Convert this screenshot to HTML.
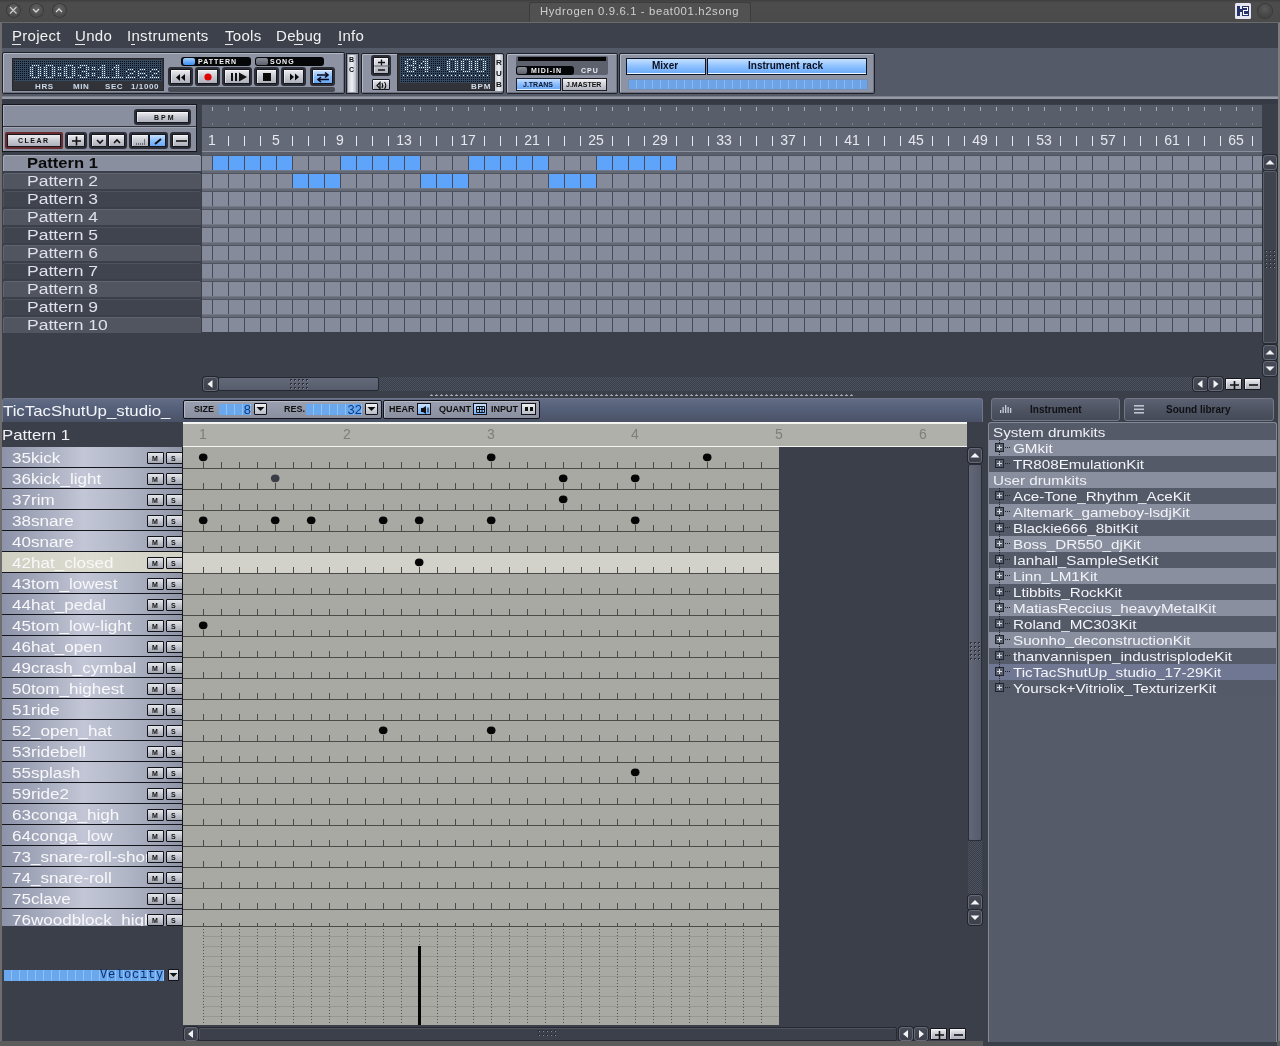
<!DOCTYPE html><html><head><meta charset="utf-8"><title>Hydrogen</title><style>
*{margin:0;padding:0;box-sizing:border-box}
html,body{width:1280px;height:1046px;overflow:hidden;background:#3b3f4a;font-family:"Liberation Sans",sans-serif}
.t{will-change:transform}
div,span{position:absolute}
.t{white-space:pre;line-height:1}
</style></head><body><div style="left:0px;top:0px;width:1280px;height:23px;background:linear-gradient(#3e3e3e,#4d4d4d 3px,#4a4a4a);"></div><div style="left:0px;top:22px;width:1280px;height:1px;background:#6b6b6b;"></div><div style="left:529px;top:2px;width:222px;height:20px;background:#515151;border:1px solid #3c3c3c;border-bottom:none;border-radius:3px 3px 0 0;"></div><div class="t" style="left:540px;top:6px;font-size:11.3px;color:#cfcfcf;letter-spacing:0.65px">Hydrogen 0.9.6.1 - beat001.h2song</div><div style="left:6.5px;top:3.5px;width:13.5px;height:13.5px;border-radius:50%;background:radial-gradient(circle at 50% 35%,#626262,#4a4a4a 75%);box-shadow:0 0 0 0.8px #353535;"></div><div style="left:29.5px;top:3.5px;width:13.5px;height:13.5px;border-radius:50%;background:radial-gradient(circle at 50% 35%,#626262,#4a4a4a 75%);box-shadow:0 0 0 0.8px #353535;"></div><div style="left:52.5px;top:3.5px;width:13.5px;height:13.5px;border-radius:50%;background:radial-gradient(circle at 50% 35%,#626262,#4a4a4a 75%);box-shadow:0 0 0 0.8px #353535;"></div><svg style="position:absolute;left:0;top:0" width="80" height="22"><path d="M10 7l6.5 6.5M16.5 7L10 13.5" stroke="#d0d0d0" stroke-width="1.1"/><path d="M33 9l3 3 3-3" stroke="#d8d8d8" stroke-width="1.3" fill="none"/><path d="M56 12l3-3 3 3" stroke="#d8d8d8" stroke-width="1.3" fill="none"/></svg><svg style="position:absolute;left:1235px;top:3px" width="16" height="16"><rect width="16" height="16" rx="1.5" fill="#e6e6f2"/><rect x="2" y="3" width="3" height="10" fill="#26326a"/><rect x="5" y="6" width="3" height="3" fill="#26326a"/><rect x="7" y="3" width="7" height="10" fill="#26326a"/><path d="M8 4h5v4h-4v3h4v1H8V7h4V5H8z" fill="#ffffff"/></svg><div style="left:1258px;top:4px;width:14px;height:14px;border-radius:50%;background:radial-gradient(circle at 50% 35%,#5a5a5a,#444 70%);box-shadow:0 0 0 1px #3a3a3a;"></div><div style="left:0px;top:23px;width:2px;height:1023px;background:#6e6e6e;"></div><div style="left:1278px;top:23px;width:2px;height:1023px;background:#7d7d7d;"></div><div style="left:2px;top:23px;width:1276px;height:25px;background:#3d414c;"></div><div class="t" style="left:12px;top:28px;font-size:15px;color:#f2f2f2;letter-spacing:0.3px">Project</div><div class="t" style="left:75px;top:28px;font-size:15px;color:#f2f2f2;letter-spacing:0.3px">Undo</div><div class="t" style="left:127px;top:28px;font-size:15px;color:#f2f2f2;letter-spacing:0.3px">Instruments</div><div class="t" style="left:225px;top:28px;font-size:15px;color:#f2f2f2;letter-spacing:0.3px">Tools</div><div class="t" style="left:276px;top:28px;font-size:15px;color:#f2f2f2;letter-spacing:0.3px">Debug</div><div class="t" style="left:338px;top:28px;font-size:15px;color:#f2f2f2;letter-spacing:0.3px">Info</div><div style="left:12px;top:44px;width:9px;height:1px;background:#e8e8e8;"></div><div style="left:75px;top:44px;width:10px;height:1px;background:#e8e8e8;"></div><div style="left:225px;top:44px;width:8px;height:1px;background:#e8e8e8;"></div><div style="left:294px;top:44px;width:9px;height:1px;background:#e8e8e8;"></div><div style="left:131px;top:44px;width:4px;height:1px;background:#e8e8e8;"></div><div style="left:338px;top:44px;width:4px;height:1px;background:#e8e8e8;"></div><div style="left:2px;top:48px;width:1276px;height:4px;background:#555a68;"></div><div style="left:2px;top:52px;width:1276px;height:45px;background:#555a68;"></div><div style="left:2px;top:52px;width:343px;height:42px;background:#8e93a3;border:1px solid #1f2128;box-shadow:inset 1px 1px 0 #b4b8c6, inset -1px -1px 0 #6d7180;border-radius:2px;"></div><div style="left:12px;top:58px;width:152px;height:33px;background:#323338;border:1px solid #26272b;"></div><svg style="position:absolute;left:14px;top:60px" width="148" height="21"><defs><pattern id="pat14" x="0" y="0" width="2" height="2" patternUnits="userSpaceOnUse"><rect width="2" height="2" fill="#354a5f"/><rect x="0" y="1" width="1" height="1" fill="#050b16"/></pattern></defs><rect width="148" height="21" fill="url(#pat14)"/><rect x="16" y="7" width="1" height="1" fill="#e6f0ff"/><rect x="16" y="9" width="1" height="1" fill="#e6f0ff"/><rect x="16" y="11" width="1" height="1" fill="#e6f0ff"/><rect x="16" y="13" width="1" height="1" fill="#e6f0ff"/><rect x="16" y="15" width="1" height="1" fill="#e6f0ff"/><rect x="18" y="5" width="1" height="1" fill="#e6f0ff"/><rect x="18" y="7" width="1" height="1" fill="#e6f0ff"/><rect x="18" y="9" width="1" height="1" fill="#e6f0ff"/><rect x="18" y="11" width="1" height="1" fill="#e6f0ff"/><rect x="18" y="13" width="1" height="1" fill="#e6f0ff"/><rect x="18" y="15" width="1" height="1" fill="#e6f0ff"/><rect x="18" y="17" width="1" height="1" fill="#e6f0ff"/><rect x="20" y="5" width="1" height="1" fill="#e6f0ff"/><rect x="20" y="17" width="1" height="1" fill="#e6f0ff"/><rect x="22" y="5" width="1" height="1" fill="#e6f0ff"/><rect x="22" y="17" width="1" height="1" fill="#e6f0ff"/><rect x="24" y="5" width="1" height="1" fill="#e6f0ff"/><rect x="24" y="7" width="1" height="1" fill="#e6f0ff"/><rect x="24" y="9" width="1" height="1" fill="#e6f0ff"/><rect x="24" y="11" width="1" height="1" fill="#e6f0ff"/><rect x="24" y="13" width="1" height="1" fill="#e6f0ff"/><rect x="24" y="15" width="1" height="1" fill="#e6f0ff"/><rect x="24" y="17" width="1" height="1" fill="#e6f0ff"/><rect x="26" y="7" width="1" height="1" fill="#e6f0ff"/><rect x="26" y="9" width="1" height="1" fill="#e6f0ff"/><rect x="26" y="11" width="1" height="1" fill="#e6f0ff"/><rect x="26" y="13" width="1" height="1" fill="#e6f0ff"/><rect x="26" y="15" width="1" height="1" fill="#e6f0ff"/><rect x="30" y="7" width="1" height="1" fill="#e6f0ff"/><rect x="30" y="9" width="1" height="1" fill="#e6f0ff"/><rect x="30" y="11" width="1" height="1" fill="#e6f0ff"/><rect x="30" y="13" width="1" height="1" fill="#e6f0ff"/><rect x="30" y="15" width="1" height="1" fill="#e6f0ff"/><rect x="32" y="5" width="1" height="1" fill="#e6f0ff"/><rect x="32" y="7" width="1" height="1" fill="#e6f0ff"/><rect x="32" y="9" width="1" height="1" fill="#e6f0ff"/><rect x="32" y="11" width="1" height="1" fill="#e6f0ff"/><rect x="32" y="13" width="1" height="1" fill="#e6f0ff"/><rect x="32" y="15" width="1" height="1" fill="#e6f0ff"/><rect x="32" y="17" width="1" height="1" fill="#e6f0ff"/><rect x="34" y="5" width="1" height="1" fill="#e6f0ff"/><rect x="34" y="17" width="1" height="1" fill="#e6f0ff"/><rect x="36" y="5" width="1" height="1" fill="#e6f0ff"/><rect x="36" y="17" width="1" height="1" fill="#e6f0ff"/><rect x="38" y="5" width="1" height="1" fill="#e6f0ff"/><rect x="38" y="7" width="1" height="1" fill="#e6f0ff"/><rect x="38" y="9" width="1" height="1" fill="#e6f0ff"/><rect x="38" y="11" width="1" height="1" fill="#e6f0ff"/><rect x="38" y="13" width="1" height="1" fill="#e6f0ff"/><rect x="38" y="15" width="1" height="1" fill="#e6f0ff"/><rect x="38" y="17" width="1" height="1" fill="#e6f0ff"/><rect x="40" y="7" width="1" height="1" fill="#e6f0ff"/><rect x="40" y="9" width="1" height="1" fill="#e6f0ff"/><rect x="40" y="11" width="1" height="1" fill="#e6f0ff"/><rect x="40" y="13" width="1" height="1" fill="#e6f0ff"/><rect x="40" y="15" width="1" height="1" fill="#e6f0ff"/><rect x="44" y="7" width="1" height="1" fill="#e6f0ff"/><rect x="44" y="9" width="1" height="1" fill="#e6f0ff"/><rect x="44" y="13" width="1" height="1" fill="#e6f0ff"/><rect x="44" y="15" width="1" height="1" fill="#e6f0ff"/><rect x="46" y="7" width="1" height="1" fill="#e6f0ff"/><rect x="46" y="9" width="1" height="1" fill="#e6f0ff"/><rect x="46" y="13" width="1" height="1" fill="#e6f0ff"/><rect x="46" y="15" width="1" height="1" fill="#e6f0ff"/><rect x="50" y="7" width="1" height="1" fill="#e6f0ff"/><rect x="50" y="9" width="1" height="1" fill="#e6f0ff"/><rect x="50" y="11" width="1" height="1" fill="#e6f0ff"/><rect x="50" y="13" width="1" height="1" fill="#e6f0ff"/><rect x="50" y="15" width="1" height="1" fill="#e6f0ff"/><rect x="52" y="5" width="1" height="1" fill="#e6f0ff"/><rect x="52" y="7" width="1" height="1" fill="#e6f0ff"/><rect x="52" y="9" width="1" height="1" fill="#e6f0ff"/><rect x="52" y="11" width="1" height="1" fill="#e6f0ff"/><rect x="52" y="13" width="1" height="1" fill="#e6f0ff"/><rect x="52" y="15" width="1" height="1" fill="#e6f0ff"/><rect x="52" y="17" width="1" height="1" fill="#e6f0ff"/><rect x="54" y="5" width="1" height="1" fill="#e6f0ff"/><rect x="54" y="17" width="1" height="1" fill="#e6f0ff"/><rect x="56" y="5" width="1" height="1" fill="#e6f0ff"/><rect x="56" y="17" width="1" height="1" fill="#e6f0ff"/><rect x="58" y="5" width="1" height="1" fill="#e6f0ff"/><rect x="58" y="7" width="1" height="1" fill="#e6f0ff"/><rect x="58" y="9" width="1" height="1" fill="#e6f0ff"/><rect x="58" y="11" width="1" height="1" fill="#e6f0ff"/><rect x="58" y="13" width="1" height="1" fill="#e6f0ff"/><rect x="58" y="15" width="1" height="1" fill="#e6f0ff"/><rect x="58" y="17" width="1" height="1" fill="#e6f0ff"/><rect x="60" y="7" width="1" height="1" fill="#e6f0ff"/><rect x="60" y="9" width="1" height="1" fill="#e6f0ff"/><rect x="60" y="11" width="1" height="1" fill="#e6f0ff"/><rect x="60" y="13" width="1" height="1" fill="#e6f0ff"/><rect x="60" y="15" width="1" height="1" fill="#e6f0ff"/><rect x="64" y="7" width="1" height="1" fill="#e6f0ff"/><rect x="64" y="15" width="1" height="1" fill="#e6f0ff"/><rect x="66" y="5" width="1" height="1" fill="#e6f0ff"/><rect x="66" y="7" width="1" height="1" fill="#e6f0ff"/><rect x="66" y="15" width="1" height="1" fill="#e6f0ff"/><rect x="66" y="17" width="1" height="1" fill="#e6f0ff"/><rect x="68" y="5" width="1" height="1" fill="#e6f0ff"/><rect x="68" y="11" width="1" height="1" fill="#e6f0ff"/><rect x="68" y="17" width="1" height="1" fill="#e6f0ff"/><rect x="70" y="5" width="1" height="1" fill="#e6f0ff"/><rect x="70" y="11" width="1" height="1" fill="#e6f0ff"/><rect x="70" y="17" width="1" height="1" fill="#e6f0ff"/><rect x="72" y="5" width="1" height="1" fill="#e6f0ff"/><rect x="72" y="7" width="1" height="1" fill="#e6f0ff"/><rect x="72" y="9" width="1" height="1" fill="#e6f0ff"/><rect x="72" y="11" width="1" height="1" fill="#e6f0ff"/><rect x="72" y="13" width="1" height="1" fill="#e6f0ff"/><rect x="72" y="15" width="1" height="1" fill="#e6f0ff"/><rect x="72" y="17" width="1" height="1" fill="#e6f0ff"/><rect x="74" y="7" width="1" height="1" fill="#e6f0ff"/><rect x="74" y="9" width="1" height="1" fill="#e6f0ff"/><rect x="74" y="13" width="1" height="1" fill="#e6f0ff"/><rect x="74" y="15" width="1" height="1" fill="#e6f0ff"/><rect x="78" y="7" width="1" height="1" fill="#e6f0ff"/><rect x="78" y="9" width="1" height="1" fill="#e6f0ff"/><rect x="78" y="13" width="1" height="1" fill="#e6f0ff"/><rect x="78" y="15" width="1" height="1" fill="#e6f0ff"/><rect x="80" y="7" width="1" height="1" fill="#e6f0ff"/><rect x="80" y="9" width="1" height="1" fill="#e6f0ff"/><rect x="80" y="13" width="1" height="1" fill="#e6f0ff"/><rect x="80" y="15" width="1" height="1" fill="#e6f0ff"/><rect x="84" y="9" width="1" height="1" fill="#e6f0ff"/><rect x="84" y="17" width="1" height="1" fill="#e6f0ff"/><rect x="86" y="7" width="1" height="1" fill="#e6f0ff"/><rect x="86" y="17" width="1" height="1" fill="#e6f0ff"/><rect x="88" y="5" width="1" height="1" fill="#e6f0ff"/><rect x="88" y="7" width="1" height="1" fill="#e6f0ff"/><rect x="88" y="9" width="1" height="1" fill="#e6f0ff"/><rect x="88" y="11" width="1" height="1" fill="#e6f0ff"/><rect x="88" y="13" width="1" height="1" fill="#e6f0ff"/><rect x="88" y="15" width="1" height="1" fill="#e6f0ff"/><rect x="88" y="17" width="1" height="1" fill="#e6f0ff"/><rect x="90" y="5" width="1" height="1" fill="#e6f0ff"/><rect x="90" y="7" width="1" height="1" fill="#e6f0ff"/><rect x="90" y="9" width="1" height="1" fill="#e6f0ff"/><rect x="90" y="11" width="1" height="1" fill="#e6f0ff"/><rect x="90" y="13" width="1" height="1" fill="#e6f0ff"/><rect x="90" y="15" width="1" height="1" fill="#e6f0ff"/><rect x="90" y="17" width="1" height="1" fill="#e6f0ff"/><rect x="92" y="17" width="1" height="1" fill="#e6f0ff"/><rect x="94" y="17" width="1" height="1" fill="#e6f0ff"/><rect x="98" y="9" width="1" height="1" fill="#e6f0ff"/><rect x="98" y="17" width="1" height="1" fill="#e6f0ff"/><rect x="100" y="7" width="1" height="1" fill="#e6f0ff"/><rect x="100" y="17" width="1" height="1" fill="#e6f0ff"/><rect x="102" y="5" width="1" height="1" fill="#e6f0ff"/><rect x="102" y="7" width="1" height="1" fill="#e6f0ff"/><rect x="102" y="9" width="1" height="1" fill="#e6f0ff"/><rect x="102" y="11" width="1" height="1" fill="#e6f0ff"/><rect x="102" y="13" width="1" height="1" fill="#e6f0ff"/><rect x="102" y="15" width="1" height="1" fill="#e6f0ff"/><rect x="102" y="17" width="1" height="1" fill="#e6f0ff"/><rect x="104" y="5" width="1" height="1" fill="#e6f0ff"/><rect x="104" y="7" width="1" height="1" fill="#e6f0ff"/><rect x="104" y="9" width="1" height="1" fill="#e6f0ff"/><rect x="104" y="11" width="1" height="1" fill="#e6f0ff"/><rect x="104" y="13" width="1" height="1" fill="#e6f0ff"/><rect x="104" y="15" width="1" height="1" fill="#e6f0ff"/><rect x="104" y="17" width="1" height="1" fill="#e6f0ff"/><rect x="106" y="17" width="1" height="1" fill="#e6f0ff"/><rect x="108" y="17" width="1" height="1" fill="#e6f0ff"/><rect x="112" y="11" width="1" height="1" fill="#e6f0ff"/><rect x="112" y="17" width="1" height="1" fill="#e6f0ff"/><rect x="114" y="9" width="1" height="1" fill="#e6f0ff"/><rect x="114" y="15" width="1" height="1" fill="#e6f0ff"/><rect x="114" y="17" width="1" height="1" fill="#e6f0ff"/><rect x="116" y="9" width="1" height="1" fill="#e6f0ff"/><rect x="116" y="13" width="1" height="1" fill="#e6f0ff"/><rect x="116" y="17" width="1" height="1" fill="#e6f0ff"/><rect x="118" y="9" width="1" height="1" fill="#e6f0ff"/><rect x="118" y="13" width="1" height="1" fill="#e6f0ff"/><rect x="118" y="17" width="1" height="1" fill="#e6f0ff"/><rect x="120" y="11" width="1" height="1" fill="#e6f0ff"/><rect x="120" y="17" width="1" height="1" fill="#e6f0ff"/><rect x="124" y="11" width="1" height="1" fill="#e6f0ff"/><rect x="124" y="13" width="1" height="1" fill="#e6f0ff"/><rect x="124" y="15" width="1" height="1" fill="#e6f0ff"/><rect x="126" y="9" width="1" height="1" fill="#e6f0ff"/><rect x="126" y="13" width="1" height="1" fill="#e6f0ff"/><rect x="126" y="17" width="1" height="1" fill="#e6f0ff"/><rect x="128" y="9" width="1" height="1" fill="#e6f0ff"/><rect x="128" y="13" width="1" height="1" fill="#e6f0ff"/><rect x="128" y="17" width="1" height="1" fill="#e6f0ff"/><rect x="130" y="9" width="1" height="1" fill="#e6f0ff"/><rect x="130" y="13" width="1" height="1" fill="#e6f0ff"/><rect x="130" y="17" width="1" height="1" fill="#e6f0ff"/><rect x="132" y="15" width="1" height="1" fill="#e6f0ff"/><rect x="136" y="11" width="1" height="1" fill="#e6f0ff"/><rect x="136" y="17" width="1" height="1" fill="#e6f0ff"/><rect x="138" y="9" width="1" height="1" fill="#e6f0ff"/><rect x="138" y="15" width="1" height="1" fill="#e6f0ff"/><rect x="138" y="17" width="1" height="1" fill="#e6f0ff"/><rect x="140" y="9" width="1" height="1" fill="#e6f0ff"/><rect x="140" y="13" width="1" height="1" fill="#e6f0ff"/><rect x="140" y="17" width="1" height="1" fill="#e6f0ff"/><rect x="142" y="9" width="1" height="1" fill="#e6f0ff"/><rect x="142" y="13" width="1" height="1" fill="#e6f0ff"/><rect x="142" y="17" width="1" height="1" fill="#e6f0ff"/><rect x="144" y="11" width="1" height="1" fill="#e6f0ff"/><rect x="144" y="17" width="1" height="1" fill="#e6f0ff"/></svg><div class="t" style="left:35px;top:83px;font-size:8px;font-weight:bold;color:#c9d8ea;letter-spacing:0.6px">HRS</div><div class="t" style="left:73px;top:83px;font-size:8px;font-weight:bold;color:#c9d8ea;letter-spacing:0.6px">MIN</div><div class="t" style="left:105px;top:83px;font-size:8px;font-weight:bold;color:#c9d8ea;letter-spacing:0.6px">SEC</div><div class="t" style="left:131px;top:83px;font-size:8px;font-weight:bold;color:#c9d8ea;letter-spacing:0.6px">1/1000</div><div style="left:181px;top:57px;width:70px;height:9px;background:#050608;border-radius:3px;"></div><div style="left:183px;top:58px;width:12px;height:7px;background:linear-gradient(#9fd0ff,#3d8ef0);border-radius:2px;"></div><div class="t" style="left:198px;top:58px;font-size:7px;font-weight:bold;color:#f4f4f4;letter-spacing:1px">PATTERN</div><div style="left:255px;top:57px;width:69px;height:9px;background:#050608;border-radius:3px;"></div><div style="left:256px;top:58px;width:12px;height:7px;background:linear-gradient(#8a8e98,#5d616b);border-radius:2px;"></div><div class="t" style="left:270px;top:58px;font-size:7px;font-weight:bold;color:#f4f4f4;letter-spacing:1px">SONG</div><div style="left:168px;top:67px;width:25px;height:19px;background:#2c2f38;border-radius:3px;"></div><div style="left:170px;top:69px;width:21px;height:15px;background:linear-gradient(#eeeef2,#c9cbd3 50%,#aeb1bc);border:1px solid #15171c;border-radius:1px;box-shadow:inset 1px 1px 0 #ffffff88;"><svg style="position:absolute;left:0;top:0" width="40" height="20"><path d="M3 7.5l4-3.5v7zM8 7.5l4-3.5v7z" transform="translate(2,0)" fill="#0a0a0a"/></svg></div><div style="left:195px;top:67px;width:25px;height:19px;background:#2c2f38;border-radius:3px;"></div><div style="left:197px;top:69px;width:21px;height:15px;background:linear-gradient(#eeeef2,#c9cbd3 50%,#aeb1bc);border:1px solid #15171c;border-radius:1px;box-shadow:inset 1px 1px 0 #ffffff88;"><svg style="position:absolute;left:0;top:0" width="40" height="20"><circle cx="10" cy="7" r="3.6" fill="#e00000"/></svg></div><div style="left:222px;top:67px;width:30px;height:19px;background:#2c2f38;border-radius:3px;"></div><div style="left:224px;top:69px;width:26px;height:15px;background:linear-gradient(#eeeef2,#c9cbd3 50%,#aeb1bc);border:1px solid #15171c;border-radius:1px;box-shadow:inset 1px 1px 0 #ffffff88;"><svg style="position:absolute;left:0;top:0" width="40" height="20"><rect x="6" y="3" width="2" height="8" fill="#111"/><rect x="10" y="3" width="2" height="8" fill="#111"/><path d="M14 2.5l8 4.5-8 4.5z" fill="#111"/></svg></div><div style="left:254px;top:67px;width:25px;height:19px;background:#2c2f38;border-radius:3px;"></div><div style="left:256px;top:69px;width:21px;height:15px;background:linear-gradient(#eeeef2,#c9cbd3 50%,#aeb1bc);border:1px solid #15171c;border-radius:1px;box-shadow:inset 1px 1px 0 #ffffff88;"><svg style="position:absolute;left:0;top:0" width="40" height="20"><rect x="6" y="3" width="8" height="8" fill="#0a0a0a"/></svg></div><div style="left:281px;top:67px;width:25px;height:19px;background:#2c2f38;border-radius:3px;"></div><div style="left:283px;top:69px;width:21px;height:15px;background:linear-gradient(#eeeef2,#c9cbd3 50%,#aeb1bc);border:1px solid #15171c;border-radius:1px;box-shadow:inset 1px 1px 0 #ffffff88;"><svg style="position:absolute;left:0;top:0" width="40" height="20"><path d="M5 3.5l4 3.5-4 3.5zM10 3.5l4 3.5-4 3.5z" transform="translate(1,0)" fill="#0a0a0a"/></svg></div><div style="left:310px;top:67px;width:25px;height:19px;background:#2c2f38;border-radius:3px;"></div><div style="left:312px;top:69px;width:21px;height:15px;background:linear-gradient(#cfe4ff,#8fc0ff 45%,#6aa8f5);border:1px solid #15171c;border-radius:1px;box-shadow:inset 1px 1px 0 #ffffff88;"><svg style="position:absolute;left:0;top:0" width="40" height="20"><path d="M4 5h11M12 2.5l3 2.5-3 2.5M16 9.5H5M8 7l-3 2.5 3 2.5" stroke="#0a0a1a" stroke-width="1.6" fill="none"/></svg></div><div style="left:168px;top:87px;width:167px;height:5px;background:#474b55;border-radius:2px;"></div><div style="left:346px;top:53px;width:13px;height:41px;background:#8e93a3;border:1px solid #1f2128;"></div><div style="left:348px;top:55px;width:8px;height:37px;background:linear-gradient(90deg,#c9ccd6,#f0f1f5 50%,#b9bcc7);"></div><div class="t" style="left:349px;top:56px;font-size:7px;font-weight:bold;color:#111">B</div><div class="t" style="left:349px;top:66px;font-size:7px;font-weight:bold;color:#111">C</div><div style="left:361px;top:53px;width:143px;height:41px;background:#8e93a3;border:1px solid #1f2128;box-shadow:inset 1px 1px 0 #b4b8c6, inset -1px -1px 0 #6d7180;border-radius:2px;"></div><div style="left:371px;top:55px;width:20px;height:21px;background:#2c2f38;border-radius:3px;"></div><div style="left:373px;top:57px;width:16px;height:17px;background:linear-gradient(#eeeef2,#c9cbd3 50%,#aeb1bc);border:1px solid #15171c;border-radius:1px;box-shadow:inset 1px 1px 0 #ffffff88;"><svg style="position:absolute;left:0;top:0" width="16" height="17"><path d="M4 4.5h7M7.5 1.5v6M4 12h7" stroke="#111" stroke-width="1.3"/><path d="M0 8h16" stroke="#5b5e68" stroke-width="1"/></svg></div><div style="left:372px;top:79px;width:18px;height:11px;background:linear-gradient(#eeeef2,#c9cbd3 50%,#aeb1bc);border:1px solid #15171c;border-radius:1px;box-shadow:inset 1px 1px 0 #ffffff88;"><svg style="position:absolute;left:0;top:0" width="18" height="11"><path d="M4 5.5l3-3v6z" fill="none" stroke="#111" stroke-width="1.2"/><path d="M9 3q1.5 2.5 0 5M11.5 2q2.5 3.5 0 7" stroke="#111" stroke-width="1.1" fill="none"/></svg></div><div style="left:397px;top:54px;width:98px;height:37px;background:#323338;border:1px solid #26272b;"></div><svg style="position:absolute;left:400px;top:56px" width="91" height="27"><defs><pattern id="pat400" x="0" y="0" width="2" height="2" patternUnits="userSpaceOnUse"><rect width="2" height="2" fill="#354a5f"/><rect x="1" y="1" width="1" height="1" fill="#050b16"/></pattern></defs><rect width="91" height="27" fill="url(#pat400)"/><rect x="3" y="19" width="1" height="1" fill="#e6f0ff"/><rect x="5" y="5" width="1" height="1" fill="#e6f0ff"/><rect x="5" y="7" width="1" height="1" fill="#e6f0ff"/><rect x="5" y="11" width="1" height="1" fill="#e6f0ff"/><rect x="5" y="13" width="1" height="1" fill="#e6f0ff"/><rect x="7" y="3" width="1" height="1" fill="#e6f0ff"/><rect x="7" y="5" width="1" height="1" fill="#e6f0ff"/><rect x="7" y="7" width="1" height="1" fill="#e6f0ff"/><rect x="7" y="9" width="1" height="1" fill="#e6f0ff"/><rect x="7" y="11" width="1" height="1" fill="#e6f0ff"/><rect x="7" y="13" width="1" height="1" fill="#e6f0ff"/><rect x="7" y="15" width="1" height="1" fill="#e6f0ff"/><rect x="7" y="19" width="1" height="1" fill="#e6f0ff"/><rect x="9" y="3" width="1" height="1" fill="#e6f0ff"/><rect x="9" y="9" width="1" height="1" fill="#e6f0ff"/><rect x="9" y="15" width="1" height="1" fill="#e6f0ff"/><rect x="11" y="3" width="1" height="1" fill="#e6f0ff"/><rect x="11" y="9" width="1" height="1" fill="#e6f0ff"/><rect x="11" y="15" width="1" height="1" fill="#e6f0ff"/><rect x="11" y="19" width="1" height="1" fill="#e6f0ff"/><rect x="13" y="3" width="1" height="1" fill="#e6f0ff"/><rect x="13" y="5" width="1" height="1" fill="#e6f0ff"/><rect x="13" y="7" width="1" height="1" fill="#e6f0ff"/><rect x="13" y="9" width="1" height="1" fill="#e6f0ff"/><rect x="13" y="11" width="1" height="1" fill="#e6f0ff"/><rect x="13" y="13" width="1" height="1" fill="#e6f0ff"/><rect x="13" y="15" width="1" height="1" fill="#e6f0ff"/><rect x="15" y="5" width="1" height="1" fill="#e6f0ff"/><rect x="15" y="7" width="1" height="1" fill="#e6f0ff"/><rect x="15" y="11" width="1" height="1" fill="#e6f0ff"/><rect x="15" y="13" width="1" height="1" fill="#e6f0ff"/><rect x="15" y="19" width="1" height="1" fill="#e6f0ff"/><rect x="19" y="9" width="1" height="1" fill="#e6f0ff"/><rect x="19" y="11" width="1" height="1" fill="#e6f0ff"/><rect x="19" y="19" width="1" height="1" fill="#e6f0ff"/><rect x="21" y="7" width="1" height="1" fill="#e6f0ff"/><rect x="21" y="11" width="1" height="1" fill="#e6f0ff"/><rect x="23" y="5" width="1" height="1" fill="#e6f0ff"/><rect x="23" y="11" width="1" height="1" fill="#e6f0ff"/><rect x="23" y="19" width="1" height="1" fill="#e6f0ff"/><rect x="25" y="3" width="1" height="1" fill="#e6f0ff"/><rect x="25" y="5" width="1" height="1" fill="#e6f0ff"/><rect x="25" y="7" width="1" height="1" fill="#e6f0ff"/><rect x="25" y="9" width="1" height="1" fill="#e6f0ff"/><rect x="25" y="11" width="1" height="1" fill="#e6f0ff"/><rect x="25" y="13" width="1" height="1" fill="#e6f0ff"/><rect x="25" y="15" width="1" height="1" fill="#e6f0ff"/><rect x="27" y="3" width="1" height="1" fill="#e6f0ff"/><rect x="27" y="5" width="1" height="1" fill="#e6f0ff"/><rect x="27" y="7" width="1" height="1" fill="#e6f0ff"/><rect x="27" y="9" width="1" height="1" fill="#e6f0ff"/><rect x="27" y="11" width="1" height="1" fill="#e6f0ff"/><rect x="27" y="13" width="1" height="1" fill="#e6f0ff"/><rect x="27" y="15" width="1" height="1" fill="#e6f0ff"/><rect x="27" y="19" width="1" height="1" fill="#e6f0ff"/><rect x="29" y="11" width="1" height="1" fill="#e6f0ff"/><rect x="31" y="19" width="1" height="1" fill="#e6f0ff"/><rect x="35" y="19" width="1" height="1" fill="#e6f0ff"/><rect x="37" y="11" width="1" height="1" fill="#e6f0ff"/><rect x="37" y="13" width="1" height="1" fill="#e6f0ff"/><rect x="39" y="11" width="1" height="1" fill="#e6f0ff"/><rect x="39" y="13" width="1" height="1" fill="#e6f0ff"/><rect x="39" y="19" width="1" height="1" fill="#e6f0ff"/><rect x="43" y="19" width="1" height="1" fill="#e6f0ff"/><rect x="47" y="5" width="1" height="1" fill="#e6f0ff"/><rect x="47" y="7" width="1" height="1" fill="#e6f0ff"/><rect x="47" y="9" width="1" height="1" fill="#e6f0ff"/><rect x="47" y="11" width="1" height="1" fill="#e6f0ff"/><rect x="47" y="13" width="1" height="1" fill="#e6f0ff"/><rect x="47" y="19" width="1" height="1" fill="#e6f0ff"/><rect x="49" y="3" width="1" height="1" fill="#e6f0ff"/><rect x="49" y="5" width="1" height="1" fill="#e6f0ff"/><rect x="49" y="7" width="1" height="1" fill="#e6f0ff"/><rect x="49" y="9" width="1" height="1" fill="#e6f0ff"/><rect x="49" y="11" width="1" height="1" fill="#e6f0ff"/><rect x="49" y="13" width="1" height="1" fill="#e6f0ff"/><rect x="49" y="15" width="1" height="1" fill="#e6f0ff"/><rect x="51" y="3" width="1" height="1" fill="#e6f0ff"/><rect x="51" y="15" width="1" height="1" fill="#e6f0ff"/><rect x="51" y="19" width="1" height="1" fill="#e6f0ff"/><rect x="53" y="3" width="1" height="1" fill="#e6f0ff"/><rect x="53" y="15" width="1" height="1" fill="#e6f0ff"/><rect x="55" y="3" width="1" height="1" fill="#e6f0ff"/><rect x="55" y="5" width="1" height="1" fill="#e6f0ff"/><rect x="55" y="7" width="1" height="1" fill="#e6f0ff"/><rect x="55" y="9" width="1" height="1" fill="#e6f0ff"/><rect x="55" y="11" width="1" height="1" fill="#e6f0ff"/><rect x="55" y="13" width="1" height="1" fill="#e6f0ff"/><rect x="55" y="15" width="1" height="1" fill="#e6f0ff"/><rect x="55" y="19" width="1" height="1" fill="#e6f0ff"/><rect x="57" y="5" width="1" height="1" fill="#e6f0ff"/><rect x="57" y="7" width="1" height="1" fill="#e6f0ff"/><rect x="57" y="9" width="1" height="1" fill="#e6f0ff"/><rect x="57" y="11" width="1" height="1" fill="#e6f0ff"/><rect x="57" y="13" width="1" height="1" fill="#e6f0ff"/><rect x="59" y="19" width="1" height="1" fill="#e6f0ff"/><rect x="61" y="5" width="1" height="1" fill="#e6f0ff"/><rect x="61" y="7" width="1" height="1" fill="#e6f0ff"/><rect x="61" y="9" width="1" height="1" fill="#e6f0ff"/><rect x="61" y="11" width="1" height="1" fill="#e6f0ff"/><rect x="61" y="13" width="1" height="1" fill="#e6f0ff"/><rect x="63" y="3" width="1" height="1" fill="#e6f0ff"/><rect x="63" y="5" width="1" height="1" fill="#e6f0ff"/><rect x="63" y="7" width="1" height="1" fill="#e6f0ff"/><rect x="63" y="9" width="1" height="1" fill="#e6f0ff"/><rect x="63" y="11" width="1" height="1" fill="#e6f0ff"/><rect x="63" y="13" width="1" height="1" fill="#e6f0ff"/><rect x="63" y="15" width="1" height="1" fill="#e6f0ff"/><rect x="63" y="19" width="1" height="1" fill="#e6f0ff"/><rect x="65" y="3" width="1" height="1" fill="#e6f0ff"/><rect x="65" y="15" width="1" height="1" fill="#e6f0ff"/><rect x="67" y="3" width="1" height="1" fill="#e6f0ff"/><rect x="67" y="15" width="1" height="1" fill="#e6f0ff"/><rect x="67" y="19" width="1" height="1" fill="#e6f0ff"/><rect x="69" y="3" width="1" height="1" fill="#e6f0ff"/><rect x="69" y="5" width="1" height="1" fill="#e6f0ff"/><rect x="69" y="7" width="1" height="1" fill="#e6f0ff"/><rect x="69" y="9" width="1" height="1" fill="#e6f0ff"/><rect x="69" y="11" width="1" height="1" fill="#e6f0ff"/><rect x="69" y="13" width="1" height="1" fill="#e6f0ff"/><rect x="69" y="15" width="1" height="1" fill="#e6f0ff"/><rect x="71" y="5" width="1" height="1" fill="#e6f0ff"/><rect x="71" y="7" width="1" height="1" fill="#e6f0ff"/><rect x="71" y="9" width="1" height="1" fill="#e6f0ff"/><rect x="71" y="11" width="1" height="1" fill="#e6f0ff"/><rect x="71" y="13" width="1" height="1" fill="#e6f0ff"/><rect x="71" y="19" width="1" height="1" fill="#e6f0ff"/><rect x="75" y="5" width="1" height="1" fill="#e6f0ff"/><rect x="75" y="7" width="1" height="1" fill="#e6f0ff"/><rect x="75" y="9" width="1" height="1" fill="#e6f0ff"/><rect x="75" y="11" width="1" height="1" fill="#e6f0ff"/><rect x="75" y="13" width="1" height="1" fill="#e6f0ff"/><rect x="75" y="19" width="1" height="1" fill="#e6f0ff"/><rect x="77" y="3" width="1" height="1" fill="#e6f0ff"/><rect x="77" y="5" width="1" height="1" fill="#e6f0ff"/><rect x="77" y="7" width="1" height="1" fill="#e6f0ff"/><rect x="77" y="9" width="1" height="1" fill="#e6f0ff"/><rect x="77" y="11" width="1" height="1" fill="#e6f0ff"/><rect x="77" y="13" width="1" height="1" fill="#e6f0ff"/><rect x="77" y="15" width="1" height="1" fill="#e6f0ff"/><rect x="79" y="3" width="1" height="1" fill="#e6f0ff"/><rect x="79" y="15" width="1" height="1" fill="#e6f0ff"/><rect x="79" y="19" width="1" height="1" fill="#e6f0ff"/><rect x="81" y="3" width="1" height="1" fill="#e6f0ff"/><rect x="81" y="15" width="1" height="1" fill="#e6f0ff"/><rect x="83" y="3" width="1" height="1" fill="#e6f0ff"/><rect x="83" y="5" width="1" height="1" fill="#e6f0ff"/><rect x="83" y="7" width="1" height="1" fill="#e6f0ff"/><rect x="83" y="9" width="1" height="1" fill="#e6f0ff"/><rect x="83" y="11" width="1" height="1" fill="#e6f0ff"/><rect x="83" y="13" width="1" height="1" fill="#e6f0ff"/><rect x="83" y="15" width="1" height="1" fill="#e6f0ff"/><rect x="83" y="19" width="1" height="1" fill="#e6f0ff"/><rect x="85" y="5" width="1" height="1" fill="#e6f0ff"/><rect x="85" y="7" width="1" height="1" fill="#e6f0ff"/><rect x="85" y="9" width="1" height="1" fill="#e6f0ff"/><rect x="85" y="11" width="1" height="1" fill="#e6f0ff"/><rect x="85" y="13" width="1" height="1" fill="#e6f0ff"/><rect x="87" y="19" width="1" height="1" fill="#e6f0ff"/></svg><div class="t" style="left:471px;top:83px;font-size:8px;font-weight:bold;color:#d2deea;letter-spacing:0.8px">BPM</div><div style="left:495px;top:55px;width:8px;height:36px;background:linear-gradient(90deg,#c9ccd6,#f0f1f5 50%,#b9bcc7);"></div><div class="t" style="left:496px;top:59px;font-size:8px;font-weight:bold;color:#111">R</div><div class="t" style="left:496px;top:70px;font-size:8px;font-weight:bold;color:#111">U</div><div class="t" style="left:496px;top:81px;font-size:8px;font-weight:bold;color:#111">B</div><div style="left:506px;top:53px;width:112px;height:41px;background:#8e93a3;border:1px solid #1f2128;box-shadow:inset 1px 1px 0 #b4b8c6, inset -1px -1px 0 #6d7180;border-radius:2px;"></div><div style="left:516px;top:56px;width:92px;height:19px;background:#5d616d;border-radius:2px;"></div><div style="left:518px;top:57px;width:88px;height:4px;background:#050505;"></div><div style="left:516px;top:66px;width:58px;height:9px;background:#050608;border-radius:3px;"></div><div style="left:517px;top:67px;width:10px;height:7px;background:linear-gradient(#8a8e98,#5d616b);border-radius:2px;"></div><div class="t" style="left:531px;top:67px;font-size:7px;font-weight:bold;color:#f4f4f4;letter-spacing:1px">MIDI-IN</div><div class="t" style="left:581px;top:67px;font-size:7px;font-weight:bold;color:#e8eaf0;letter-spacing:1px">CPU</div><div style="left:516px;top:78px;width:45px;height:13px;background:linear-gradient(#c8e0ff,#86bbff 50%,#6aa8f5);border:1px solid #1a2030;box-shadow:inset 0 -1px 0 #e0f0ff;"></div><div class="t" style="left:523px;top:81px;font-size:7px;font-weight:bold;color:#0a1530">J.TRANS</div><div style="left:562px;top:78px;width:45px;height:13px;background:linear-gradient(#f2f2f5,#cfd1d8 50%,#b3b6c0);border:1px solid #1a1c22;"></div><div class="t" style="left:566px;top:81px;font-size:7px;font-weight:bold;color:#111">J.MASTER</div><div style="left:619px;top:53px;width:256px;height:41px;background:#8e93a3;border:1px solid #1f2128;box-shadow:inset 1px 1px 0 #b4b8c6, inset -1px -1px 0 #6d7180;border-radius:2px;"></div><div style="left:626px;top:58px;width:80px;height:17px;background:linear-gradient(#c6e0ff,#8cc0ff 50%,#6aa8f5);border:1px solid #0e1525;box-shadow:inset 0 -1px 0 #eef6ff;"></div><div class="t" style="left:652px;top:61px;font-size:10px;font-weight:bold;color:#0a0f1e">Mixer</div><div style="left:707px;top:58px;width:160px;height:17px;background:linear-gradient(#c6e0ff,#8cc0ff 50%,#6aa8f5);border:1px solid #0e1525;box-shadow:inset 0 -1px 0 #eef6ff;"></div><div class="t" style="left:748px;top:61px;font-size:10px;font-weight:bold;color:#0a0f1e">Instrument rack</div><div style="left:628px;top:79px;width:240px;height:11px;background:repeating-linear-gradient(90deg,#6da4e8 0,#6da4e8 7px,#8ab8f0 7px,#8ab8f0 8px);border:1px solid #7a8fb0;"></div><div style="left:2px;top:94px;width:1276px;height:3px;background:#555a68;"></div><div style="left:2px;top:96px;width:1276px;height:1px;background:#7b7f8c;"></div><div style="left:2px;top:97px;width:1276px;height:2px;background:#9599a6;"></div><div style="left:2px;top:99px;width:1276px;height:296px;background:#3b3f4a;"></div><div style="left:2px;top:99px;width:1276px;height:5px;background:#363a44;"></div><div style="left:2px;top:104px;width:195px;height:48px;background:#8a8fa0;border:1px solid #15171c;box-shadow:inset 1px 1px 0 #a9adbb;"></div><div style="left:3px;top:126px;width:193px;height:1px;background:#30333b;"></div><div style="left:3px;top:127px;width:193px;height:1px;background:#a3a7b5;"></div><div style="left:134px;top:109px;width:57px;height:16px;background:#2c2f38;border-radius:3px;"></div><div style="left:136px;top:111px;width:53px;height:12px;background:linear-gradient(#eeeef2,#c9cbd3 50%,#aeb1bc);border:1px solid #15171c;border-radius:1px;box-shadow:inset 1px 1px 0 #ffffff88;"><div class="t" style="left:17px;top:2px;font-size:7px;font-weight:bold;color:#111;letter-spacing:2px">BPM</div></div><div style="left:5px;top:132px;width:58px;height:17px;background:#6b2a2e;border-radius:2px;"></div><div style="left:7px;top:134px;width:54px;height:13px;background:linear-gradient(#eeeef2,#c9cbd3 50%,#aeb1bc);border:1px solid #15171c;"><div class="t" style="left:10px;top:2px;font-size:7px;font-weight:bold;color:#111;letter-spacing:1.5px">CLEAR</div></div><div style="left:65px;top:132px;width:22px;height:17px;background:#2c2f38;border-radius:3px;"></div><div style="left:67px;top:134px;width:18px;height:13px;background:linear-gradient(#eeeef2,#c9cbd3 50%,#aeb1bc);border:1px solid #15171c;border-radius:1px;box-shadow:inset 1px 1px 0 #ffffff88;"><svg style="position:absolute;left:0;top:0" width="18" height="13"><path d="M4 6h9M8.5 1.5v9" stroke="#111" stroke-width="1.6"/></svg></div><div style="left:89px;top:132px;width:21px;height:17px;background:#2c2f38;border-radius:3px;"></div><div style="left:91px;top:134px;width:17px;height:13px;background:linear-gradient(#eeeef2,#c9cbd3 50%,#aeb1bc);border:1px solid #15171c;border-radius:1px;box-shadow:inset 1px 1px 0 #ffffff88;"><svg style="position:absolute;left:0;top:0" width="17" height="13"><path d="M5 5l3 3 3-3" stroke="#111" stroke-width="1.6" fill="none"/></svg></div><div style="left:106px;top:132px;width:21px;height:17px;background:#2c2f38;border-radius:3px;"></div><div style="left:108px;top:134px;width:17px;height:13px;background:linear-gradient(#eeeef2,#c9cbd3 50%,#aeb1bc);border:1px solid #15171c;border-radius:1px;box-shadow:inset 1px 1px 0 #ffffff88;"><svg style="position:absolute;left:0;top:0" width="17" height="13"><path d="M5 8l3-3 3 3" stroke="#111" stroke-width="1.6" fill="none"/></svg></div><div style="left:129px;top:132px;width:39px;height:17px;background:#2c2f38;border-radius:3px;"></div><div style="left:131px;top:134px;width:18px;height:13px;background:linear-gradient(#eeeef2,#c9cbd3 50%,#aeb1bc);border:1px solid #15171c;border-radius:1px;box-shadow:inset 1px 1px 0 #ffffff88;"><svg style="position:absolute;left:0;top:0" width="18" height="13"><path d="M4 9h7M12 9h1M12 7h1M12 5h1" stroke="#222" stroke-width="1" stroke-dasharray="1 1"/></svg></div><div style="left:149px;top:134px;width:17px;height:13px;background:linear-gradient(#c6e0ff,#8cc0ff 50%,#6aa8f5);border:1px solid #15171c;"><svg style="position:absolute;left:0;top:0" width="17" height="13"><path d="M5 9l6-5" stroke="#111" stroke-width="2"/></svg></div><div style="left:170px;top:132px;width:21px;height:17px;background:#2c2f38;border-radius:3px;"></div><div style="left:172px;top:134px;width:17px;height:13px;background:linear-gradient(#eeeef2,#c9cbd3 50%,#aeb1bc);border:1px solid #15171c;border-radius:1px;box-shadow:inset 1px 1px 0 #ffffff88;"><svg style="position:absolute;left:0;top:0" width="17" height="13"><path d="M3 6h11" stroke="#111" stroke-width="1.6"/></svg></div><div style="left:3px;top:155px;width:198px;height:16px;background:#8a8fa0;border-radius:3px 3px 0 0;box-shadow:inset 0 1px 0 #a4a9b6,inset 1px 0 0 #a4a9b6;"></div><div class="t" style="left:27px;top:156px;font-size:14px;font-weight:bold;color:#0a0a0a;transform:scaleX(1.185);transform-origin:0 0">Pattern 1</div><div style="left:3px;top:173px;width:198px;height:16px;background:#50555f;border-radius:3px 3px 0 0;box-shadow:inset 0 1px 0 #5f6470,inset 1px 0 0 #5f6470;"></div><div class="t" style="left:27px;top:174px;font-size:14px;font-weight:normal;color:#dfe2ea;transform:scaleX(1.25);transform-origin:0 0">Pattern 2</div><div style="left:3px;top:191px;width:198px;height:16px;background:#40444e;border-radius:3px 3px 0 0;box-shadow:inset 0 1px 0 #4d515c,inset 1px 0 0 #4d515c;"></div><div class="t" style="left:27px;top:192px;font-size:14px;font-weight:normal;color:#dfe2ea;transform:scaleX(1.25);transform-origin:0 0">Pattern 3</div><div style="left:3px;top:209px;width:198px;height:16px;background:#50555f;border-radius:3px 3px 0 0;box-shadow:inset 0 1px 0 #5f6470,inset 1px 0 0 #5f6470;"></div><div class="t" style="left:27px;top:210px;font-size:14px;font-weight:normal;color:#dfe2ea;transform:scaleX(1.25);transform-origin:0 0">Pattern 4</div><div style="left:3px;top:227px;width:198px;height:16px;background:#40444e;border-radius:3px 3px 0 0;box-shadow:inset 0 1px 0 #4d515c,inset 1px 0 0 #4d515c;"></div><div class="t" style="left:27px;top:228px;font-size:14px;font-weight:normal;color:#dfe2ea;transform:scaleX(1.25);transform-origin:0 0">Pattern 5</div><div style="left:3px;top:245px;width:198px;height:16px;background:#50555f;border-radius:3px 3px 0 0;box-shadow:inset 0 1px 0 #5f6470,inset 1px 0 0 #5f6470;"></div><div class="t" style="left:27px;top:246px;font-size:14px;font-weight:normal;color:#dfe2ea;transform:scaleX(1.25);transform-origin:0 0">Pattern 6</div><div style="left:3px;top:263px;width:198px;height:16px;background:#40444e;border-radius:3px 3px 0 0;box-shadow:inset 0 1px 0 #4d515c,inset 1px 0 0 #4d515c;"></div><div class="t" style="left:27px;top:264px;font-size:14px;font-weight:normal;color:#dfe2ea;transform:scaleX(1.25);transform-origin:0 0">Pattern 7</div><div style="left:3px;top:281px;width:198px;height:16px;background:#50555f;border-radius:3px 3px 0 0;box-shadow:inset 0 1px 0 #5f6470,inset 1px 0 0 #5f6470;"></div><div class="t" style="left:27px;top:282px;font-size:14px;font-weight:normal;color:#dfe2ea;transform:scaleX(1.25);transform-origin:0 0">Pattern 8</div><div style="left:3px;top:299px;width:198px;height:16px;background:#40444e;border-radius:3px 3px 0 0;box-shadow:inset 0 1px 0 #4d515c,inset 1px 0 0 #4d515c;"></div><div class="t" style="left:27px;top:300px;font-size:14px;font-weight:normal;color:#dfe2ea;transform:scaleX(1.25);transform-origin:0 0">Pattern 9</div><div style="left:3px;top:317px;width:198px;height:16px;background:#50555f;border-radius:3px 3px 0 0;box-shadow:inset 0 1px 0 #5f6470,inset 1px 0 0 #5f6470;"></div><div class="t" style="left:27px;top:318px;font-size:14px;font-weight:normal;color:#dfe2ea;transform:scaleX(1.25);transform-origin:0 0">Pattern 10</div><div style="left:201px;top:104px;width:1062px;height:48px;background:#3b3f4a;"></div><div style="left:202px;top:105px;width:1060px;height:22px;background:#595e6b;"></div><div style="left:202px;top:127px;width:1060px;height:1px;background:#2e3038;"></div><div style="left:202px;top:128px;width:1060px;height:23px;background:#656a78;"></div><div style="left:202px;top:151px;width:1060px;height:1px;background:#8c909c;"></div><div style="left:202px;top:152px;width:1060px;height:4px;background:#5a5f6c;"></div><svg style="position:absolute;left:202px;top:105px" width="1060" height="22"><rect x="10" y="2" width="1" height="4" fill="#a7abb7"/><rect x="10" y="18" width="1" height="2" fill="#7e8290"/><rect x="26" y="2" width="1" height="4" fill="#a7abb7"/><rect x="26" y="18" width="1" height="2" fill="#7e8290"/><rect x="42" y="2" width="1" height="4" fill="#a7abb7"/><rect x="42" y="18" width="1" height="2" fill="#7e8290"/><rect x="58" y="2" width="1" height="4" fill="#a7abb7"/><rect x="58" y="18" width="1" height="2" fill="#7e8290"/><rect x="74" y="2" width="1" height="4" fill="#a7abb7"/><rect x="74" y="18" width="1" height="2" fill="#7e8290"/><rect x="90" y="2" width="1" height="4" fill="#a7abb7"/><rect x="90" y="18" width="1" height="2" fill="#7e8290"/><rect x="106" y="2" width="1" height="4" fill="#a7abb7"/><rect x="106" y="18" width="1" height="2" fill="#7e8290"/><rect x="122" y="2" width="1" height="4" fill="#a7abb7"/><rect x="122" y="18" width="1" height="2" fill="#7e8290"/><rect x="138" y="2" width="1" height="4" fill="#a7abb7"/><rect x="138" y="18" width="1" height="2" fill="#7e8290"/><rect x="154" y="2" width="1" height="4" fill="#a7abb7"/><rect x="154" y="18" width="1" height="2" fill="#7e8290"/><rect x="170" y="2" width="1" height="4" fill="#a7abb7"/><rect x="170" y="18" width="1" height="2" fill="#7e8290"/><rect x="186" y="2" width="1" height="4" fill="#a7abb7"/><rect x="186" y="18" width="1" height="2" fill="#7e8290"/><rect x="202" y="2" width="1" height="4" fill="#a7abb7"/><rect x="202" y="18" width="1" height="2" fill="#7e8290"/><rect x="218" y="2" width="1" height="4" fill="#a7abb7"/><rect x="218" y="18" width="1" height="2" fill="#7e8290"/><rect x="234" y="2" width="1" height="4" fill="#a7abb7"/><rect x="234" y="18" width="1" height="2" fill="#7e8290"/><rect x="250" y="2" width="1" height="4" fill="#a7abb7"/><rect x="250" y="18" width="1" height="2" fill="#7e8290"/><rect x="266" y="2" width="1" height="4" fill="#a7abb7"/><rect x="266" y="18" width="1" height="2" fill="#7e8290"/><rect x="282" y="2" width="1" height="4" fill="#a7abb7"/><rect x="282" y="18" width="1" height="2" fill="#7e8290"/><rect x="298" y="2" width="1" height="4" fill="#a7abb7"/><rect x="298" y="18" width="1" height="2" fill="#7e8290"/><rect x="314" y="2" width="1" height="4" fill="#a7abb7"/><rect x="314" y="18" width="1" height="2" fill="#7e8290"/><rect x="330" y="2" width="1" height="4" fill="#a7abb7"/><rect x="330" y="18" width="1" height="2" fill="#7e8290"/><rect x="346" y="2" width="1" height="4" fill="#a7abb7"/><rect x="346" y="18" width="1" height="2" fill="#7e8290"/><rect x="362" y="2" width="1" height="4" fill="#a7abb7"/><rect x="362" y="18" width="1" height="2" fill="#7e8290"/><rect x="378" y="2" width="1" height="4" fill="#a7abb7"/><rect x="378" y="18" width="1" height="2" fill="#7e8290"/><rect x="394" y="2" width="1" height="4" fill="#a7abb7"/><rect x="394" y="18" width="1" height="2" fill="#7e8290"/><rect x="410" y="2" width="1" height="4" fill="#a7abb7"/><rect x="410" y="18" width="1" height="2" fill="#7e8290"/><rect x="426" y="2" width="1" height="4" fill="#a7abb7"/><rect x="426" y="18" width="1" height="2" fill="#7e8290"/><rect x="442" y="2" width="1" height="4" fill="#a7abb7"/><rect x="442" y="18" width="1" height="2" fill="#7e8290"/><rect x="458" y="2" width="1" height="4" fill="#a7abb7"/><rect x="458" y="18" width="1" height="2" fill="#7e8290"/><rect x="474" y="2" width="1" height="4" fill="#a7abb7"/><rect x="474" y="18" width="1" height="2" fill="#7e8290"/><rect x="490" y="2" width="1" height="4" fill="#a7abb7"/><rect x="490" y="18" width="1" height="2" fill="#7e8290"/><rect x="506" y="2" width="1" height="4" fill="#a7abb7"/><rect x="506" y="18" width="1" height="2" fill="#7e8290"/><rect x="522" y="2" width="1" height="4" fill="#a7abb7"/><rect x="522" y="18" width="1" height="2" fill="#7e8290"/><rect x="538" y="2" width="1" height="4" fill="#a7abb7"/><rect x="538" y="18" width="1" height="2" fill="#7e8290"/><rect x="554" y="2" width="1" height="4" fill="#a7abb7"/><rect x="554" y="18" width="1" height="2" fill="#7e8290"/><rect x="570" y="2" width="1" height="4" fill="#a7abb7"/><rect x="570" y="18" width="1" height="2" fill="#7e8290"/><rect x="586" y="2" width="1" height="4" fill="#a7abb7"/><rect x="586" y="18" width="1" height="2" fill="#7e8290"/><rect x="602" y="2" width="1" height="4" fill="#a7abb7"/><rect x="602" y="18" width="1" height="2" fill="#7e8290"/><rect x="618" y="2" width="1" height="4" fill="#a7abb7"/><rect x="618" y="18" width="1" height="2" fill="#7e8290"/><rect x="634" y="2" width="1" height="4" fill="#a7abb7"/><rect x="634" y="18" width="1" height="2" fill="#7e8290"/><rect x="650" y="2" width="1" height="4" fill="#a7abb7"/><rect x="650" y="18" width="1" height="2" fill="#7e8290"/><rect x="666" y="2" width="1" height="4" fill="#a7abb7"/><rect x="666" y="18" width="1" height="2" fill="#7e8290"/><rect x="682" y="2" width="1" height="4" fill="#a7abb7"/><rect x="682" y="18" width="1" height="2" fill="#7e8290"/><rect x="698" y="2" width="1" height="4" fill="#a7abb7"/><rect x="698" y="18" width="1" height="2" fill="#7e8290"/><rect x="714" y="2" width="1" height="4" fill="#a7abb7"/><rect x="714" y="18" width="1" height="2" fill="#7e8290"/><rect x="730" y="2" width="1" height="4" fill="#a7abb7"/><rect x="730" y="18" width="1" height="2" fill="#7e8290"/><rect x="746" y="2" width="1" height="4" fill="#a7abb7"/><rect x="746" y="18" width="1" height="2" fill="#7e8290"/><rect x="762" y="2" width="1" height="4" fill="#a7abb7"/><rect x="762" y="18" width="1" height="2" fill="#7e8290"/><rect x="778" y="2" width="1" height="4" fill="#a7abb7"/><rect x="778" y="18" width="1" height="2" fill="#7e8290"/><rect x="794" y="2" width="1" height="4" fill="#a7abb7"/><rect x="794" y="18" width="1" height="2" fill="#7e8290"/><rect x="810" y="2" width="1" height="4" fill="#a7abb7"/><rect x="810" y="18" width="1" height="2" fill="#7e8290"/><rect x="826" y="2" width="1" height="4" fill="#a7abb7"/><rect x="826" y="18" width="1" height="2" fill="#7e8290"/><rect x="842" y="2" width="1" height="4" fill="#a7abb7"/><rect x="842" y="18" width="1" height="2" fill="#7e8290"/><rect x="858" y="2" width="1" height="4" fill="#a7abb7"/><rect x="858" y="18" width="1" height="2" fill="#7e8290"/><rect x="874" y="2" width="1" height="4" fill="#a7abb7"/><rect x="874" y="18" width="1" height="2" fill="#7e8290"/><rect x="890" y="2" width="1" height="4" fill="#a7abb7"/><rect x="890" y="18" width="1" height="2" fill="#7e8290"/><rect x="906" y="2" width="1" height="4" fill="#a7abb7"/><rect x="906" y="18" width="1" height="2" fill="#7e8290"/><rect x="922" y="2" width="1" height="4" fill="#a7abb7"/><rect x="922" y="18" width="1" height="2" fill="#7e8290"/><rect x="938" y="2" width="1" height="4" fill="#a7abb7"/><rect x="938" y="18" width="1" height="2" fill="#7e8290"/><rect x="954" y="2" width="1" height="4" fill="#a7abb7"/><rect x="954" y="18" width="1" height="2" fill="#7e8290"/><rect x="970" y="2" width="1" height="4" fill="#a7abb7"/><rect x="970" y="18" width="1" height="2" fill="#7e8290"/><rect x="986" y="2" width="1" height="4" fill="#a7abb7"/><rect x="986" y="18" width="1" height="2" fill="#7e8290"/><rect x="1002" y="2" width="1" height="4" fill="#a7abb7"/><rect x="1002" y="18" width="1" height="2" fill="#7e8290"/><rect x="1018" y="2" width="1" height="4" fill="#a7abb7"/><rect x="1018" y="18" width="1" height="2" fill="#7e8290"/><rect x="1034" y="2" width="1" height="4" fill="#a7abb7"/><rect x="1034" y="18" width="1" height="2" fill="#7e8290"/><rect x="1050" y="2" width="1" height="4" fill="#a7abb7"/><rect x="1050" y="18" width="1" height="2" fill="#7e8290"/></svg><div class="t" style="left:172px;top:133px;width:80px;text-align:center;font-size:14px;color:#e6e8ee">1</div><div style="left:228px;top:136px;width:1px;height:10px;background:#e6e8ee;"></div><div style="left:244px;top:136px;width:1px;height:10px;background:#e6e8ee;"></div><div style="left:260px;top:136px;width:1px;height:10px;background:#e6e8ee;"></div><div class="t" style="left:236px;top:133px;width:80px;text-align:center;font-size:14px;color:#e6e8ee">5</div><div style="left:292px;top:136px;width:1px;height:10px;background:#e6e8ee;"></div><div style="left:308px;top:136px;width:1px;height:10px;background:#e6e8ee;"></div><div style="left:324px;top:136px;width:1px;height:10px;background:#e6e8ee;"></div><div class="t" style="left:300px;top:133px;width:80px;text-align:center;font-size:14px;color:#e6e8ee">9</div><div style="left:356px;top:136px;width:1px;height:10px;background:#e6e8ee;"></div><div style="left:372px;top:136px;width:1px;height:10px;background:#e6e8ee;"></div><div style="left:388px;top:136px;width:1px;height:10px;background:#e6e8ee;"></div><div class="t" style="left:364px;top:133px;width:80px;text-align:center;font-size:14px;color:#e6e8ee">13</div><div style="left:420px;top:136px;width:1px;height:10px;background:#e6e8ee;"></div><div style="left:436px;top:136px;width:1px;height:10px;background:#e6e8ee;"></div><div style="left:452px;top:136px;width:1px;height:10px;background:#e6e8ee;"></div><div class="t" style="left:428px;top:133px;width:80px;text-align:center;font-size:14px;color:#e6e8ee">17</div><div style="left:484px;top:136px;width:1px;height:10px;background:#e6e8ee;"></div><div style="left:500px;top:136px;width:1px;height:10px;background:#e6e8ee;"></div><div style="left:516px;top:136px;width:1px;height:10px;background:#e6e8ee;"></div><div class="t" style="left:492px;top:133px;width:80px;text-align:center;font-size:14px;color:#e6e8ee">21</div><div style="left:548px;top:136px;width:1px;height:10px;background:#e6e8ee;"></div><div style="left:564px;top:136px;width:1px;height:10px;background:#e6e8ee;"></div><div style="left:580px;top:136px;width:1px;height:10px;background:#e6e8ee;"></div><div class="t" style="left:556px;top:133px;width:80px;text-align:center;font-size:14px;color:#e6e8ee">25</div><div style="left:612px;top:136px;width:1px;height:10px;background:#e6e8ee;"></div><div style="left:628px;top:136px;width:1px;height:10px;background:#e6e8ee;"></div><div style="left:644px;top:136px;width:1px;height:10px;background:#e6e8ee;"></div><div class="t" style="left:620px;top:133px;width:80px;text-align:center;font-size:14px;color:#e6e8ee">29</div><div style="left:676px;top:136px;width:1px;height:10px;background:#e6e8ee;"></div><div style="left:692px;top:136px;width:1px;height:10px;background:#e6e8ee;"></div><div style="left:708px;top:136px;width:1px;height:10px;background:#e6e8ee;"></div><div class="t" style="left:684px;top:133px;width:80px;text-align:center;font-size:14px;color:#e6e8ee">33</div><div style="left:740px;top:136px;width:1px;height:10px;background:#e6e8ee;"></div><div style="left:756px;top:136px;width:1px;height:10px;background:#e6e8ee;"></div><div style="left:772px;top:136px;width:1px;height:10px;background:#e6e8ee;"></div><div class="t" style="left:748px;top:133px;width:80px;text-align:center;font-size:14px;color:#e6e8ee">37</div><div style="left:804px;top:136px;width:1px;height:10px;background:#e6e8ee;"></div><div style="left:820px;top:136px;width:1px;height:10px;background:#e6e8ee;"></div><div style="left:836px;top:136px;width:1px;height:10px;background:#e6e8ee;"></div><div class="t" style="left:812px;top:133px;width:80px;text-align:center;font-size:14px;color:#e6e8ee">41</div><div style="left:868px;top:136px;width:1px;height:10px;background:#e6e8ee;"></div><div style="left:884px;top:136px;width:1px;height:10px;background:#e6e8ee;"></div><div style="left:900px;top:136px;width:1px;height:10px;background:#e6e8ee;"></div><div class="t" style="left:876px;top:133px;width:80px;text-align:center;font-size:14px;color:#e6e8ee">45</div><div style="left:932px;top:136px;width:1px;height:10px;background:#e6e8ee;"></div><div style="left:948px;top:136px;width:1px;height:10px;background:#e6e8ee;"></div><div style="left:964px;top:136px;width:1px;height:10px;background:#e6e8ee;"></div><div class="t" style="left:940px;top:133px;width:80px;text-align:center;font-size:14px;color:#e6e8ee">49</div><div style="left:996px;top:136px;width:1px;height:10px;background:#e6e8ee;"></div><div style="left:1012px;top:136px;width:1px;height:10px;background:#e6e8ee;"></div><div style="left:1028px;top:136px;width:1px;height:10px;background:#e6e8ee;"></div><div class="t" style="left:1004px;top:133px;width:80px;text-align:center;font-size:14px;color:#e6e8ee">53</div><div style="left:1060px;top:136px;width:1px;height:10px;background:#e6e8ee;"></div><div style="left:1076px;top:136px;width:1px;height:10px;background:#e6e8ee;"></div><div style="left:1092px;top:136px;width:1px;height:10px;background:#e6e8ee;"></div><div class="t" style="left:1068px;top:133px;width:80px;text-align:center;font-size:14px;color:#e6e8ee">57</div><div style="left:1124px;top:136px;width:1px;height:10px;background:#e6e8ee;"></div><div style="left:1140px;top:136px;width:1px;height:10px;background:#e6e8ee;"></div><div style="left:1156px;top:136px;width:1px;height:10px;background:#e6e8ee;"></div><div class="t" style="left:1132px;top:133px;width:80px;text-align:center;font-size:14px;color:#e6e8ee">61</div><div style="left:1188px;top:136px;width:1px;height:10px;background:#e6e8ee;"></div><div style="left:1204px;top:136px;width:1px;height:10px;background:#e6e8ee;"></div><div style="left:1220px;top:136px;width:1px;height:10px;background:#e6e8ee;"></div><div class="t" style="left:1196px;top:133px;width:80px;text-align:center;font-size:14px;color:#e6e8ee">65</div><div style="left:1252px;top:136px;width:1px;height:10px;background:#e6e8ee;"></div><div style="left:202px;top:155px;width:1060px;height:1px;background:#50545f;"></div><div style="left:202px;top:156px;width:1060px;height:14px;background:#868b9b;"></div><div style="left:202px;top:170px;width:1060px;height:4px;background:#646977;box-shadow:inset 0 1px 0 #737885;"></div><div style="left:213px;top:156px;width:15px;height:14px;background:#5ea4fa;"></div><div style="left:229px;top:156px;width:15px;height:14px;background:#5ea4fa;"></div><div style="left:245px;top:156px;width:15px;height:14px;background:#5ea4fa;"></div><div style="left:261px;top:156px;width:15px;height:14px;background:#5ea4fa;"></div><div style="left:277px;top:156px;width:15px;height:14px;background:#5ea4fa;"></div><div style="left:341px;top:156px;width:15px;height:14px;background:#5ea4fa;"></div><div style="left:357px;top:156px;width:15px;height:14px;background:#5ea4fa;"></div><div style="left:373px;top:156px;width:15px;height:14px;background:#5ea4fa;"></div><div style="left:389px;top:156px;width:15px;height:14px;background:#5ea4fa;"></div><div style="left:405px;top:156px;width:15px;height:14px;background:#5ea4fa;"></div><div style="left:469px;top:156px;width:15px;height:14px;background:#5ea4fa;"></div><div style="left:485px;top:156px;width:15px;height:14px;background:#5ea4fa;"></div><div style="left:501px;top:156px;width:15px;height:14px;background:#5ea4fa;"></div><div style="left:517px;top:156px;width:15px;height:14px;background:#5ea4fa;"></div><div style="left:533px;top:156px;width:15px;height:14px;background:#5ea4fa;"></div><div style="left:597px;top:156px;width:15px;height:14px;background:#5ea4fa;"></div><div style="left:613px;top:156px;width:15px;height:14px;background:#5ea4fa;"></div><div style="left:629px;top:156px;width:15px;height:14px;background:#5ea4fa;"></div><div style="left:645px;top:156px;width:15px;height:14px;background:#5ea4fa;"></div><div style="left:661px;top:156px;width:15px;height:14px;background:#5ea4fa;"></div><div style="left:212px;top:156px;width:1px;height:14px;background:#464a57;"></div><div style="left:228px;top:156px;width:1px;height:14px;background:#464a57;"></div><div style="left:244px;top:156px;width:1px;height:14px;background:#464a57;"></div><div style="left:260px;top:156px;width:1px;height:14px;background:#464a57;"></div><div style="left:276px;top:156px;width:1px;height:14px;background:#464a57;"></div><div style="left:292px;top:156px;width:1px;height:14px;background:#464a57;"></div><div style="left:308px;top:156px;width:1px;height:14px;background:#464a57;"></div><div style="left:324px;top:156px;width:1px;height:14px;background:#464a57;"></div><div style="left:340px;top:156px;width:1px;height:14px;background:#464a57;"></div><div style="left:356px;top:156px;width:1px;height:14px;background:#464a57;"></div><div style="left:372px;top:156px;width:1px;height:14px;background:#464a57;"></div><div style="left:388px;top:156px;width:1px;height:14px;background:#464a57;"></div><div style="left:404px;top:156px;width:1px;height:14px;background:#464a57;"></div><div style="left:420px;top:156px;width:1px;height:14px;background:#464a57;"></div><div style="left:436px;top:156px;width:1px;height:14px;background:#464a57;"></div><div style="left:452px;top:156px;width:1px;height:14px;background:#464a57;"></div><div style="left:468px;top:156px;width:1px;height:14px;background:#464a57;"></div><div style="left:484px;top:156px;width:1px;height:14px;background:#464a57;"></div><div style="left:500px;top:156px;width:1px;height:14px;background:#464a57;"></div><div style="left:516px;top:156px;width:1px;height:14px;background:#464a57;"></div><div style="left:532px;top:156px;width:1px;height:14px;background:#464a57;"></div><div style="left:548px;top:156px;width:1px;height:14px;background:#464a57;"></div><div style="left:564px;top:156px;width:1px;height:14px;background:#464a57;"></div><div style="left:580px;top:156px;width:1px;height:14px;background:#464a57;"></div><div style="left:596px;top:156px;width:1px;height:14px;background:#464a57;"></div><div style="left:612px;top:156px;width:1px;height:14px;background:#464a57;"></div><div style="left:628px;top:156px;width:1px;height:14px;background:#464a57;"></div><div style="left:644px;top:156px;width:1px;height:14px;background:#464a57;"></div><div style="left:660px;top:156px;width:1px;height:14px;background:#464a57;"></div><div style="left:676px;top:156px;width:1px;height:14px;background:#464a57;"></div><div style="left:692px;top:156px;width:1px;height:14px;background:#464a57;"></div><div style="left:708px;top:156px;width:1px;height:14px;background:#464a57;"></div><div style="left:724px;top:156px;width:1px;height:14px;background:#464a57;"></div><div style="left:740px;top:156px;width:1px;height:14px;background:#464a57;"></div><div style="left:756px;top:156px;width:1px;height:14px;background:#464a57;"></div><div style="left:772px;top:156px;width:1px;height:14px;background:#464a57;"></div><div style="left:788px;top:156px;width:1px;height:14px;background:#464a57;"></div><div style="left:804px;top:156px;width:1px;height:14px;background:#464a57;"></div><div style="left:820px;top:156px;width:1px;height:14px;background:#464a57;"></div><div style="left:836px;top:156px;width:1px;height:14px;background:#464a57;"></div><div style="left:852px;top:156px;width:1px;height:14px;background:#464a57;"></div><div style="left:868px;top:156px;width:1px;height:14px;background:#464a57;"></div><div style="left:884px;top:156px;width:1px;height:14px;background:#464a57;"></div><div style="left:900px;top:156px;width:1px;height:14px;background:#464a57;"></div><div style="left:916px;top:156px;width:1px;height:14px;background:#464a57;"></div><div style="left:932px;top:156px;width:1px;height:14px;background:#464a57;"></div><div style="left:948px;top:156px;width:1px;height:14px;background:#464a57;"></div><div style="left:964px;top:156px;width:1px;height:14px;background:#464a57;"></div><div style="left:980px;top:156px;width:1px;height:14px;background:#464a57;"></div><div style="left:996px;top:156px;width:1px;height:14px;background:#464a57;"></div><div style="left:1012px;top:156px;width:1px;height:14px;background:#464a57;"></div><div style="left:1028px;top:156px;width:1px;height:14px;background:#464a57;"></div><div style="left:1044px;top:156px;width:1px;height:14px;background:#464a57;"></div><div style="left:1060px;top:156px;width:1px;height:14px;background:#464a57;"></div><div style="left:1076px;top:156px;width:1px;height:14px;background:#464a57;"></div><div style="left:1092px;top:156px;width:1px;height:14px;background:#464a57;"></div><div style="left:1108px;top:156px;width:1px;height:14px;background:#464a57;"></div><div style="left:1124px;top:156px;width:1px;height:14px;background:#464a57;"></div><div style="left:1140px;top:156px;width:1px;height:14px;background:#464a57;"></div><div style="left:1156px;top:156px;width:1px;height:14px;background:#464a57;"></div><div style="left:1172px;top:156px;width:1px;height:14px;background:#464a57;"></div><div style="left:1188px;top:156px;width:1px;height:14px;background:#464a57;"></div><div style="left:1204px;top:156px;width:1px;height:14px;background:#464a57;"></div><div style="left:1220px;top:156px;width:1px;height:14px;background:#464a57;"></div><div style="left:1236px;top:156px;width:1px;height:14px;background:#464a57;"></div><div style="left:1252px;top:156px;width:1px;height:14px;background:#464a57;"></div><div style="left:202px;top:173px;width:1060px;height:1px;background:#50545f;"></div><div style="left:202px;top:174px;width:1060px;height:14px;background:#868b9b;"></div><div style="left:202px;top:188px;width:1060px;height:4px;background:#646977;box-shadow:inset 0 1px 0 #737885;"></div><div style="left:293px;top:174px;width:15px;height:14px;background:#5ea4fa;"></div><div style="left:309px;top:174px;width:15px;height:14px;background:#5ea4fa;"></div><div style="left:325px;top:174px;width:15px;height:14px;background:#5ea4fa;"></div><div style="left:421px;top:174px;width:15px;height:14px;background:#5ea4fa;"></div><div style="left:437px;top:174px;width:15px;height:14px;background:#5ea4fa;"></div><div style="left:453px;top:174px;width:15px;height:14px;background:#5ea4fa;"></div><div style="left:549px;top:174px;width:15px;height:14px;background:#5ea4fa;"></div><div style="left:565px;top:174px;width:15px;height:14px;background:#5ea4fa;"></div><div style="left:581px;top:174px;width:15px;height:14px;background:#5ea4fa;"></div><div style="left:212px;top:174px;width:1px;height:14px;background:#464a57;"></div><div style="left:228px;top:174px;width:1px;height:14px;background:#464a57;"></div><div style="left:244px;top:174px;width:1px;height:14px;background:#464a57;"></div><div style="left:260px;top:174px;width:1px;height:14px;background:#464a57;"></div><div style="left:276px;top:174px;width:1px;height:14px;background:#464a57;"></div><div style="left:292px;top:174px;width:1px;height:14px;background:#464a57;"></div><div style="left:308px;top:174px;width:1px;height:14px;background:#464a57;"></div><div style="left:324px;top:174px;width:1px;height:14px;background:#464a57;"></div><div style="left:340px;top:174px;width:1px;height:14px;background:#464a57;"></div><div style="left:356px;top:174px;width:1px;height:14px;background:#464a57;"></div><div style="left:372px;top:174px;width:1px;height:14px;background:#464a57;"></div><div style="left:388px;top:174px;width:1px;height:14px;background:#464a57;"></div><div style="left:404px;top:174px;width:1px;height:14px;background:#464a57;"></div><div style="left:420px;top:174px;width:1px;height:14px;background:#464a57;"></div><div style="left:436px;top:174px;width:1px;height:14px;background:#464a57;"></div><div style="left:452px;top:174px;width:1px;height:14px;background:#464a57;"></div><div style="left:468px;top:174px;width:1px;height:14px;background:#464a57;"></div><div style="left:484px;top:174px;width:1px;height:14px;background:#464a57;"></div><div style="left:500px;top:174px;width:1px;height:14px;background:#464a57;"></div><div style="left:516px;top:174px;width:1px;height:14px;background:#464a57;"></div><div style="left:532px;top:174px;width:1px;height:14px;background:#464a57;"></div><div style="left:548px;top:174px;width:1px;height:14px;background:#464a57;"></div><div style="left:564px;top:174px;width:1px;height:14px;background:#464a57;"></div><div style="left:580px;top:174px;width:1px;height:14px;background:#464a57;"></div><div style="left:596px;top:174px;width:1px;height:14px;background:#464a57;"></div><div style="left:612px;top:174px;width:1px;height:14px;background:#464a57;"></div><div style="left:628px;top:174px;width:1px;height:14px;background:#464a57;"></div><div style="left:644px;top:174px;width:1px;height:14px;background:#464a57;"></div><div style="left:660px;top:174px;width:1px;height:14px;background:#464a57;"></div><div style="left:676px;top:174px;width:1px;height:14px;background:#464a57;"></div><div style="left:692px;top:174px;width:1px;height:14px;background:#464a57;"></div><div style="left:708px;top:174px;width:1px;height:14px;background:#464a57;"></div><div style="left:724px;top:174px;width:1px;height:14px;background:#464a57;"></div><div style="left:740px;top:174px;width:1px;height:14px;background:#464a57;"></div><div style="left:756px;top:174px;width:1px;height:14px;background:#464a57;"></div><div style="left:772px;top:174px;width:1px;height:14px;background:#464a57;"></div><div style="left:788px;top:174px;width:1px;height:14px;background:#464a57;"></div><div style="left:804px;top:174px;width:1px;height:14px;background:#464a57;"></div><div style="left:820px;top:174px;width:1px;height:14px;background:#464a57;"></div><div style="left:836px;top:174px;width:1px;height:14px;background:#464a57;"></div><div style="left:852px;top:174px;width:1px;height:14px;background:#464a57;"></div><div style="left:868px;top:174px;width:1px;height:14px;background:#464a57;"></div><div style="left:884px;top:174px;width:1px;height:14px;background:#464a57;"></div><div style="left:900px;top:174px;width:1px;height:14px;background:#464a57;"></div><div style="left:916px;top:174px;width:1px;height:14px;background:#464a57;"></div><div style="left:932px;top:174px;width:1px;height:14px;background:#464a57;"></div><div style="left:948px;top:174px;width:1px;height:14px;background:#464a57;"></div><div style="left:964px;top:174px;width:1px;height:14px;background:#464a57;"></div><div style="left:980px;top:174px;width:1px;height:14px;background:#464a57;"></div><div style="left:996px;top:174px;width:1px;height:14px;background:#464a57;"></div><div style="left:1012px;top:174px;width:1px;height:14px;background:#464a57;"></div><div style="left:1028px;top:174px;width:1px;height:14px;background:#464a57;"></div><div style="left:1044px;top:174px;width:1px;height:14px;background:#464a57;"></div><div style="left:1060px;top:174px;width:1px;height:14px;background:#464a57;"></div><div style="left:1076px;top:174px;width:1px;height:14px;background:#464a57;"></div><div style="left:1092px;top:174px;width:1px;height:14px;background:#464a57;"></div><div style="left:1108px;top:174px;width:1px;height:14px;background:#464a57;"></div><div style="left:1124px;top:174px;width:1px;height:14px;background:#464a57;"></div><div style="left:1140px;top:174px;width:1px;height:14px;background:#464a57;"></div><div style="left:1156px;top:174px;width:1px;height:14px;background:#464a57;"></div><div style="left:1172px;top:174px;width:1px;height:14px;background:#464a57;"></div><div style="left:1188px;top:174px;width:1px;height:14px;background:#464a57;"></div><div style="left:1204px;top:174px;width:1px;height:14px;background:#464a57;"></div><div style="left:1220px;top:174px;width:1px;height:14px;background:#464a57;"></div><div style="left:1236px;top:174px;width:1px;height:14px;background:#464a57;"></div><div style="left:1252px;top:174px;width:1px;height:14px;background:#464a57;"></div><div style="left:202px;top:191px;width:1060px;height:1px;background:#50545f;"></div><div style="left:202px;top:192px;width:1060px;height:14px;background:#868b9b;"></div><div style="left:202px;top:206px;width:1060px;height:4px;background:#646977;box-shadow:inset 0 1px 0 #737885;"></div><div style="left:212px;top:192px;width:1px;height:14px;background:#464a57;"></div><div style="left:228px;top:192px;width:1px;height:14px;background:#464a57;"></div><div style="left:244px;top:192px;width:1px;height:14px;background:#464a57;"></div><div style="left:260px;top:192px;width:1px;height:14px;background:#464a57;"></div><div style="left:276px;top:192px;width:1px;height:14px;background:#464a57;"></div><div style="left:292px;top:192px;width:1px;height:14px;background:#464a57;"></div><div style="left:308px;top:192px;width:1px;height:14px;background:#464a57;"></div><div style="left:324px;top:192px;width:1px;height:14px;background:#464a57;"></div><div style="left:340px;top:192px;width:1px;height:14px;background:#464a57;"></div><div style="left:356px;top:192px;width:1px;height:14px;background:#464a57;"></div><div style="left:372px;top:192px;width:1px;height:14px;background:#464a57;"></div><div style="left:388px;top:192px;width:1px;height:14px;background:#464a57;"></div><div style="left:404px;top:192px;width:1px;height:14px;background:#464a57;"></div><div style="left:420px;top:192px;width:1px;height:14px;background:#464a57;"></div><div style="left:436px;top:192px;width:1px;height:14px;background:#464a57;"></div><div style="left:452px;top:192px;width:1px;height:14px;background:#464a57;"></div><div style="left:468px;top:192px;width:1px;height:14px;background:#464a57;"></div><div style="left:484px;top:192px;width:1px;height:14px;background:#464a57;"></div><div style="left:500px;top:192px;width:1px;height:14px;background:#464a57;"></div><div style="left:516px;top:192px;width:1px;height:14px;background:#464a57;"></div><div style="left:532px;top:192px;width:1px;height:14px;background:#464a57;"></div><div style="left:548px;top:192px;width:1px;height:14px;background:#464a57;"></div><div style="left:564px;top:192px;width:1px;height:14px;background:#464a57;"></div><div style="left:580px;top:192px;width:1px;height:14px;background:#464a57;"></div><div style="left:596px;top:192px;width:1px;height:14px;background:#464a57;"></div><div style="left:612px;top:192px;width:1px;height:14px;background:#464a57;"></div><div style="left:628px;top:192px;width:1px;height:14px;background:#464a57;"></div><div style="left:644px;top:192px;width:1px;height:14px;background:#464a57;"></div><div style="left:660px;top:192px;width:1px;height:14px;background:#464a57;"></div><div style="left:676px;top:192px;width:1px;height:14px;background:#464a57;"></div><div style="left:692px;top:192px;width:1px;height:14px;background:#464a57;"></div><div style="left:708px;top:192px;width:1px;height:14px;background:#464a57;"></div><div style="left:724px;top:192px;width:1px;height:14px;background:#464a57;"></div><div style="left:740px;top:192px;width:1px;height:14px;background:#464a57;"></div><div style="left:756px;top:192px;width:1px;height:14px;background:#464a57;"></div><div style="left:772px;top:192px;width:1px;height:14px;background:#464a57;"></div><div style="left:788px;top:192px;width:1px;height:14px;background:#464a57;"></div><div style="left:804px;top:192px;width:1px;height:14px;background:#464a57;"></div><div style="left:820px;top:192px;width:1px;height:14px;background:#464a57;"></div><div style="left:836px;top:192px;width:1px;height:14px;background:#464a57;"></div><div style="left:852px;top:192px;width:1px;height:14px;background:#464a57;"></div><div style="left:868px;top:192px;width:1px;height:14px;background:#464a57;"></div><div style="left:884px;top:192px;width:1px;height:14px;background:#464a57;"></div><div style="left:900px;top:192px;width:1px;height:14px;background:#464a57;"></div><div style="left:916px;top:192px;width:1px;height:14px;background:#464a57;"></div><div style="left:932px;top:192px;width:1px;height:14px;background:#464a57;"></div><div style="left:948px;top:192px;width:1px;height:14px;background:#464a57;"></div><div style="left:964px;top:192px;width:1px;height:14px;background:#464a57;"></div><div style="left:980px;top:192px;width:1px;height:14px;background:#464a57;"></div><div style="left:996px;top:192px;width:1px;height:14px;background:#464a57;"></div><div style="left:1012px;top:192px;width:1px;height:14px;background:#464a57;"></div><div style="left:1028px;top:192px;width:1px;height:14px;background:#464a57;"></div><div style="left:1044px;top:192px;width:1px;height:14px;background:#464a57;"></div><div style="left:1060px;top:192px;width:1px;height:14px;background:#464a57;"></div><div style="left:1076px;top:192px;width:1px;height:14px;background:#464a57;"></div><div style="left:1092px;top:192px;width:1px;height:14px;background:#464a57;"></div><div style="left:1108px;top:192px;width:1px;height:14px;background:#464a57;"></div><div style="left:1124px;top:192px;width:1px;height:14px;background:#464a57;"></div><div style="left:1140px;top:192px;width:1px;height:14px;background:#464a57;"></div><div style="left:1156px;top:192px;width:1px;height:14px;background:#464a57;"></div><div style="left:1172px;top:192px;width:1px;height:14px;background:#464a57;"></div><div style="left:1188px;top:192px;width:1px;height:14px;background:#464a57;"></div><div style="left:1204px;top:192px;width:1px;height:14px;background:#464a57;"></div><div style="left:1220px;top:192px;width:1px;height:14px;background:#464a57;"></div><div style="left:1236px;top:192px;width:1px;height:14px;background:#464a57;"></div><div style="left:1252px;top:192px;width:1px;height:14px;background:#464a57;"></div><div style="left:202px;top:209px;width:1060px;height:1px;background:#50545f;"></div><div style="left:202px;top:210px;width:1060px;height:14px;background:#868b9b;"></div><div style="left:202px;top:224px;width:1060px;height:4px;background:#646977;box-shadow:inset 0 1px 0 #737885;"></div><div style="left:212px;top:210px;width:1px;height:14px;background:#464a57;"></div><div style="left:228px;top:210px;width:1px;height:14px;background:#464a57;"></div><div style="left:244px;top:210px;width:1px;height:14px;background:#464a57;"></div><div style="left:260px;top:210px;width:1px;height:14px;background:#464a57;"></div><div style="left:276px;top:210px;width:1px;height:14px;background:#464a57;"></div><div style="left:292px;top:210px;width:1px;height:14px;background:#464a57;"></div><div style="left:308px;top:210px;width:1px;height:14px;background:#464a57;"></div><div style="left:324px;top:210px;width:1px;height:14px;background:#464a57;"></div><div style="left:340px;top:210px;width:1px;height:14px;background:#464a57;"></div><div style="left:356px;top:210px;width:1px;height:14px;background:#464a57;"></div><div style="left:372px;top:210px;width:1px;height:14px;background:#464a57;"></div><div style="left:388px;top:210px;width:1px;height:14px;background:#464a57;"></div><div style="left:404px;top:210px;width:1px;height:14px;background:#464a57;"></div><div style="left:420px;top:210px;width:1px;height:14px;background:#464a57;"></div><div style="left:436px;top:210px;width:1px;height:14px;background:#464a57;"></div><div style="left:452px;top:210px;width:1px;height:14px;background:#464a57;"></div><div style="left:468px;top:210px;width:1px;height:14px;background:#464a57;"></div><div style="left:484px;top:210px;width:1px;height:14px;background:#464a57;"></div><div style="left:500px;top:210px;width:1px;height:14px;background:#464a57;"></div><div style="left:516px;top:210px;width:1px;height:14px;background:#464a57;"></div><div style="left:532px;top:210px;width:1px;height:14px;background:#464a57;"></div><div style="left:548px;top:210px;width:1px;height:14px;background:#464a57;"></div><div style="left:564px;top:210px;width:1px;height:14px;background:#464a57;"></div><div style="left:580px;top:210px;width:1px;height:14px;background:#464a57;"></div><div style="left:596px;top:210px;width:1px;height:14px;background:#464a57;"></div><div style="left:612px;top:210px;width:1px;height:14px;background:#464a57;"></div><div style="left:628px;top:210px;width:1px;height:14px;background:#464a57;"></div><div style="left:644px;top:210px;width:1px;height:14px;background:#464a57;"></div><div style="left:660px;top:210px;width:1px;height:14px;background:#464a57;"></div><div style="left:676px;top:210px;width:1px;height:14px;background:#464a57;"></div><div style="left:692px;top:210px;width:1px;height:14px;background:#464a57;"></div><div style="left:708px;top:210px;width:1px;height:14px;background:#464a57;"></div><div style="left:724px;top:210px;width:1px;height:14px;background:#464a57;"></div><div style="left:740px;top:210px;width:1px;height:14px;background:#464a57;"></div><div style="left:756px;top:210px;width:1px;height:14px;background:#464a57;"></div><div style="left:772px;top:210px;width:1px;height:14px;background:#464a57;"></div><div style="left:788px;top:210px;width:1px;height:14px;background:#464a57;"></div><div style="left:804px;top:210px;width:1px;height:14px;background:#464a57;"></div><div style="left:820px;top:210px;width:1px;height:14px;background:#464a57;"></div><div style="left:836px;top:210px;width:1px;height:14px;background:#464a57;"></div><div style="left:852px;top:210px;width:1px;height:14px;background:#464a57;"></div><div style="left:868px;top:210px;width:1px;height:14px;background:#464a57;"></div><div style="left:884px;top:210px;width:1px;height:14px;background:#464a57;"></div><div style="left:900px;top:210px;width:1px;height:14px;background:#464a57;"></div><div style="left:916px;top:210px;width:1px;height:14px;background:#464a57;"></div><div style="left:932px;top:210px;width:1px;height:14px;background:#464a57;"></div><div style="left:948px;top:210px;width:1px;height:14px;background:#464a57;"></div><div style="left:964px;top:210px;width:1px;height:14px;background:#464a57;"></div><div style="left:980px;top:210px;width:1px;height:14px;background:#464a57;"></div><div style="left:996px;top:210px;width:1px;height:14px;background:#464a57;"></div><div style="left:1012px;top:210px;width:1px;height:14px;background:#464a57;"></div><div style="left:1028px;top:210px;width:1px;height:14px;background:#464a57;"></div><div style="left:1044px;top:210px;width:1px;height:14px;background:#464a57;"></div><div style="left:1060px;top:210px;width:1px;height:14px;background:#464a57;"></div><div style="left:1076px;top:210px;width:1px;height:14px;background:#464a57;"></div><div style="left:1092px;top:210px;width:1px;height:14px;background:#464a57;"></div><div style="left:1108px;top:210px;width:1px;height:14px;background:#464a57;"></div><div style="left:1124px;top:210px;width:1px;height:14px;background:#464a57;"></div><div style="left:1140px;top:210px;width:1px;height:14px;background:#464a57;"></div><div style="left:1156px;top:210px;width:1px;height:14px;background:#464a57;"></div><div style="left:1172px;top:210px;width:1px;height:14px;background:#464a57;"></div><div style="left:1188px;top:210px;width:1px;height:14px;background:#464a57;"></div><div style="left:1204px;top:210px;width:1px;height:14px;background:#464a57;"></div><div style="left:1220px;top:210px;width:1px;height:14px;background:#464a57;"></div><div style="left:1236px;top:210px;width:1px;height:14px;background:#464a57;"></div><div style="left:1252px;top:210px;width:1px;height:14px;background:#464a57;"></div><div style="left:202px;top:227px;width:1060px;height:1px;background:#50545f;"></div><div style="left:202px;top:228px;width:1060px;height:14px;background:#868b9b;"></div><div style="left:202px;top:242px;width:1060px;height:4px;background:#646977;box-shadow:inset 0 1px 0 #737885;"></div><div style="left:212px;top:228px;width:1px;height:14px;background:#464a57;"></div><div style="left:228px;top:228px;width:1px;height:14px;background:#464a57;"></div><div style="left:244px;top:228px;width:1px;height:14px;background:#464a57;"></div><div style="left:260px;top:228px;width:1px;height:14px;background:#464a57;"></div><div style="left:276px;top:228px;width:1px;height:14px;background:#464a57;"></div><div style="left:292px;top:228px;width:1px;height:14px;background:#464a57;"></div><div style="left:308px;top:228px;width:1px;height:14px;background:#464a57;"></div><div style="left:324px;top:228px;width:1px;height:14px;background:#464a57;"></div><div style="left:340px;top:228px;width:1px;height:14px;background:#464a57;"></div><div style="left:356px;top:228px;width:1px;height:14px;background:#464a57;"></div><div style="left:372px;top:228px;width:1px;height:14px;background:#464a57;"></div><div style="left:388px;top:228px;width:1px;height:14px;background:#464a57;"></div><div style="left:404px;top:228px;width:1px;height:14px;background:#464a57;"></div><div style="left:420px;top:228px;width:1px;height:14px;background:#464a57;"></div><div style="left:436px;top:228px;width:1px;height:14px;background:#464a57;"></div><div style="left:452px;top:228px;width:1px;height:14px;background:#464a57;"></div><div style="left:468px;top:228px;width:1px;height:14px;background:#464a57;"></div><div style="left:484px;top:228px;width:1px;height:14px;background:#464a57;"></div><div style="left:500px;top:228px;width:1px;height:14px;background:#464a57;"></div><div style="left:516px;top:228px;width:1px;height:14px;background:#464a57;"></div><div style="left:532px;top:228px;width:1px;height:14px;background:#464a57;"></div><div style="left:548px;top:228px;width:1px;height:14px;background:#464a57;"></div><div style="left:564px;top:228px;width:1px;height:14px;background:#464a57;"></div><div style="left:580px;top:228px;width:1px;height:14px;background:#464a57;"></div><div style="left:596px;top:228px;width:1px;height:14px;background:#464a57;"></div><div style="left:612px;top:228px;width:1px;height:14px;background:#464a57;"></div><div style="left:628px;top:228px;width:1px;height:14px;background:#464a57;"></div><div style="left:644px;top:228px;width:1px;height:14px;background:#464a57;"></div><div style="left:660px;top:228px;width:1px;height:14px;background:#464a57;"></div><div style="left:676px;top:228px;width:1px;height:14px;background:#464a57;"></div><div style="left:692px;top:228px;width:1px;height:14px;background:#464a57;"></div><div style="left:708px;top:228px;width:1px;height:14px;background:#464a57;"></div><div style="left:724px;top:228px;width:1px;height:14px;background:#464a57;"></div><div style="left:740px;top:228px;width:1px;height:14px;background:#464a57;"></div><div style="left:756px;top:228px;width:1px;height:14px;background:#464a57;"></div><div style="left:772px;top:228px;width:1px;height:14px;background:#464a57;"></div><div style="left:788px;top:228px;width:1px;height:14px;background:#464a57;"></div><div style="left:804px;top:228px;width:1px;height:14px;background:#464a57;"></div><div style="left:820px;top:228px;width:1px;height:14px;background:#464a57;"></div><div style="left:836px;top:228px;width:1px;height:14px;background:#464a57;"></div><div style="left:852px;top:228px;width:1px;height:14px;background:#464a57;"></div><div style="left:868px;top:228px;width:1px;height:14px;background:#464a57;"></div><div style="left:884px;top:228px;width:1px;height:14px;background:#464a57;"></div><div style="left:900px;top:228px;width:1px;height:14px;background:#464a57;"></div><div style="left:916px;top:228px;width:1px;height:14px;background:#464a57;"></div><div style="left:932px;top:228px;width:1px;height:14px;background:#464a57;"></div><div style="left:948px;top:228px;width:1px;height:14px;background:#464a57;"></div><div style="left:964px;top:228px;width:1px;height:14px;background:#464a57;"></div><div style="left:980px;top:228px;width:1px;height:14px;background:#464a57;"></div><div style="left:996px;top:228px;width:1px;height:14px;background:#464a57;"></div><div style="left:1012px;top:228px;width:1px;height:14px;background:#464a57;"></div><div style="left:1028px;top:228px;width:1px;height:14px;background:#464a57;"></div><div style="left:1044px;top:228px;width:1px;height:14px;background:#464a57;"></div><div style="left:1060px;top:228px;width:1px;height:14px;background:#464a57;"></div><div style="left:1076px;top:228px;width:1px;height:14px;background:#464a57;"></div><div style="left:1092px;top:228px;width:1px;height:14px;background:#464a57;"></div><div style="left:1108px;top:228px;width:1px;height:14px;background:#464a57;"></div><div style="left:1124px;top:228px;width:1px;height:14px;background:#464a57;"></div><div style="left:1140px;top:228px;width:1px;height:14px;background:#464a57;"></div><div style="left:1156px;top:228px;width:1px;height:14px;background:#464a57;"></div><div style="left:1172px;top:228px;width:1px;height:14px;background:#464a57;"></div><div style="left:1188px;top:228px;width:1px;height:14px;background:#464a57;"></div><div style="left:1204px;top:228px;width:1px;height:14px;background:#464a57;"></div><div style="left:1220px;top:228px;width:1px;height:14px;background:#464a57;"></div><div style="left:1236px;top:228px;width:1px;height:14px;background:#464a57;"></div><div style="left:1252px;top:228px;width:1px;height:14px;background:#464a57;"></div><div style="left:202px;top:245px;width:1060px;height:1px;background:#50545f;"></div><div style="left:202px;top:246px;width:1060px;height:14px;background:#868b9b;"></div><div style="left:202px;top:260px;width:1060px;height:4px;background:#646977;box-shadow:inset 0 1px 0 #737885;"></div><div style="left:212px;top:246px;width:1px;height:14px;background:#464a57;"></div><div style="left:228px;top:246px;width:1px;height:14px;background:#464a57;"></div><div style="left:244px;top:246px;width:1px;height:14px;background:#464a57;"></div><div style="left:260px;top:246px;width:1px;height:14px;background:#464a57;"></div><div style="left:276px;top:246px;width:1px;height:14px;background:#464a57;"></div><div style="left:292px;top:246px;width:1px;height:14px;background:#464a57;"></div><div style="left:308px;top:246px;width:1px;height:14px;background:#464a57;"></div><div style="left:324px;top:246px;width:1px;height:14px;background:#464a57;"></div><div style="left:340px;top:246px;width:1px;height:14px;background:#464a57;"></div><div style="left:356px;top:246px;width:1px;height:14px;background:#464a57;"></div><div style="left:372px;top:246px;width:1px;height:14px;background:#464a57;"></div><div style="left:388px;top:246px;width:1px;height:14px;background:#464a57;"></div><div style="left:404px;top:246px;width:1px;height:14px;background:#464a57;"></div><div style="left:420px;top:246px;width:1px;height:14px;background:#464a57;"></div><div style="left:436px;top:246px;width:1px;height:14px;background:#464a57;"></div><div style="left:452px;top:246px;width:1px;height:14px;background:#464a57;"></div><div style="left:468px;top:246px;width:1px;height:14px;background:#464a57;"></div><div style="left:484px;top:246px;width:1px;height:14px;background:#464a57;"></div><div style="left:500px;top:246px;width:1px;height:14px;background:#464a57;"></div><div style="left:516px;top:246px;width:1px;height:14px;background:#464a57;"></div><div style="left:532px;top:246px;width:1px;height:14px;background:#464a57;"></div><div style="left:548px;top:246px;width:1px;height:14px;background:#464a57;"></div><div style="left:564px;top:246px;width:1px;height:14px;background:#464a57;"></div><div style="left:580px;top:246px;width:1px;height:14px;background:#464a57;"></div><div style="left:596px;top:246px;width:1px;height:14px;background:#464a57;"></div><div style="left:612px;top:246px;width:1px;height:14px;background:#464a57;"></div><div style="left:628px;top:246px;width:1px;height:14px;background:#464a57;"></div><div style="left:644px;top:246px;width:1px;height:14px;background:#464a57;"></div><div style="left:660px;top:246px;width:1px;height:14px;background:#464a57;"></div><div style="left:676px;top:246px;width:1px;height:14px;background:#464a57;"></div><div style="left:692px;top:246px;width:1px;height:14px;background:#464a57;"></div><div style="left:708px;top:246px;width:1px;height:14px;background:#464a57;"></div><div style="left:724px;top:246px;width:1px;height:14px;background:#464a57;"></div><div style="left:740px;top:246px;width:1px;height:14px;background:#464a57;"></div><div style="left:756px;top:246px;width:1px;height:14px;background:#464a57;"></div><div style="left:772px;top:246px;width:1px;height:14px;background:#464a57;"></div><div style="left:788px;top:246px;width:1px;height:14px;background:#464a57;"></div><div style="left:804px;top:246px;width:1px;height:14px;background:#464a57;"></div><div style="left:820px;top:246px;width:1px;height:14px;background:#464a57;"></div><div style="left:836px;top:246px;width:1px;height:14px;background:#464a57;"></div><div style="left:852px;top:246px;width:1px;height:14px;background:#464a57;"></div><div style="left:868px;top:246px;width:1px;height:14px;background:#464a57;"></div><div style="left:884px;top:246px;width:1px;height:14px;background:#464a57;"></div><div style="left:900px;top:246px;width:1px;height:14px;background:#464a57;"></div><div style="left:916px;top:246px;width:1px;height:14px;background:#464a57;"></div><div style="left:932px;top:246px;width:1px;height:14px;background:#464a57;"></div><div style="left:948px;top:246px;width:1px;height:14px;background:#464a57;"></div><div style="left:964px;top:246px;width:1px;height:14px;background:#464a57;"></div><div style="left:980px;top:246px;width:1px;height:14px;background:#464a57;"></div><div style="left:996px;top:246px;width:1px;height:14px;background:#464a57;"></div><div style="left:1012px;top:246px;width:1px;height:14px;background:#464a57;"></div><div style="left:1028px;top:246px;width:1px;height:14px;background:#464a57;"></div><div style="left:1044px;top:246px;width:1px;height:14px;background:#464a57;"></div><div style="left:1060px;top:246px;width:1px;height:14px;background:#464a57;"></div><div style="left:1076px;top:246px;width:1px;height:14px;background:#464a57;"></div><div style="left:1092px;top:246px;width:1px;height:14px;background:#464a57;"></div><div style="left:1108px;top:246px;width:1px;height:14px;background:#464a57;"></div><div style="left:1124px;top:246px;width:1px;height:14px;background:#464a57;"></div><div style="left:1140px;top:246px;width:1px;height:14px;background:#464a57;"></div><div style="left:1156px;top:246px;width:1px;height:14px;background:#464a57;"></div><div style="left:1172px;top:246px;width:1px;height:14px;background:#464a57;"></div><div style="left:1188px;top:246px;width:1px;height:14px;background:#464a57;"></div><div style="left:1204px;top:246px;width:1px;height:14px;background:#464a57;"></div><div style="left:1220px;top:246px;width:1px;height:14px;background:#464a57;"></div><div style="left:1236px;top:246px;width:1px;height:14px;background:#464a57;"></div><div style="left:1252px;top:246px;width:1px;height:14px;background:#464a57;"></div><div style="left:202px;top:263px;width:1060px;height:1px;background:#50545f;"></div><div style="left:202px;top:264px;width:1060px;height:14px;background:#868b9b;"></div><div style="left:202px;top:278px;width:1060px;height:4px;background:#646977;box-shadow:inset 0 1px 0 #737885;"></div><div style="left:212px;top:264px;width:1px;height:14px;background:#464a57;"></div><div style="left:228px;top:264px;width:1px;height:14px;background:#464a57;"></div><div style="left:244px;top:264px;width:1px;height:14px;background:#464a57;"></div><div style="left:260px;top:264px;width:1px;height:14px;background:#464a57;"></div><div style="left:276px;top:264px;width:1px;height:14px;background:#464a57;"></div><div style="left:292px;top:264px;width:1px;height:14px;background:#464a57;"></div><div style="left:308px;top:264px;width:1px;height:14px;background:#464a57;"></div><div style="left:324px;top:264px;width:1px;height:14px;background:#464a57;"></div><div style="left:340px;top:264px;width:1px;height:14px;background:#464a57;"></div><div style="left:356px;top:264px;width:1px;height:14px;background:#464a57;"></div><div style="left:372px;top:264px;width:1px;height:14px;background:#464a57;"></div><div style="left:388px;top:264px;width:1px;height:14px;background:#464a57;"></div><div style="left:404px;top:264px;width:1px;height:14px;background:#464a57;"></div><div style="left:420px;top:264px;width:1px;height:14px;background:#464a57;"></div><div style="left:436px;top:264px;width:1px;height:14px;background:#464a57;"></div><div style="left:452px;top:264px;width:1px;height:14px;background:#464a57;"></div><div style="left:468px;top:264px;width:1px;height:14px;background:#464a57;"></div><div style="left:484px;top:264px;width:1px;height:14px;background:#464a57;"></div><div style="left:500px;top:264px;width:1px;height:14px;background:#464a57;"></div><div style="left:516px;top:264px;width:1px;height:14px;background:#464a57;"></div><div style="left:532px;top:264px;width:1px;height:14px;background:#464a57;"></div><div style="left:548px;top:264px;width:1px;height:14px;background:#464a57;"></div><div style="left:564px;top:264px;width:1px;height:14px;background:#464a57;"></div><div style="left:580px;top:264px;width:1px;height:14px;background:#464a57;"></div><div style="left:596px;top:264px;width:1px;height:14px;background:#464a57;"></div><div style="left:612px;top:264px;width:1px;height:14px;background:#464a57;"></div><div style="left:628px;top:264px;width:1px;height:14px;background:#464a57;"></div><div style="left:644px;top:264px;width:1px;height:14px;background:#464a57;"></div><div style="left:660px;top:264px;width:1px;height:14px;background:#464a57;"></div><div style="left:676px;top:264px;width:1px;height:14px;background:#464a57;"></div><div style="left:692px;top:264px;width:1px;height:14px;background:#464a57;"></div><div style="left:708px;top:264px;width:1px;height:14px;background:#464a57;"></div><div style="left:724px;top:264px;width:1px;height:14px;background:#464a57;"></div><div style="left:740px;top:264px;width:1px;height:14px;background:#464a57;"></div><div style="left:756px;top:264px;width:1px;height:14px;background:#464a57;"></div><div style="left:772px;top:264px;width:1px;height:14px;background:#464a57;"></div><div style="left:788px;top:264px;width:1px;height:14px;background:#464a57;"></div><div style="left:804px;top:264px;width:1px;height:14px;background:#464a57;"></div><div style="left:820px;top:264px;width:1px;height:14px;background:#464a57;"></div><div style="left:836px;top:264px;width:1px;height:14px;background:#464a57;"></div><div style="left:852px;top:264px;width:1px;height:14px;background:#464a57;"></div><div style="left:868px;top:264px;width:1px;height:14px;background:#464a57;"></div><div style="left:884px;top:264px;width:1px;height:14px;background:#464a57;"></div><div style="left:900px;top:264px;width:1px;height:14px;background:#464a57;"></div><div style="left:916px;top:264px;width:1px;height:14px;background:#464a57;"></div><div style="left:932px;top:264px;width:1px;height:14px;background:#464a57;"></div><div style="left:948px;top:264px;width:1px;height:14px;background:#464a57;"></div><div style="left:964px;top:264px;width:1px;height:14px;background:#464a57;"></div><div style="left:980px;top:264px;width:1px;height:14px;background:#464a57;"></div><div style="left:996px;top:264px;width:1px;height:14px;background:#464a57;"></div><div style="left:1012px;top:264px;width:1px;height:14px;background:#464a57;"></div><div style="left:1028px;top:264px;width:1px;height:14px;background:#464a57;"></div><div style="left:1044px;top:264px;width:1px;height:14px;background:#464a57;"></div><div style="left:1060px;top:264px;width:1px;height:14px;background:#464a57;"></div><div style="left:1076px;top:264px;width:1px;height:14px;background:#464a57;"></div><div style="left:1092px;top:264px;width:1px;height:14px;background:#464a57;"></div><div style="left:1108px;top:264px;width:1px;height:14px;background:#464a57;"></div><div style="left:1124px;top:264px;width:1px;height:14px;background:#464a57;"></div><div style="left:1140px;top:264px;width:1px;height:14px;background:#464a57;"></div><div style="left:1156px;top:264px;width:1px;height:14px;background:#464a57;"></div><div style="left:1172px;top:264px;width:1px;height:14px;background:#464a57;"></div><div style="left:1188px;top:264px;width:1px;height:14px;background:#464a57;"></div><div style="left:1204px;top:264px;width:1px;height:14px;background:#464a57;"></div><div style="left:1220px;top:264px;width:1px;height:14px;background:#464a57;"></div><div style="left:1236px;top:264px;width:1px;height:14px;background:#464a57;"></div><div style="left:1252px;top:264px;width:1px;height:14px;background:#464a57;"></div><div style="left:202px;top:281px;width:1060px;height:1px;background:#50545f;"></div><div style="left:202px;top:282px;width:1060px;height:14px;background:#868b9b;"></div><div style="left:202px;top:296px;width:1060px;height:4px;background:#646977;box-shadow:inset 0 1px 0 #737885;"></div><div style="left:212px;top:282px;width:1px;height:14px;background:#464a57;"></div><div style="left:228px;top:282px;width:1px;height:14px;background:#464a57;"></div><div style="left:244px;top:282px;width:1px;height:14px;background:#464a57;"></div><div style="left:260px;top:282px;width:1px;height:14px;background:#464a57;"></div><div style="left:276px;top:282px;width:1px;height:14px;background:#464a57;"></div><div style="left:292px;top:282px;width:1px;height:14px;background:#464a57;"></div><div style="left:308px;top:282px;width:1px;height:14px;background:#464a57;"></div><div style="left:324px;top:282px;width:1px;height:14px;background:#464a57;"></div><div style="left:340px;top:282px;width:1px;height:14px;background:#464a57;"></div><div style="left:356px;top:282px;width:1px;height:14px;background:#464a57;"></div><div style="left:372px;top:282px;width:1px;height:14px;background:#464a57;"></div><div style="left:388px;top:282px;width:1px;height:14px;background:#464a57;"></div><div style="left:404px;top:282px;width:1px;height:14px;background:#464a57;"></div><div style="left:420px;top:282px;width:1px;height:14px;background:#464a57;"></div><div style="left:436px;top:282px;width:1px;height:14px;background:#464a57;"></div><div style="left:452px;top:282px;width:1px;height:14px;background:#464a57;"></div><div style="left:468px;top:282px;width:1px;height:14px;background:#464a57;"></div><div style="left:484px;top:282px;width:1px;height:14px;background:#464a57;"></div><div style="left:500px;top:282px;width:1px;height:14px;background:#464a57;"></div><div style="left:516px;top:282px;width:1px;height:14px;background:#464a57;"></div><div style="left:532px;top:282px;width:1px;height:14px;background:#464a57;"></div><div style="left:548px;top:282px;width:1px;height:14px;background:#464a57;"></div><div style="left:564px;top:282px;width:1px;height:14px;background:#464a57;"></div><div style="left:580px;top:282px;width:1px;height:14px;background:#464a57;"></div><div style="left:596px;top:282px;width:1px;height:14px;background:#464a57;"></div><div style="left:612px;top:282px;width:1px;height:14px;background:#464a57;"></div><div style="left:628px;top:282px;width:1px;height:14px;background:#464a57;"></div><div style="left:644px;top:282px;width:1px;height:14px;background:#464a57;"></div><div style="left:660px;top:282px;width:1px;height:14px;background:#464a57;"></div><div style="left:676px;top:282px;width:1px;height:14px;background:#464a57;"></div><div style="left:692px;top:282px;width:1px;height:14px;background:#464a57;"></div><div style="left:708px;top:282px;width:1px;height:14px;background:#464a57;"></div><div style="left:724px;top:282px;width:1px;height:14px;background:#464a57;"></div><div style="left:740px;top:282px;width:1px;height:14px;background:#464a57;"></div><div style="left:756px;top:282px;width:1px;height:14px;background:#464a57;"></div><div style="left:772px;top:282px;width:1px;height:14px;background:#464a57;"></div><div style="left:788px;top:282px;width:1px;height:14px;background:#464a57;"></div><div style="left:804px;top:282px;width:1px;height:14px;background:#464a57;"></div><div style="left:820px;top:282px;width:1px;height:14px;background:#464a57;"></div><div style="left:836px;top:282px;width:1px;height:14px;background:#464a57;"></div><div style="left:852px;top:282px;width:1px;height:14px;background:#464a57;"></div><div style="left:868px;top:282px;width:1px;height:14px;background:#464a57;"></div><div style="left:884px;top:282px;width:1px;height:14px;background:#464a57;"></div><div style="left:900px;top:282px;width:1px;height:14px;background:#464a57;"></div><div style="left:916px;top:282px;width:1px;height:14px;background:#464a57;"></div><div style="left:932px;top:282px;width:1px;height:14px;background:#464a57;"></div><div style="left:948px;top:282px;width:1px;height:14px;background:#464a57;"></div><div style="left:964px;top:282px;width:1px;height:14px;background:#464a57;"></div><div style="left:980px;top:282px;width:1px;height:14px;background:#464a57;"></div><div style="left:996px;top:282px;width:1px;height:14px;background:#464a57;"></div><div style="left:1012px;top:282px;width:1px;height:14px;background:#464a57;"></div><div style="left:1028px;top:282px;width:1px;height:14px;background:#464a57;"></div><div style="left:1044px;top:282px;width:1px;height:14px;background:#464a57;"></div><div style="left:1060px;top:282px;width:1px;height:14px;background:#464a57;"></div><div style="left:1076px;top:282px;width:1px;height:14px;background:#464a57;"></div><div style="left:1092px;top:282px;width:1px;height:14px;background:#464a57;"></div><div style="left:1108px;top:282px;width:1px;height:14px;background:#464a57;"></div><div style="left:1124px;top:282px;width:1px;height:14px;background:#464a57;"></div><div style="left:1140px;top:282px;width:1px;height:14px;background:#464a57;"></div><div style="left:1156px;top:282px;width:1px;height:14px;background:#464a57;"></div><div style="left:1172px;top:282px;width:1px;height:14px;background:#464a57;"></div><div style="left:1188px;top:282px;width:1px;height:14px;background:#464a57;"></div><div style="left:1204px;top:282px;width:1px;height:14px;background:#464a57;"></div><div style="left:1220px;top:282px;width:1px;height:14px;background:#464a57;"></div><div style="left:1236px;top:282px;width:1px;height:14px;background:#464a57;"></div><div style="left:1252px;top:282px;width:1px;height:14px;background:#464a57;"></div><div style="left:202px;top:299px;width:1060px;height:1px;background:#50545f;"></div><div style="left:202px;top:300px;width:1060px;height:14px;background:#868b9b;"></div><div style="left:202px;top:314px;width:1060px;height:4px;background:#646977;box-shadow:inset 0 1px 0 #737885;"></div><div style="left:212px;top:300px;width:1px;height:14px;background:#464a57;"></div><div style="left:228px;top:300px;width:1px;height:14px;background:#464a57;"></div><div style="left:244px;top:300px;width:1px;height:14px;background:#464a57;"></div><div style="left:260px;top:300px;width:1px;height:14px;background:#464a57;"></div><div style="left:276px;top:300px;width:1px;height:14px;background:#464a57;"></div><div style="left:292px;top:300px;width:1px;height:14px;background:#464a57;"></div><div style="left:308px;top:300px;width:1px;height:14px;background:#464a57;"></div><div style="left:324px;top:300px;width:1px;height:14px;background:#464a57;"></div><div style="left:340px;top:300px;width:1px;height:14px;background:#464a57;"></div><div style="left:356px;top:300px;width:1px;height:14px;background:#464a57;"></div><div style="left:372px;top:300px;width:1px;height:14px;background:#464a57;"></div><div style="left:388px;top:300px;width:1px;height:14px;background:#464a57;"></div><div style="left:404px;top:300px;width:1px;height:14px;background:#464a57;"></div><div style="left:420px;top:300px;width:1px;height:14px;background:#464a57;"></div><div style="left:436px;top:300px;width:1px;height:14px;background:#464a57;"></div><div style="left:452px;top:300px;width:1px;height:14px;background:#464a57;"></div><div style="left:468px;top:300px;width:1px;height:14px;background:#464a57;"></div><div style="left:484px;top:300px;width:1px;height:14px;background:#464a57;"></div><div style="left:500px;top:300px;width:1px;height:14px;background:#464a57;"></div><div style="left:516px;top:300px;width:1px;height:14px;background:#464a57;"></div><div style="left:532px;top:300px;width:1px;height:14px;background:#464a57;"></div><div style="left:548px;top:300px;width:1px;height:14px;background:#464a57;"></div><div style="left:564px;top:300px;width:1px;height:14px;background:#464a57;"></div><div style="left:580px;top:300px;width:1px;height:14px;background:#464a57;"></div><div style="left:596px;top:300px;width:1px;height:14px;background:#464a57;"></div><div style="left:612px;top:300px;width:1px;height:14px;background:#464a57;"></div><div style="left:628px;top:300px;width:1px;height:14px;background:#464a57;"></div><div style="left:644px;top:300px;width:1px;height:14px;background:#464a57;"></div><div style="left:660px;top:300px;width:1px;height:14px;background:#464a57;"></div><div style="left:676px;top:300px;width:1px;height:14px;background:#464a57;"></div><div style="left:692px;top:300px;width:1px;height:14px;background:#464a57;"></div><div style="left:708px;top:300px;width:1px;height:14px;background:#464a57;"></div><div style="left:724px;top:300px;width:1px;height:14px;background:#464a57;"></div><div style="left:740px;top:300px;width:1px;height:14px;background:#464a57;"></div><div style="left:756px;top:300px;width:1px;height:14px;background:#464a57;"></div><div style="left:772px;top:300px;width:1px;height:14px;background:#464a57;"></div><div style="left:788px;top:300px;width:1px;height:14px;background:#464a57;"></div><div style="left:804px;top:300px;width:1px;height:14px;background:#464a57;"></div><div style="left:820px;top:300px;width:1px;height:14px;background:#464a57;"></div><div style="left:836px;top:300px;width:1px;height:14px;background:#464a57;"></div><div style="left:852px;top:300px;width:1px;height:14px;background:#464a57;"></div><div style="left:868px;top:300px;width:1px;height:14px;background:#464a57;"></div><div style="left:884px;top:300px;width:1px;height:14px;background:#464a57;"></div><div style="left:900px;top:300px;width:1px;height:14px;background:#464a57;"></div><div style="left:916px;top:300px;width:1px;height:14px;background:#464a57;"></div><div style="left:932px;top:300px;width:1px;height:14px;background:#464a57;"></div><div style="left:948px;top:300px;width:1px;height:14px;background:#464a57;"></div><div style="left:964px;top:300px;width:1px;height:14px;background:#464a57;"></div><div style="left:980px;top:300px;width:1px;height:14px;background:#464a57;"></div><div style="left:996px;top:300px;width:1px;height:14px;background:#464a57;"></div><div style="left:1012px;top:300px;width:1px;height:14px;background:#464a57;"></div><div style="left:1028px;top:300px;width:1px;height:14px;background:#464a57;"></div><div style="left:1044px;top:300px;width:1px;height:14px;background:#464a57;"></div><div style="left:1060px;top:300px;width:1px;height:14px;background:#464a57;"></div><div style="left:1076px;top:300px;width:1px;height:14px;background:#464a57;"></div><div style="left:1092px;top:300px;width:1px;height:14px;background:#464a57;"></div><div style="left:1108px;top:300px;width:1px;height:14px;background:#464a57;"></div><div style="left:1124px;top:300px;width:1px;height:14px;background:#464a57;"></div><div style="left:1140px;top:300px;width:1px;height:14px;background:#464a57;"></div><div style="left:1156px;top:300px;width:1px;height:14px;background:#464a57;"></div><div style="left:1172px;top:300px;width:1px;height:14px;background:#464a57;"></div><div style="left:1188px;top:300px;width:1px;height:14px;background:#464a57;"></div><div style="left:1204px;top:300px;width:1px;height:14px;background:#464a57;"></div><div style="left:1220px;top:300px;width:1px;height:14px;background:#464a57;"></div><div style="left:1236px;top:300px;width:1px;height:14px;background:#464a57;"></div><div style="left:1252px;top:300px;width:1px;height:14px;background:#464a57;"></div><div style="left:202px;top:317px;width:1060px;height:1px;background:#50545f;"></div><div style="left:202px;top:318px;width:1060px;height:14px;background:#868b9b;"></div><div style="left:212px;top:318px;width:1px;height:14px;background:#464a57;"></div><div style="left:228px;top:318px;width:1px;height:14px;background:#464a57;"></div><div style="left:244px;top:318px;width:1px;height:14px;background:#464a57;"></div><div style="left:260px;top:318px;width:1px;height:14px;background:#464a57;"></div><div style="left:276px;top:318px;width:1px;height:14px;background:#464a57;"></div><div style="left:292px;top:318px;width:1px;height:14px;background:#464a57;"></div><div style="left:308px;top:318px;width:1px;height:14px;background:#464a57;"></div><div style="left:324px;top:318px;width:1px;height:14px;background:#464a57;"></div><div style="left:340px;top:318px;width:1px;height:14px;background:#464a57;"></div><div style="left:356px;top:318px;width:1px;height:14px;background:#464a57;"></div><div style="left:372px;top:318px;width:1px;height:14px;background:#464a57;"></div><div style="left:388px;top:318px;width:1px;height:14px;background:#464a57;"></div><div style="left:404px;top:318px;width:1px;height:14px;background:#464a57;"></div><div style="left:420px;top:318px;width:1px;height:14px;background:#464a57;"></div><div style="left:436px;top:318px;width:1px;height:14px;background:#464a57;"></div><div style="left:452px;top:318px;width:1px;height:14px;background:#464a57;"></div><div style="left:468px;top:318px;width:1px;height:14px;background:#464a57;"></div><div style="left:484px;top:318px;width:1px;height:14px;background:#464a57;"></div><div style="left:500px;top:318px;width:1px;height:14px;background:#464a57;"></div><div style="left:516px;top:318px;width:1px;height:14px;background:#464a57;"></div><div style="left:532px;top:318px;width:1px;height:14px;background:#464a57;"></div><div style="left:548px;top:318px;width:1px;height:14px;background:#464a57;"></div><div style="left:564px;top:318px;width:1px;height:14px;background:#464a57;"></div><div style="left:580px;top:318px;width:1px;height:14px;background:#464a57;"></div><div style="left:596px;top:318px;width:1px;height:14px;background:#464a57;"></div><div style="left:612px;top:318px;width:1px;height:14px;background:#464a57;"></div><div style="left:628px;top:318px;width:1px;height:14px;background:#464a57;"></div><div style="left:644px;top:318px;width:1px;height:14px;background:#464a57;"></div><div style="left:660px;top:318px;width:1px;height:14px;background:#464a57;"></div><div style="left:676px;top:318px;width:1px;height:14px;background:#464a57;"></div><div style="left:692px;top:318px;width:1px;height:14px;background:#464a57;"></div><div style="left:708px;top:318px;width:1px;height:14px;background:#464a57;"></div><div style="left:724px;top:318px;width:1px;height:14px;background:#464a57;"></div><div style="left:740px;top:318px;width:1px;height:14px;background:#464a57;"></div><div style="left:756px;top:318px;width:1px;height:14px;background:#464a57;"></div><div style="left:772px;top:318px;width:1px;height:14px;background:#464a57;"></div><div style="left:788px;top:318px;width:1px;height:14px;background:#464a57;"></div><div style="left:804px;top:318px;width:1px;height:14px;background:#464a57;"></div><div style="left:820px;top:318px;width:1px;height:14px;background:#464a57;"></div><div style="left:836px;top:318px;width:1px;height:14px;background:#464a57;"></div><div style="left:852px;top:318px;width:1px;height:14px;background:#464a57;"></div><div style="left:868px;top:318px;width:1px;height:14px;background:#464a57;"></div><div style="left:884px;top:318px;width:1px;height:14px;background:#464a57;"></div><div style="left:900px;top:318px;width:1px;height:14px;background:#464a57;"></div><div style="left:916px;top:318px;width:1px;height:14px;background:#464a57;"></div><div style="left:932px;top:318px;width:1px;height:14px;background:#464a57;"></div><div style="left:948px;top:318px;width:1px;height:14px;background:#464a57;"></div><div style="left:964px;top:318px;width:1px;height:14px;background:#464a57;"></div><div style="left:980px;top:318px;width:1px;height:14px;background:#464a57;"></div><div style="left:996px;top:318px;width:1px;height:14px;background:#464a57;"></div><div style="left:1012px;top:318px;width:1px;height:14px;background:#464a57;"></div><div style="left:1028px;top:318px;width:1px;height:14px;background:#464a57;"></div><div style="left:1044px;top:318px;width:1px;height:14px;background:#464a57;"></div><div style="left:1060px;top:318px;width:1px;height:14px;background:#464a57;"></div><div style="left:1076px;top:318px;width:1px;height:14px;background:#464a57;"></div><div style="left:1092px;top:318px;width:1px;height:14px;background:#464a57;"></div><div style="left:1108px;top:318px;width:1px;height:14px;background:#464a57;"></div><div style="left:1124px;top:318px;width:1px;height:14px;background:#464a57;"></div><div style="left:1140px;top:318px;width:1px;height:14px;background:#464a57;"></div><div style="left:1156px;top:318px;width:1px;height:14px;background:#464a57;"></div><div style="left:1172px;top:318px;width:1px;height:14px;background:#464a57;"></div><div style="left:1188px;top:318px;width:1px;height:14px;background:#464a57;"></div><div style="left:1204px;top:318px;width:1px;height:14px;background:#464a57;"></div><div style="left:1220px;top:318px;width:1px;height:14px;background:#464a57;"></div><div style="left:1236px;top:318px;width:1px;height:14px;background:#464a57;"></div><div style="left:1252px;top:318px;width:1px;height:14px;background:#464a57;"></div><div style="left:378px;top:377px;width:815px;height:14px;background-color:#3d414c;background-image:repeating-conic-gradient(#4d5260 0 25%, #3a3e48 0 50%);background-size:2px 2px;"></div><div style="left:203px;top:377px;width:15px;height:14px;background:linear-gradient(#474b57,#3c404b);border:1px solid #656a76;border-radius:3px;box-shadow:0 0 0 1px #23262d;"></div><svg style="position:absolute;left:0;top:0;overflow:visible" width="1" height="1"><path d="M212.5 380.0v8l-5-4z" fill="#f4f4f6"/></svg><div style="left:218px;top:377px;width:161px;height:14px;background:linear-gradient(#656a7b,#575c6c);border:1px solid #262932;border-radius:2px;"></div><svg style="position:absolute;left:290px;top:379px" width="20" height="12"><rect x="0" y="0" width="2" height="2" fill="#2b2e37"/><rect x="1" y="1" width="1" height="1" fill="#8a8f9c"/><rect x="0" y="4" width="2" height="2" fill="#2b2e37"/><rect x="1" y="5" width="1" height="1" fill="#8a8f9c"/><rect x="0" y="8" width="2" height="2" fill="#2b2e37"/><rect x="1" y="9" width="1" height="1" fill="#8a8f9c"/><rect x="4" y="0" width="2" height="2" fill="#2b2e37"/><rect x="5" y="1" width="1" height="1" fill="#8a8f9c"/><rect x="4" y="4" width="2" height="2" fill="#2b2e37"/><rect x="5" y="5" width="1" height="1" fill="#8a8f9c"/><rect x="4" y="8" width="2" height="2" fill="#2b2e37"/><rect x="5" y="9" width="1" height="1" fill="#8a8f9c"/><rect x="8" y="0" width="2" height="2" fill="#2b2e37"/><rect x="9" y="1" width="1" height="1" fill="#8a8f9c"/><rect x="8" y="4" width="2" height="2" fill="#2b2e37"/><rect x="9" y="5" width="1" height="1" fill="#8a8f9c"/><rect x="8" y="8" width="2" height="2" fill="#2b2e37"/><rect x="9" y="9" width="1" height="1" fill="#8a8f9c"/><rect x="12" y="0" width="2" height="2" fill="#2b2e37"/><rect x="13" y="1" width="1" height="1" fill="#8a8f9c"/><rect x="12" y="4" width="2" height="2" fill="#2b2e37"/><rect x="13" y="5" width="1" height="1" fill="#8a8f9c"/><rect x="12" y="8" width="2" height="2" fill="#2b2e37"/><rect x="13" y="9" width="1" height="1" fill="#8a8f9c"/><rect x="16" y="0" width="2" height="2" fill="#2b2e37"/><rect x="17" y="1" width="1" height="1" fill="#8a8f9c"/><rect x="16" y="4" width="2" height="2" fill="#2b2e37"/><rect x="17" y="5" width="1" height="1" fill="#8a8f9c"/><rect x="16" y="8" width="2" height="2" fill="#2b2e37"/><rect x="17" y="9" width="1" height="1" fill="#8a8f9c"/></svg><div style="left:1193px;top:377px;width:15px;height:14px;background:linear-gradient(#474b57,#3c404b);border:1px solid #656a76;border-radius:3px;box-shadow:0 0 0 1px #23262d;"></div><svg style="position:absolute;left:0;top:0;overflow:visible" width="1" height="1"><path d="M1202.5 380.0v8l-5-4z" fill="#f4f4f6"/></svg><div style="left:1208px;top:377px;width:15px;height:14px;background:linear-gradient(#474b57,#3c404b);border:1px solid #656a76;border-radius:3px;box-shadow:0 0 0 1px #23262d;"></div><svg style="position:absolute;left:0;top:0;overflow:visible" width="1" height="1"><path d="M1213.5 380.0v8l5-4z" fill="#f4f4f6"/></svg><div style="left:1225px;top:378px;width:17px;height:12px;background:linear-gradient(#eeeef2,#c9cbd3 50%,#aeb1bc);border:1px solid #15171c;border-radius:1px;box-shadow:inset 1px 1px 0 #ffffff88;"><svg style="position:absolute;left:0;top:0" width="17" height="12"><path d="M4 6h9M8.5 2v8" stroke="#111" stroke-width="1.6"/></svg></div><div style="left:1244px;top:378px;width:17px;height:12px;background:linear-gradient(#eeeef2,#c9cbd3 50%,#aeb1bc);border:1px solid #15171c;border-radius:1px;box-shadow:inset 1px 1px 0 #ffffff88;"><svg style="position:absolute;left:0;top:0" width="17" height="12"><path d="M4 6h9" stroke="#111" stroke-width="1.6"/></svg></div><div style="left:1263px;top:155px;width:14px;height:15px;background:linear-gradient(#474b57,#3c404b);border:1px solid #656a76;border-radius:3px;box-shadow:0 0 0 1px #23262d;"></div><svg style="position:absolute;left:0;top:0;overflow:visible" width="1" height="1"><path d="M1265.5 164.5h9l-4.5-4.5z" fill="#f4f4f6"/></svg><div style="left:1263px;top:171px;width:14px;height:172px;background:#3f434e;border:1px solid #5a5e6a;border-radius:2px;box-shadow:0 0 0 1px #2a2d36;"></div><svg style="position:absolute;left:1265px;top:250px" width="12" height="20"><rect x="0" y="0" width="2" height="2" fill="#2b2e37"/><rect x="1" y="1" width="1" height="1" fill="#8a8f9c"/><rect x="0" y="4" width="2" height="2" fill="#2b2e37"/><rect x="1" y="5" width="1" height="1" fill="#8a8f9c"/><rect x="0" y="8" width="2" height="2" fill="#2b2e37"/><rect x="1" y="9" width="1" height="1" fill="#8a8f9c"/><rect x="0" y="12" width="2" height="2" fill="#2b2e37"/><rect x="1" y="13" width="1" height="1" fill="#8a8f9c"/><rect x="0" y="16" width="2" height="2" fill="#2b2e37"/><rect x="1" y="17" width="1" height="1" fill="#8a8f9c"/><rect x="4" y="0" width="2" height="2" fill="#2b2e37"/><rect x="5" y="1" width="1" height="1" fill="#8a8f9c"/><rect x="4" y="4" width="2" height="2" fill="#2b2e37"/><rect x="5" y="5" width="1" height="1" fill="#8a8f9c"/><rect x="4" y="8" width="2" height="2" fill="#2b2e37"/><rect x="5" y="9" width="1" height="1" fill="#8a8f9c"/><rect x="4" y="12" width="2" height="2" fill="#2b2e37"/><rect x="5" y="13" width="1" height="1" fill="#8a8f9c"/><rect x="4" y="16" width="2" height="2" fill="#2b2e37"/><rect x="5" y="17" width="1" height="1" fill="#8a8f9c"/><rect x="8" y="0" width="2" height="2" fill="#2b2e37"/><rect x="9" y="1" width="1" height="1" fill="#8a8f9c"/><rect x="8" y="4" width="2" height="2" fill="#2b2e37"/><rect x="9" y="5" width="1" height="1" fill="#8a8f9c"/><rect x="8" y="8" width="2" height="2" fill="#2b2e37"/><rect x="9" y="9" width="1" height="1" fill="#8a8f9c"/><rect x="8" y="12" width="2" height="2" fill="#2b2e37"/><rect x="9" y="13" width="1" height="1" fill="#8a8f9c"/><rect x="8" y="16" width="2" height="2" fill="#2b2e37"/><rect x="9" y="17" width="1" height="1" fill="#8a8f9c"/></svg><div style="left:1263px;top:345px;width:14px;height:15px;background:linear-gradient(#474b57,#3c404b);border:1px solid #656a76;border-radius:3px;box-shadow:0 0 0 1px #23262d;"></div><svg style="position:absolute;left:0;top:0;overflow:visible" width="1" height="1"><path d="M1265.5 354.5h9l-4.5-4.5z" fill="#f4f4f6"/></svg><div style="left:1263px;top:361px;width:14px;height:15px;background:linear-gradient(#474b57,#3c404b);border:1px solid #656a76;border-radius:3px;box-shadow:0 0 0 1px #23262d;"></div><svg style="position:absolute;left:0;top:0;overflow:visible" width="1" height="1"><path d="M1265.5 366.5h9l-4.5 4.5z" fill="#f4f4f6"/></svg><svg style="position:absolute;left:430px;top:394px" width="425" height="2"><rect x="0" y="1" width="3" height="1" fill="#a3a8b4"/><rect x="1" y="0" width="1" height="1" fill="#8c919d"/><rect x="5" y="1" width="3" height="1" fill="#a3a8b4"/><rect x="6" y="0" width="1" height="1" fill="#8c919d"/><rect x="10" y="1" width="3" height="1" fill="#a3a8b4"/><rect x="11" y="0" width="1" height="1" fill="#8c919d"/><rect x="15" y="1" width="3" height="1" fill="#a3a8b4"/><rect x="16" y="0" width="1" height="1" fill="#8c919d"/><rect x="20" y="1" width="3" height="1" fill="#a3a8b4"/><rect x="21" y="0" width="1" height="1" fill="#8c919d"/><rect x="25" y="1" width="3" height="1" fill="#a3a8b4"/><rect x="26" y="0" width="1" height="1" fill="#8c919d"/><rect x="30" y="1" width="3" height="1" fill="#a3a8b4"/><rect x="31" y="0" width="1" height="1" fill="#8c919d"/><rect x="35" y="1" width="3" height="1" fill="#a3a8b4"/><rect x="36" y="0" width="1" height="1" fill="#8c919d"/><rect x="40" y="1" width="3" height="1" fill="#a3a8b4"/><rect x="41" y="0" width="1" height="1" fill="#8c919d"/><rect x="45" y="1" width="3" height="1" fill="#a3a8b4"/><rect x="46" y="0" width="1" height="1" fill="#8c919d"/><rect x="50" y="1" width="3" height="1" fill="#a3a8b4"/><rect x="51" y="0" width="1" height="1" fill="#8c919d"/><rect x="55" y="1" width="3" height="1" fill="#a3a8b4"/><rect x="56" y="0" width="1" height="1" fill="#8c919d"/><rect x="60" y="1" width="3" height="1" fill="#a3a8b4"/><rect x="61" y="0" width="1" height="1" fill="#8c919d"/><rect x="65" y="1" width="3" height="1" fill="#a3a8b4"/><rect x="66" y="0" width="1" height="1" fill="#8c919d"/><rect x="70" y="1" width="3" height="1" fill="#a3a8b4"/><rect x="71" y="0" width="1" height="1" fill="#8c919d"/><rect x="75" y="1" width="3" height="1" fill="#a3a8b4"/><rect x="76" y="0" width="1" height="1" fill="#8c919d"/><rect x="80" y="1" width="3" height="1" fill="#a3a8b4"/><rect x="81" y="0" width="1" height="1" fill="#8c919d"/><rect x="85" y="1" width="3" height="1" fill="#a3a8b4"/><rect x="86" y="0" width="1" height="1" fill="#8c919d"/><rect x="90" y="1" width="3" height="1" fill="#a3a8b4"/><rect x="91" y="0" width="1" height="1" fill="#8c919d"/><rect x="95" y="1" width="3" height="1" fill="#a3a8b4"/><rect x="96" y="0" width="1" height="1" fill="#8c919d"/><rect x="100" y="1" width="3" height="1" fill="#a3a8b4"/><rect x="101" y="0" width="1" height="1" fill="#8c919d"/><rect x="105" y="1" width="3" height="1" fill="#a3a8b4"/><rect x="106" y="0" width="1" height="1" fill="#8c919d"/><rect x="110" y="1" width="3" height="1" fill="#a3a8b4"/><rect x="111" y="0" width="1" height="1" fill="#8c919d"/><rect x="115" y="1" width="3" height="1" fill="#a3a8b4"/><rect x="116" y="0" width="1" height="1" fill="#8c919d"/><rect x="120" y="1" width="3" height="1" fill="#a3a8b4"/><rect x="121" y="0" width="1" height="1" fill="#8c919d"/><rect x="125" y="1" width="3" height="1" fill="#a3a8b4"/><rect x="126" y="0" width="1" height="1" fill="#8c919d"/><rect x="130" y="1" width="3" height="1" fill="#a3a8b4"/><rect x="131" y="0" width="1" height="1" fill="#8c919d"/><rect x="135" y="1" width="3" height="1" fill="#a3a8b4"/><rect x="136" y="0" width="1" height="1" fill="#8c919d"/><rect x="140" y="1" width="3" height="1" fill="#a3a8b4"/><rect x="141" y="0" width="1" height="1" fill="#8c919d"/><rect x="145" y="1" width="3" height="1" fill="#a3a8b4"/><rect x="146" y="0" width="1" height="1" fill="#8c919d"/><rect x="150" y="1" width="3" height="1" fill="#a3a8b4"/><rect x="151" y="0" width="1" height="1" fill="#8c919d"/><rect x="155" y="1" width="3" height="1" fill="#a3a8b4"/><rect x="156" y="0" width="1" height="1" fill="#8c919d"/><rect x="160" y="1" width="3" height="1" fill="#a3a8b4"/><rect x="161" y="0" width="1" height="1" fill="#8c919d"/><rect x="165" y="1" width="3" height="1" fill="#a3a8b4"/><rect x="166" y="0" width="1" height="1" fill="#8c919d"/><rect x="170" y="1" width="3" height="1" fill="#a3a8b4"/><rect x="171" y="0" width="1" height="1" fill="#8c919d"/><rect x="175" y="1" width="3" height="1" fill="#a3a8b4"/><rect x="176" y="0" width="1" height="1" fill="#8c919d"/><rect x="180" y="1" width="3" height="1" fill="#a3a8b4"/><rect x="181" y="0" width="1" height="1" fill="#8c919d"/><rect x="185" y="1" width="3" height="1" fill="#a3a8b4"/><rect x="186" y="0" width="1" height="1" fill="#8c919d"/><rect x="190" y="1" width="3" height="1" fill="#a3a8b4"/><rect x="191" y="0" width="1" height="1" fill="#8c919d"/><rect x="195" y="1" width="3" height="1" fill="#a3a8b4"/><rect x="196" y="0" width="1" height="1" fill="#8c919d"/><rect x="200" y="1" width="3" height="1" fill="#a3a8b4"/><rect x="201" y="0" width="1" height="1" fill="#8c919d"/><rect x="205" y="1" width="3" height="1" fill="#a3a8b4"/><rect x="206" y="0" width="1" height="1" fill="#8c919d"/><rect x="210" y="1" width="3" height="1" fill="#a3a8b4"/><rect x="211" y="0" width="1" height="1" fill="#8c919d"/><rect x="215" y="1" width="3" height="1" fill="#a3a8b4"/><rect x="216" y="0" width="1" height="1" fill="#8c919d"/><rect x="220" y="1" width="3" height="1" fill="#a3a8b4"/><rect x="221" y="0" width="1" height="1" fill="#8c919d"/><rect x="225" y="1" width="3" height="1" fill="#a3a8b4"/><rect x="226" y="0" width="1" height="1" fill="#8c919d"/><rect x="230" y="1" width="3" height="1" fill="#a3a8b4"/><rect x="231" y="0" width="1" height="1" fill="#8c919d"/><rect x="235" y="1" width="3" height="1" fill="#a3a8b4"/><rect x="236" y="0" width="1" height="1" fill="#8c919d"/><rect x="240" y="1" width="3" height="1" fill="#a3a8b4"/><rect x="241" y="0" width="1" height="1" fill="#8c919d"/><rect x="245" y="1" width="3" height="1" fill="#a3a8b4"/><rect x="246" y="0" width="1" height="1" fill="#8c919d"/><rect x="250" y="1" width="3" height="1" fill="#a3a8b4"/><rect x="251" y="0" width="1" height="1" fill="#8c919d"/><rect x="255" y="1" width="3" height="1" fill="#a3a8b4"/><rect x="256" y="0" width="1" height="1" fill="#8c919d"/><rect x="260" y="1" width="3" height="1" fill="#a3a8b4"/><rect x="261" y="0" width="1" height="1" fill="#8c919d"/><rect x="265" y="1" width="3" height="1" fill="#a3a8b4"/><rect x="266" y="0" width="1" height="1" fill="#8c919d"/><rect x="270" y="1" width="3" height="1" fill="#a3a8b4"/><rect x="271" y="0" width="1" height="1" fill="#8c919d"/><rect x="275" y="1" width="3" height="1" fill="#a3a8b4"/><rect x="276" y="0" width="1" height="1" fill="#8c919d"/><rect x="280" y="1" width="3" height="1" fill="#a3a8b4"/><rect x="281" y="0" width="1" height="1" fill="#8c919d"/><rect x="285" y="1" width="3" height="1" fill="#a3a8b4"/><rect x="286" y="0" width="1" height="1" fill="#8c919d"/><rect x="290" y="1" width="3" height="1" fill="#a3a8b4"/><rect x="291" y="0" width="1" height="1" fill="#8c919d"/><rect x="295" y="1" width="3" height="1" fill="#a3a8b4"/><rect x="296" y="0" width="1" height="1" fill="#8c919d"/><rect x="300" y="1" width="3" height="1" fill="#a3a8b4"/><rect x="301" y="0" width="1" height="1" fill="#8c919d"/><rect x="305" y="1" width="3" height="1" fill="#a3a8b4"/><rect x="306" y="0" width="1" height="1" fill="#8c919d"/><rect x="310" y="1" width="3" height="1" fill="#a3a8b4"/><rect x="311" y="0" width="1" height="1" fill="#8c919d"/><rect x="315" y="1" width="3" height="1" fill="#a3a8b4"/><rect x="316" y="0" width="1" height="1" fill="#8c919d"/><rect x="320" y="1" width="3" height="1" fill="#a3a8b4"/><rect x="321" y="0" width="1" height="1" fill="#8c919d"/><rect x="325" y="1" width="3" height="1" fill="#a3a8b4"/><rect x="326" y="0" width="1" height="1" fill="#8c919d"/><rect x="330" y="1" width="3" height="1" fill="#a3a8b4"/><rect x="331" y="0" width="1" height="1" fill="#8c919d"/><rect x="335" y="1" width="3" height="1" fill="#a3a8b4"/><rect x="336" y="0" width="1" height="1" fill="#8c919d"/><rect x="340" y="1" width="3" height="1" fill="#a3a8b4"/><rect x="341" y="0" width="1" height="1" fill="#8c919d"/><rect x="345" y="1" width="3" height="1" fill="#a3a8b4"/><rect x="346" y="0" width="1" height="1" fill="#8c919d"/><rect x="350" y="1" width="3" height="1" fill="#a3a8b4"/><rect x="351" y="0" width="1" height="1" fill="#8c919d"/><rect x="355" y="1" width="3" height="1" fill="#a3a8b4"/><rect x="356" y="0" width="1" height="1" fill="#8c919d"/><rect x="360" y="1" width="3" height="1" fill="#a3a8b4"/><rect x="361" y="0" width="1" height="1" fill="#8c919d"/><rect x="365" y="1" width="3" height="1" fill="#a3a8b4"/><rect x="366" y="0" width="1" height="1" fill="#8c919d"/><rect x="370" y="1" width="3" height="1" fill="#a3a8b4"/><rect x="371" y="0" width="1" height="1" fill="#8c919d"/><rect x="375" y="1" width="3" height="1" fill="#a3a8b4"/><rect x="376" y="0" width="1" height="1" fill="#8c919d"/><rect x="380" y="1" width="3" height="1" fill="#a3a8b4"/><rect x="381" y="0" width="1" height="1" fill="#8c919d"/><rect x="385" y="1" width="3" height="1" fill="#a3a8b4"/><rect x="386" y="0" width="1" height="1" fill="#8c919d"/><rect x="390" y="1" width="3" height="1" fill="#a3a8b4"/><rect x="391" y="0" width="1" height="1" fill="#8c919d"/><rect x="395" y="1" width="3" height="1" fill="#a3a8b4"/><rect x="396" y="0" width="1" height="1" fill="#8c919d"/><rect x="400" y="1" width="3" height="1" fill="#a3a8b4"/><rect x="401" y="0" width="1" height="1" fill="#8c919d"/><rect x="405" y="1" width="3" height="1" fill="#a3a8b4"/><rect x="406" y="0" width="1" height="1" fill="#8c919d"/><rect x="410" y="1" width="3" height="1" fill="#a3a8b4"/><rect x="411" y="0" width="1" height="1" fill="#8c919d"/><rect x="415" y="1" width="3" height="1" fill="#a3a8b4"/><rect x="416" y="0" width="1" height="1" fill="#8c919d"/><rect x="420" y="1" width="3" height="1" fill="#a3a8b4"/><rect x="421" y="0" width="1" height="1" fill="#8c919d"/></svg><div style="left:2px;top:396px;width:1275px;height:650px;background:#3b3f4a;"></div><div style="left:2px;top:398px;width:981px;height:24px;background:linear-gradient(#616b84,#55607a 40%,#4a5266);border:1px solid #70778a;border-bottom:none;border-radius:3px 3px 0 0;"></div><div class="t" style="left:3px;top:403px;font-size:15px;color:#f4f6fa;transform:scaleX(1.12);transform-origin:0 0">TicTacShutUp_studio_</div><div style="left:183px;top:400px;width:199px;height:19px;background:linear-gradient(#9ca1b2,#8a8fa0);border:1px solid #111318;border-radius:2px;box-shadow:inset 1px 1px 0 #b5b9c6;"></div><div class="t" style="left:194px;top:405px;font-size:9px;font-weight:bold;color:#111">SIZE</div><div style="left:219px;top:404px;width:32px;height:11px;background:repeating-linear-gradient(90deg,#6aa8ee 0,#6aa8ee 7px,#8fc0f8 7px,#8fc0f8 8px);"></div><div class="t" style="left:219px;top:403px;width:32px;text-align:right;font-family:'Liberation Sans',sans-serif;font-size:13px;color:#073a86;letter-spacing:0px">8</div><div style="left:254px;top:403px;width:13px;height:12px;background:linear-gradient(#f0f0f4,#b8bbc6);border:1px solid #111318;border-radius:1px;"></div><svg style="position:absolute;left:0;top:0;overflow:visible" width="1" height="1"><path d="M256.5 407.0h8l-4 4z" fill="#111"/></svg><div class="t" style="left:284px;top:405px;font-size:9px;font-weight:bold;color:#111">RES.</div><div style="left:306px;top:404px;width:56px;height:11px;background:repeating-linear-gradient(90deg,#6aa8ee 0,#6aa8ee 7px,#8fc0f8 7px,#8fc0f8 8px);"></div><div class="t" style="left:306px;top:403px;width:56px;text-align:right;font-family:'Liberation Sans',sans-serif;font-size:13px;color:#073a86;letter-spacing:0px">32</div><div style="left:365px;top:403px;width:13px;height:12px;background:linear-gradient(#f0f0f4,#b8bbc6);border:1px solid #111318;border-radius:1px;"></div><svg style="position:absolute;left:0;top:0;overflow:visible" width="1" height="1"><path d="M367.5 407.0h8l-4 4z" fill="#111"/></svg><div style="left:383px;top:400px;width:157px;height:19px;background:linear-gradient(#9ca1b2,#8a8fa0);border:1px solid #111318;border-radius:2px;box-shadow:inset 1px 1px 0 #b5b9c6;"></div><div class="t" style="left:389px;top:405px;font-size:9px;font-weight:bold;color:#111">HEAR</div><div style="left:417px;top:403px;width:14px;height:12px;background:linear-gradient(#c6e0ff,#79b2f8);border:1px solid #111318;"><svg style="position:absolute;left:0;top:0" width="14" height="12"><path d="M3 4h2l3-2v8l-3-2H3z" fill="#111"/><path d="M10 3.5v5" stroke="#111"/></svg></div><div class="t" style="left:439px;top:405px;font-size:9px;font-weight:bold;color:#111">QUANT</div><div style="left:473px;top:403px;width:14px;height:12px;background:linear-gradient(#c6e0ff,#79b2f8);border:1px solid #111318;"><svg style="position:absolute;left:0;top:0" width="14" height="12"><path d="M2.5 2.5h8v6h-8zM2.5 5.5h8M5.5 2.5v6M8 2.5v6" stroke="#111" fill="none" stroke-width="1"/></svg></div><div class="t" style="left:491px;top:405px;font-size:9px;font-weight:bold;color:#111">INPUT</div><div style="left:521px;top:403px;width:15px;height:12px;background:linear-gradient(#f0f0f4,#b8bbc6);border:1px solid #111318;"><svg style="position:absolute;left:0;top:0" width="15" height="12"><rect x="3" y="3" width="3" height="4" fill="#111"/><rect x="8" y="3" width="3" height="4" fill="#111"/></svg></div><div style="left:183px;top:422px;width:784px;height:25px;background:#b0b0aa;border-top:2px solid #f4f4f0;border-bottom:1px solid #f4f4f0;"></div><div class="t" style="left:183px;top:427px;width:40px;text-align:center;font-size:14px;color:#7e7e7a">1</div><div class="t" style="left:327px;top:427px;width:40px;text-align:center;font-size:14px;color:#7e7e7a">2</div><div class="t" style="left:471px;top:427px;width:40px;text-align:center;font-size:14px;color:#7e7e7a">3</div><div class="t" style="left:615px;top:427px;width:40px;text-align:center;font-size:14px;color:#7e7e7a">4</div><div class="t" style="left:759px;top:427px;width:40px;text-align:center;font-size:14px;color:#7e7e7a">5</div><div class="t" style="left:903px;top:427px;width:40px;text-align:center;font-size:14px;color:#7e7e7a">6</div><div class="t" style="left:2px;top:427px;font-size:15px;color:#f0f2f6;transform:scaleX(1.12);transform-origin:0 0">Pattern 1</div><div style="left:2px;top:447px;width:181px;height:479px;overflow:hidden"><div style="left:0;top:0px;width:181px;height:20px;background:linear-gradient(90deg,#8c92a8 0%,#a9aec0 25%,#c2c6d6 45%,#b0b5c6 70%,#8e93a6 100%)"></div><div style="left:0;top:20px;width:181px;height:1px;background:#14161b"></div><div class="t" style="left:10px;top:4px;font-size:14px;color:#f8f8fa;transform:scaleX(1.22);transform-origin:0 0">35kick</div><div style="left:145px;top:5px;width:17px;height:12px;background:linear-gradient(#e6e7ec,#a3a7b2);border:1px solid #101216;border-radius:1px"><div class="t" style="left:4px;top:2px;font-size:7px;font-weight:bold;color:#111">M</div></div><div style="left:164px;top:5px;width:17px;height:12px;background:linear-gradient(#e6e7ec,#a3a7b2);border:1px solid #101216;border-radius:1px"><div class="t" style="left:4px;top:2px;font-size:7px;font-weight:bold;color:#111">S</div></div><div style="left:0;top:21px;width:181px;height:20px;background:linear-gradient(90deg,#8c92a8 0%,#a9aec0 25%,#c2c6d6 45%,#b0b5c6 70%,#8e93a6 100%)"></div><div style="left:0;top:41px;width:181px;height:1px;background:#14161b"></div><div class="t" style="left:10px;top:25px;font-size:14px;color:#f8f8fa;transform:scaleX(1.22);transform-origin:0 0">36kick_light</div><div style="left:145px;top:26px;width:17px;height:12px;background:linear-gradient(#e6e7ec,#a3a7b2);border:1px solid #101216;border-radius:1px"><div class="t" style="left:4px;top:2px;font-size:7px;font-weight:bold;color:#111">M</div></div><div style="left:164px;top:26px;width:17px;height:12px;background:linear-gradient(#e6e7ec,#a3a7b2);border:1px solid #101216;border-radius:1px"><div class="t" style="left:4px;top:2px;font-size:7px;font-weight:bold;color:#111">S</div></div><div style="left:0;top:42px;width:181px;height:20px;background:linear-gradient(90deg,#8c92a8 0%,#a9aec0 25%,#c2c6d6 45%,#b0b5c6 70%,#8e93a6 100%)"></div><div style="left:0;top:62px;width:181px;height:1px;background:#14161b"></div><div class="t" style="left:10px;top:46px;font-size:14px;color:#f8f8fa;transform:scaleX(1.22);transform-origin:0 0">37rim</div><div style="left:145px;top:47px;width:17px;height:12px;background:linear-gradient(#e6e7ec,#a3a7b2);border:1px solid #101216;border-radius:1px"><div class="t" style="left:4px;top:2px;font-size:7px;font-weight:bold;color:#111">M</div></div><div style="left:164px;top:47px;width:17px;height:12px;background:linear-gradient(#e6e7ec,#a3a7b2);border:1px solid #101216;border-radius:1px"><div class="t" style="left:4px;top:2px;font-size:7px;font-weight:bold;color:#111">S</div></div><div style="left:0;top:63px;width:181px;height:20px;background:linear-gradient(90deg,#8c92a8 0%,#a9aec0 25%,#c2c6d6 45%,#b0b5c6 70%,#8e93a6 100%)"></div><div style="left:0;top:83px;width:181px;height:1px;background:#14161b"></div><div class="t" style="left:10px;top:67px;font-size:14px;color:#f8f8fa;transform:scaleX(1.22);transform-origin:0 0">38snare</div><div style="left:145px;top:68px;width:17px;height:12px;background:linear-gradient(#e6e7ec,#a3a7b2);border:1px solid #101216;border-radius:1px"><div class="t" style="left:4px;top:2px;font-size:7px;font-weight:bold;color:#111">M</div></div><div style="left:164px;top:68px;width:17px;height:12px;background:linear-gradient(#e6e7ec,#a3a7b2);border:1px solid #101216;border-radius:1px"><div class="t" style="left:4px;top:2px;font-size:7px;font-weight:bold;color:#111">S</div></div><div style="left:0;top:84px;width:181px;height:20px;background:linear-gradient(90deg,#8c92a8 0%,#a9aec0 25%,#c2c6d6 45%,#b0b5c6 70%,#8e93a6 100%)"></div><div style="left:0;top:104px;width:181px;height:1px;background:#14161b"></div><div class="t" style="left:10px;top:88px;font-size:14px;color:#f8f8fa;transform:scaleX(1.22);transform-origin:0 0">40snare</div><div style="left:145px;top:89px;width:17px;height:12px;background:linear-gradient(#e6e7ec,#a3a7b2);border:1px solid #101216;border-radius:1px"><div class="t" style="left:4px;top:2px;font-size:7px;font-weight:bold;color:#111">M</div></div><div style="left:164px;top:89px;width:17px;height:12px;background:linear-gradient(#e6e7ec,#a3a7b2);border:1px solid #101216;border-radius:1px"><div class="t" style="left:4px;top:2px;font-size:7px;font-weight:bold;color:#111">S</div></div><div style="left:0;top:105px;width:181px;height:20px;background:linear-gradient(90deg,#cfcfc2,#dcdcd0 50%,#d0d0c4)"></div><div style="left:0;top:125px;width:181px;height:1px;background:#14161b"></div><div class="t" style="left:10px;top:109px;font-size:14px;color:#f8f8fa;transform:scaleX(1.22);transform-origin:0 0">42hat_closed</div><div style="left:145px;top:110px;width:17px;height:12px;background:linear-gradient(#e6e7ec,#a3a7b2);border:1px solid #101216;border-radius:1px"><div class="t" style="left:4px;top:2px;font-size:7px;font-weight:bold;color:#111">M</div></div><div style="left:164px;top:110px;width:17px;height:12px;background:linear-gradient(#e6e7ec,#a3a7b2);border:1px solid #101216;border-radius:1px"><div class="t" style="left:4px;top:2px;font-size:7px;font-weight:bold;color:#111">S</div></div><div style="left:0;top:126px;width:181px;height:20px;background:linear-gradient(90deg,#8c92a8 0%,#a9aec0 25%,#c2c6d6 45%,#b0b5c6 70%,#8e93a6 100%)"></div><div style="left:0;top:146px;width:181px;height:1px;background:#14161b"></div><div class="t" style="left:10px;top:130px;font-size:14px;color:#f8f8fa;transform:scaleX(1.22);transform-origin:0 0">43tom_lowest</div><div style="left:145px;top:131px;width:17px;height:12px;background:linear-gradient(#e6e7ec,#a3a7b2);border:1px solid #101216;border-radius:1px"><div class="t" style="left:4px;top:2px;font-size:7px;font-weight:bold;color:#111">M</div></div><div style="left:164px;top:131px;width:17px;height:12px;background:linear-gradient(#e6e7ec,#a3a7b2);border:1px solid #101216;border-radius:1px"><div class="t" style="left:4px;top:2px;font-size:7px;font-weight:bold;color:#111">S</div></div><div style="left:0;top:147px;width:181px;height:20px;background:linear-gradient(90deg,#8c92a8 0%,#a9aec0 25%,#c2c6d6 45%,#b0b5c6 70%,#8e93a6 100%)"></div><div style="left:0;top:167px;width:181px;height:1px;background:#14161b"></div><div class="t" style="left:10px;top:151px;font-size:14px;color:#f8f8fa;transform:scaleX(1.22);transform-origin:0 0">44hat_pedal</div><div style="left:145px;top:152px;width:17px;height:12px;background:linear-gradient(#e6e7ec,#a3a7b2);border:1px solid #101216;border-radius:1px"><div class="t" style="left:4px;top:2px;font-size:7px;font-weight:bold;color:#111">M</div></div><div style="left:164px;top:152px;width:17px;height:12px;background:linear-gradient(#e6e7ec,#a3a7b2);border:1px solid #101216;border-radius:1px"><div class="t" style="left:4px;top:2px;font-size:7px;font-weight:bold;color:#111">S</div></div><div style="left:0;top:168px;width:181px;height:20px;background:linear-gradient(90deg,#8c92a8 0%,#a9aec0 25%,#c2c6d6 45%,#b0b5c6 70%,#8e93a6 100%)"></div><div style="left:0;top:188px;width:181px;height:1px;background:#14161b"></div><div class="t" style="left:10px;top:172px;font-size:14px;color:#f8f8fa;transform:scaleX(1.22);transform-origin:0 0">45tom_low-light</div><div style="left:145px;top:173px;width:17px;height:12px;background:linear-gradient(#e6e7ec,#a3a7b2);border:1px solid #101216;border-radius:1px"><div class="t" style="left:4px;top:2px;font-size:7px;font-weight:bold;color:#111">M</div></div><div style="left:164px;top:173px;width:17px;height:12px;background:linear-gradient(#e6e7ec,#a3a7b2);border:1px solid #101216;border-radius:1px"><div class="t" style="left:4px;top:2px;font-size:7px;font-weight:bold;color:#111">S</div></div><div style="left:0;top:189px;width:181px;height:20px;background:linear-gradient(90deg,#8c92a8 0%,#a9aec0 25%,#c2c6d6 45%,#b0b5c6 70%,#8e93a6 100%)"></div><div style="left:0;top:209px;width:181px;height:1px;background:#14161b"></div><div class="t" style="left:10px;top:193px;font-size:14px;color:#f8f8fa;transform:scaleX(1.22);transform-origin:0 0">46hat_open</div><div style="left:145px;top:194px;width:17px;height:12px;background:linear-gradient(#e6e7ec,#a3a7b2);border:1px solid #101216;border-radius:1px"><div class="t" style="left:4px;top:2px;font-size:7px;font-weight:bold;color:#111">M</div></div><div style="left:164px;top:194px;width:17px;height:12px;background:linear-gradient(#e6e7ec,#a3a7b2);border:1px solid #101216;border-radius:1px"><div class="t" style="left:4px;top:2px;font-size:7px;font-weight:bold;color:#111">S</div></div><div style="left:0;top:210px;width:181px;height:20px;background:linear-gradient(90deg,#8c92a8 0%,#a9aec0 25%,#c2c6d6 45%,#b0b5c6 70%,#8e93a6 100%)"></div><div style="left:0;top:230px;width:181px;height:1px;background:#14161b"></div><div class="t" style="left:10px;top:214px;font-size:14px;color:#f8f8fa;transform:scaleX(1.22);transform-origin:0 0">49crash_cymbal</div><div style="left:145px;top:215px;width:17px;height:12px;background:linear-gradient(#e6e7ec,#a3a7b2);border:1px solid #101216;border-radius:1px"><div class="t" style="left:4px;top:2px;font-size:7px;font-weight:bold;color:#111">M</div></div><div style="left:164px;top:215px;width:17px;height:12px;background:linear-gradient(#e6e7ec,#a3a7b2);border:1px solid #101216;border-radius:1px"><div class="t" style="left:4px;top:2px;font-size:7px;font-weight:bold;color:#111">S</div></div><div style="left:0;top:231px;width:181px;height:20px;background:linear-gradient(90deg,#8c92a8 0%,#a9aec0 25%,#c2c6d6 45%,#b0b5c6 70%,#8e93a6 100%)"></div><div style="left:0;top:251px;width:181px;height:1px;background:#14161b"></div><div class="t" style="left:10px;top:235px;font-size:14px;color:#f8f8fa;transform:scaleX(1.22);transform-origin:0 0">50tom_highest</div><div style="left:145px;top:236px;width:17px;height:12px;background:linear-gradient(#e6e7ec,#a3a7b2);border:1px solid #101216;border-radius:1px"><div class="t" style="left:4px;top:2px;font-size:7px;font-weight:bold;color:#111">M</div></div><div style="left:164px;top:236px;width:17px;height:12px;background:linear-gradient(#e6e7ec,#a3a7b2);border:1px solid #101216;border-radius:1px"><div class="t" style="left:4px;top:2px;font-size:7px;font-weight:bold;color:#111">S</div></div><div style="left:0;top:252px;width:181px;height:20px;background:linear-gradient(90deg,#8c92a8 0%,#a9aec0 25%,#c2c6d6 45%,#b0b5c6 70%,#8e93a6 100%)"></div><div style="left:0;top:272px;width:181px;height:1px;background:#14161b"></div><div class="t" style="left:10px;top:256px;font-size:14px;color:#f8f8fa;transform:scaleX(1.22);transform-origin:0 0">51ride</div><div style="left:145px;top:257px;width:17px;height:12px;background:linear-gradient(#e6e7ec,#a3a7b2);border:1px solid #101216;border-radius:1px"><div class="t" style="left:4px;top:2px;font-size:7px;font-weight:bold;color:#111">M</div></div><div style="left:164px;top:257px;width:17px;height:12px;background:linear-gradient(#e6e7ec,#a3a7b2);border:1px solid #101216;border-radius:1px"><div class="t" style="left:4px;top:2px;font-size:7px;font-weight:bold;color:#111">S</div></div><div style="left:0;top:273px;width:181px;height:20px;background:linear-gradient(90deg,#8c92a8 0%,#a9aec0 25%,#c2c6d6 45%,#b0b5c6 70%,#8e93a6 100%)"></div><div style="left:0;top:293px;width:181px;height:1px;background:#14161b"></div><div class="t" style="left:10px;top:277px;font-size:14px;color:#f8f8fa;transform:scaleX(1.22);transform-origin:0 0">52_open_hat</div><div style="left:145px;top:278px;width:17px;height:12px;background:linear-gradient(#e6e7ec,#a3a7b2);border:1px solid #101216;border-radius:1px"><div class="t" style="left:4px;top:2px;font-size:7px;font-weight:bold;color:#111">M</div></div><div style="left:164px;top:278px;width:17px;height:12px;background:linear-gradient(#e6e7ec,#a3a7b2);border:1px solid #101216;border-radius:1px"><div class="t" style="left:4px;top:2px;font-size:7px;font-weight:bold;color:#111">S</div></div><div style="left:0;top:294px;width:181px;height:20px;background:linear-gradient(90deg,#8c92a8 0%,#a9aec0 25%,#c2c6d6 45%,#b0b5c6 70%,#8e93a6 100%)"></div><div style="left:0;top:314px;width:181px;height:1px;background:#14161b"></div><div class="t" style="left:10px;top:298px;font-size:14px;color:#f8f8fa;transform:scaleX(1.22);transform-origin:0 0">53ridebell</div><div style="left:145px;top:299px;width:17px;height:12px;background:linear-gradient(#e6e7ec,#a3a7b2);border:1px solid #101216;border-radius:1px"><div class="t" style="left:4px;top:2px;font-size:7px;font-weight:bold;color:#111">M</div></div><div style="left:164px;top:299px;width:17px;height:12px;background:linear-gradient(#e6e7ec,#a3a7b2);border:1px solid #101216;border-radius:1px"><div class="t" style="left:4px;top:2px;font-size:7px;font-weight:bold;color:#111">S</div></div><div style="left:0;top:315px;width:181px;height:20px;background:linear-gradient(90deg,#8c92a8 0%,#a9aec0 25%,#c2c6d6 45%,#b0b5c6 70%,#8e93a6 100%)"></div><div style="left:0;top:335px;width:181px;height:1px;background:#14161b"></div><div class="t" style="left:10px;top:319px;font-size:14px;color:#f8f8fa;transform:scaleX(1.22);transform-origin:0 0">55splash</div><div style="left:145px;top:320px;width:17px;height:12px;background:linear-gradient(#e6e7ec,#a3a7b2);border:1px solid #101216;border-radius:1px"><div class="t" style="left:4px;top:2px;font-size:7px;font-weight:bold;color:#111">M</div></div><div style="left:164px;top:320px;width:17px;height:12px;background:linear-gradient(#e6e7ec,#a3a7b2);border:1px solid #101216;border-radius:1px"><div class="t" style="left:4px;top:2px;font-size:7px;font-weight:bold;color:#111">S</div></div><div style="left:0;top:336px;width:181px;height:20px;background:linear-gradient(90deg,#8c92a8 0%,#a9aec0 25%,#c2c6d6 45%,#b0b5c6 70%,#8e93a6 100%)"></div><div style="left:0;top:356px;width:181px;height:1px;background:#14161b"></div><div class="t" style="left:10px;top:340px;font-size:14px;color:#f8f8fa;transform:scaleX(1.22);transform-origin:0 0">59ride2</div><div style="left:145px;top:341px;width:17px;height:12px;background:linear-gradient(#e6e7ec,#a3a7b2);border:1px solid #101216;border-radius:1px"><div class="t" style="left:4px;top:2px;font-size:7px;font-weight:bold;color:#111">M</div></div><div style="left:164px;top:341px;width:17px;height:12px;background:linear-gradient(#e6e7ec,#a3a7b2);border:1px solid #101216;border-radius:1px"><div class="t" style="left:4px;top:2px;font-size:7px;font-weight:bold;color:#111">S</div></div><div style="left:0;top:357px;width:181px;height:20px;background:linear-gradient(90deg,#8c92a8 0%,#a9aec0 25%,#c2c6d6 45%,#b0b5c6 70%,#8e93a6 100%)"></div><div style="left:0;top:377px;width:181px;height:1px;background:#14161b"></div><div class="t" style="left:10px;top:361px;font-size:14px;color:#f8f8fa;transform:scaleX(1.22);transform-origin:0 0">63conga_high</div><div style="left:145px;top:362px;width:17px;height:12px;background:linear-gradient(#e6e7ec,#a3a7b2);border:1px solid #101216;border-radius:1px"><div class="t" style="left:4px;top:2px;font-size:7px;font-weight:bold;color:#111">M</div></div><div style="left:164px;top:362px;width:17px;height:12px;background:linear-gradient(#e6e7ec,#a3a7b2);border:1px solid #101216;border-radius:1px"><div class="t" style="left:4px;top:2px;font-size:7px;font-weight:bold;color:#111">S</div></div><div style="left:0;top:378px;width:181px;height:20px;background:linear-gradient(90deg,#8c92a8 0%,#a9aec0 25%,#c2c6d6 45%,#b0b5c6 70%,#8e93a6 100%)"></div><div style="left:0;top:398px;width:181px;height:1px;background:#14161b"></div><div class="t" style="left:10px;top:382px;font-size:14px;color:#f8f8fa;transform:scaleX(1.22);transform-origin:0 0">64conga_low</div><div style="left:145px;top:383px;width:17px;height:12px;background:linear-gradient(#e6e7ec,#a3a7b2);border:1px solid #101216;border-radius:1px"><div class="t" style="left:4px;top:2px;font-size:7px;font-weight:bold;color:#111">M</div></div><div style="left:164px;top:383px;width:17px;height:12px;background:linear-gradient(#e6e7ec,#a3a7b2);border:1px solid #101216;border-radius:1px"><div class="t" style="left:4px;top:2px;font-size:7px;font-weight:bold;color:#111">S</div></div><div style="left:0;top:399px;width:181px;height:20px;background:linear-gradient(90deg,#8c92a8 0%,#a9aec0 25%,#c2c6d6 45%,#b0b5c6 70%,#8e93a6 100%)"></div><div style="left:0;top:419px;width:181px;height:1px;background:#14161b"></div><div class="t" style="left:10px;top:403px;font-size:14px;color:#f8f8fa;transform:scaleX(1.22);transform-origin:0 0">73_snare-roll-short</div><div style="left:145px;top:404px;width:17px;height:12px;background:linear-gradient(#e6e7ec,#a3a7b2);border:1px solid #101216;border-radius:1px"><div class="t" style="left:4px;top:2px;font-size:7px;font-weight:bold;color:#111">M</div></div><div style="left:164px;top:404px;width:17px;height:12px;background:linear-gradient(#e6e7ec,#a3a7b2);border:1px solid #101216;border-radius:1px"><div class="t" style="left:4px;top:2px;font-size:7px;font-weight:bold;color:#111">S</div></div><div style="left:0;top:420px;width:181px;height:20px;background:linear-gradient(90deg,#8c92a8 0%,#a9aec0 25%,#c2c6d6 45%,#b0b5c6 70%,#8e93a6 100%)"></div><div style="left:0;top:440px;width:181px;height:1px;background:#14161b"></div><div class="t" style="left:10px;top:424px;font-size:14px;color:#f8f8fa;transform:scaleX(1.22);transform-origin:0 0">74_snare-roll</div><div style="left:145px;top:425px;width:17px;height:12px;background:linear-gradient(#e6e7ec,#a3a7b2);border:1px solid #101216;border-radius:1px"><div class="t" style="left:4px;top:2px;font-size:7px;font-weight:bold;color:#111">M</div></div><div style="left:164px;top:425px;width:17px;height:12px;background:linear-gradient(#e6e7ec,#a3a7b2);border:1px solid #101216;border-radius:1px"><div class="t" style="left:4px;top:2px;font-size:7px;font-weight:bold;color:#111">S</div></div><div style="left:0;top:441px;width:181px;height:20px;background:linear-gradient(90deg,#8c92a8 0%,#a9aec0 25%,#c2c6d6 45%,#b0b5c6 70%,#8e93a6 100%)"></div><div style="left:0;top:461px;width:181px;height:1px;background:#14161b"></div><div class="t" style="left:10px;top:445px;font-size:14px;color:#f8f8fa;transform:scaleX(1.22);transform-origin:0 0">75clave</div><div style="left:145px;top:446px;width:17px;height:12px;background:linear-gradient(#e6e7ec,#a3a7b2);border:1px solid #101216;border-radius:1px"><div class="t" style="left:4px;top:2px;font-size:7px;font-weight:bold;color:#111">M</div></div><div style="left:164px;top:446px;width:17px;height:12px;background:linear-gradient(#e6e7ec,#a3a7b2);border:1px solid #101216;border-radius:1px"><div class="t" style="left:4px;top:2px;font-size:7px;font-weight:bold;color:#111">S</div></div><div style="left:0;top:462px;width:181px;height:20px;background:linear-gradient(90deg,#8c92a8 0%,#a9aec0 25%,#c2c6d6 45%,#b0b5c6 70%,#8e93a6 100%)"></div><div style="left:0;top:482px;width:181px;height:1px;background:#14161b"></div><div class="t" style="left:10px;top:466px;font-size:14px;color:#f8f8fa;transform:scaleX(1.22);transform-origin:0 0">76woodblock_high</div><div style="left:145px;top:467px;width:17px;height:12px;background:linear-gradient(#e6e7ec,#a3a7b2);border:1px solid #101216;border-radius:1px"><div class="t" style="left:4px;top:2px;font-size:7px;font-weight:bold;color:#111">M</div></div><div style="left:164px;top:467px;width:17px;height:12px;background:linear-gradient(#e6e7ec,#a3a7b2);border:1px solid #101216;border-radius:1px"><div class="t" style="left:4px;top:2px;font-size:7px;font-weight:bold;color:#111">S</div></div></div><div style="left:182px;top:447px;width:1px;height:479px;background:#14161b;"></div><div style="left:183px;top:447px;width:596px;height:480px;background:#a9a9a3;overflow:hidden;"></div><div style="left:183px;top:553px;width:596px;height:20px;background:#d2d2ca;"></div><svg style="position:absolute;left:183px;top:447px;z-index:2" width="596" height="480"><rect x="0" y="21" width="596" height="1" fill="#4b4b47"/><rect x="20" y="15" width="1" height="6" fill="#4b4b47"/><rect x="38" y="15" width="1" height="6" fill="#4b4b47"/><rect x="56" y="15" width="1" height="6" fill="#4b4b47"/><rect x="74" y="15" width="1" height="6" fill="#4b4b47"/><rect x="92" y="15" width="1" height="6" fill="#4b4b47"/><rect x="110" y="15" width="1" height="6" fill="#4b4b47"/><rect x="128" y="15" width="1" height="6" fill="#4b4b47"/><rect x="146" y="15" width="1" height="6" fill="#4b4b47"/><rect x="164" y="15" width="1" height="6" fill="#4b4b47"/><rect x="182" y="15" width="1" height="6" fill="#4b4b47"/><rect x="200" y="15" width="1" height="6" fill="#4b4b47"/><rect x="218" y="15" width="1" height="6" fill="#4b4b47"/><rect x="236" y="15" width="1" height="6" fill="#4b4b47"/><rect x="254" y="15" width="1" height="6" fill="#4b4b47"/><rect x="272" y="15" width="1" height="6" fill="#4b4b47"/><rect x="290" y="15" width="1" height="6" fill="#4b4b47"/><rect x="308" y="15" width="1" height="6" fill="#4b4b47"/><rect x="326" y="15" width="1" height="6" fill="#4b4b47"/><rect x="344" y="15" width="1" height="6" fill="#4b4b47"/><rect x="362" y="15" width="1" height="6" fill="#4b4b47"/><rect x="380" y="15" width="1" height="6" fill="#4b4b47"/><rect x="398" y="15" width="1" height="6" fill="#4b4b47"/><rect x="416" y="15" width="1" height="6" fill="#4b4b47"/><rect x="434" y="15" width="1" height="6" fill="#4b4b47"/><rect x="452" y="15" width="1" height="6" fill="#4b4b47"/><rect x="470" y="15" width="1" height="6" fill="#4b4b47"/><rect x="488" y="15" width="1" height="6" fill="#4b4b47"/><rect x="506" y="15" width="1" height="6" fill="#4b4b47"/><rect x="524" y="15" width="1" height="6" fill="#4b4b47"/><rect x="542" y="15" width="1" height="6" fill="#4b4b47"/><rect x="560" y="15" width="1" height="6" fill="#4b4b47"/><rect x="578" y="15" width="1" height="6" fill="#4b4b47"/><rect x="0" y="42" width="596" height="1" fill="#4b4b47"/><rect x="20" y="36" width="1" height="6" fill="#4b4b47"/><rect x="38" y="36" width="1" height="6" fill="#4b4b47"/><rect x="56" y="36" width="1" height="6" fill="#4b4b47"/><rect x="74" y="36" width="1" height="6" fill="#4b4b47"/><rect x="92" y="36" width="1" height="6" fill="#4b4b47"/><rect x="110" y="36" width="1" height="6" fill="#4b4b47"/><rect x="128" y="36" width="1" height="6" fill="#4b4b47"/><rect x="146" y="36" width="1" height="6" fill="#4b4b47"/><rect x="164" y="36" width="1" height="6" fill="#4b4b47"/><rect x="182" y="36" width="1" height="6" fill="#4b4b47"/><rect x="200" y="36" width="1" height="6" fill="#4b4b47"/><rect x="218" y="36" width="1" height="6" fill="#4b4b47"/><rect x="236" y="36" width="1" height="6" fill="#4b4b47"/><rect x="254" y="36" width="1" height="6" fill="#4b4b47"/><rect x="272" y="36" width="1" height="6" fill="#4b4b47"/><rect x="290" y="36" width="1" height="6" fill="#4b4b47"/><rect x="308" y="36" width="1" height="6" fill="#4b4b47"/><rect x="326" y="36" width="1" height="6" fill="#4b4b47"/><rect x="344" y="36" width="1" height="6" fill="#4b4b47"/><rect x="362" y="36" width="1" height="6" fill="#4b4b47"/><rect x="380" y="36" width="1" height="6" fill="#4b4b47"/><rect x="398" y="36" width="1" height="6" fill="#4b4b47"/><rect x="416" y="36" width="1" height="6" fill="#4b4b47"/><rect x="434" y="36" width="1" height="6" fill="#4b4b47"/><rect x="452" y="36" width="1" height="6" fill="#4b4b47"/><rect x="470" y="36" width="1" height="6" fill="#4b4b47"/><rect x="488" y="36" width="1" height="6" fill="#4b4b47"/><rect x="506" y="36" width="1" height="6" fill="#4b4b47"/><rect x="524" y="36" width="1" height="6" fill="#4b4b47"/><rect x="542" y="36" width="1" height="6" fill="#4b4b47"/><rect x="560" y="36" width="1" height="6" fill="#4b4b47"/><rect x="578" y="36" width="1" height="6" fill="#4b4b47"/><rect x="0" y="63" width="596" height="1" fill="#4b4b47"/><rect x="20" y="57" width="1" height="6" fill="#4b4b47"/><rect x="38" y="57" width="1" height="6" fill="#4b4b47"/><rect x="56" y="57" width="1" height="6" fill="#4b4b47"/><rect x="74" y="57" width="1" height="6" fill="#4b4b47"/><rect x="92" y="57" width="1" height="6" fill="#4b4b47"/><rect x="110" y="57" width="1" height="6" fill="#4b4b47"/><rect x="128" y="57" width="1" height="6" fill="#4b4b47"/><rect x="146" y="57" width="1" height="6" fill="#4b4b47"/><rect x="164" y="57" width="1" height="6" fill="#4b4b47"/><rect x="182" y="57" width="1" height="6" fill="#4b4b47"/><rect x="200" y="57" width="1" height="6" fill="#4b4b47"/><rect x="218" y="57" width="1" height="6" fill="#4b4b47"/><rect x="236" y="57" width="1" height="6" fill="#4b4b47"/><rect x="254" y="57" width="1" height="6" fill="#4b4b47"/><rect x="272" y="57" width="1" height="6" fill="#4b4b47"/><rect x="290" y="57" width="1" height="6" fill="#4b4b47"/><rect x="308" y="57" width="1" height="6" fill="#4b4b47"/><rect x="326" y="57" width="1" height="6" fill="#4b4b47"/><rect x="344" y="57" width="1" height="6" fill="#4b4b47"/><rect x="362" y="57" width="1" height="6" fill="#4b4b47"/><rect x="380" y="57" width="1" height="6" fill="#4b4b47"/><rect x="398" y="57" width="1" height="6" fill="#4b4b47"/><rect x="416" y="57" width="1" height="6" fill="#4b4b47"/><rect x="434" y="57" width="1" height="6" fill="#4b4b47"/><rect x="452" y="57" width="1" height="6" fill="#4b4b47"/><rect x="470" y="57" width="1" height="6" fill="#4b4b47"/><rect x="488" y="57" width="1" height="6" fill="#4b4b47"/><rect x="506" y="57" width="1" height="6" fill="#4b4b47"/><rect x="524" y="57" width="1" height="6" fill="#4b4b47"/><rect x="542" y="57" width="1" height="6" fill="#4b4b47"/><rect x="560" y="57" width="1" height="6" fill="#4b4b47"/><rect x="578" y="57" width="1" height="6" fill="#4b4b47"/><rect x="0" y="84" width="596" height="1" fill="#4b4b47"/><rect x="20" y="78" width="1" height="6" fill="#4b4b47"/><rect x="38" y="78" width="1" height="6" fill="#4b4b47"/><rect x="56" y="78" width="1" height="6" fill="#4b4b47"/><rect x="74" y="78" width="1" height="6" fill="#4b4b47"/><rect x="92" y="78" width="1" height="6" fill="#4b4b47"/><rect x="110" y="78" width="1" height="6" fill="#4b4b47"/><rect x="128" y="78" width="1" height="6" fill="#4b4b47"/><rect x="146" y="78" width="1" height="6" fill="#4b4b47"/><rect x="164" y="78" width="1" height="6" fill="#4b4b47"/><rect x="182" y="78" width="1" height="6" fill="#4b4b47"/><rect x="200" y="78" width="1" height="6" fill="#4b4b47"/><rect x="218" y="78" width="1" height="6" fill="#4b4b47"/><rect x="236" y="78" width="1" height="6" fill="#4b4b47"/><rect x="254" y="78" width="1" height="6" fill="#4b4b47"/><rect x="272" y="78" width="1" height="6" fill="#4b4b47"/><rect x="290" y="78" width="1" height="6" fill="#4b4b47"/><rect x="308" y="78" width="1" height="6" fill="#4b4b47"/><rect x="326" y="78" width="1" height="6" fill="#4b4b47"/><rect x="344" y="78" width="1" height="6" fill="#4b4b47"/><rect x="362" y="78" width="1" height="6" fill="#4b4b47"/><rect x="380" y="78" width="1" height="6" fill="#4b4b47"/><rect x="398" y="78" width="1" height="6" fill="#4b4b47"/><rect x="416" y="78" width="1" height="6" fill="#4b4b47"/><rect x="434" y="78" width="1" height="6" fill="#4b4b47"/><rect x="452" y="78" width="1" height="6" fill="#4b4b47"/><rect x="470" y="78" width="1" height="6" fill="#4b4b47"/><rect x="488" y="78" width="1" height="6" fill="#4b4b47"/><rect x="506" y="78" width="1" height="6" fill="#4b4b47"/><rect x="524" y="78" width="1" height="6" fill="#4b4b47"/><rect x="542" y="78" width="1" height="6" fill="#4b4b47"/><rect x="560" y="78" width="1" height="6" fill="#4b4b47"/><rect x="578" y="78" width="1" height="6" fill="#4b4b47"/><rect x="0" y="105" width="596" height="1" fill="#4b4b47"/><rect x="20" y="99" width="1" height="6" fill="#4b4b47"/><rect x="38" y="99" width="1" height="6" fill="#4b4b47"/><rect x="56" y="99" width="1" height="6" fill="#4b4b47"/><rect x="74" y="99" width="1" height="6" fill="#4b4b47"/><rect x="92" y="99" width="1" height="6" fill="#4b4b47"/><rect x="110" y="99" width="1" height="6" fill="#4b4b47"/><rect x="128" y="99" width="1" height="6" fill="#4b4b47"/><rect x="146" y="99" width="1" height="6" fill="#4b4b47"/><rect x="164" y="99" width="1" height="6" fill="#4b4b47"/><rect x="182" y="99" width="1" height="6" fill="#4b4b47"/><rect x="200" y="99" width="1" height="6" fill="#4b4b47"/><rect x="218" y="99" width="1" height="6" fill="#4b4b47"/><rect x="236" y="99" width="1" height="6" fill="#4b4b47"/><rect x="254" y="99" width="1" height="6" fill="#4b4b47"/><rect x="272" y="99" width="1" height="6" fill="#4b4b47"/><rect x="290" y="99" width="1" height="6" fill="#4b4b47"/><rect x="308" y="99" width="1" height="6" fill="#4b4b47"/><rect x="326" y="99" width="1" height="6" fill="#4b4b47"/><rect x="344" y="99" width="1" height="6" fill="#4b4b47"/><rect x="362" y="99" width="1" height="6" fill="#4b4b47"/><rect x="380" y="99" width="1" height="6" fill="#4b4b47"/><rect x="398" y="99" width="1" height="6" fill="#4b4b47"/><rect x="416" y="99" width="1" height="6" fill="#4b4b47"/><rect x="434" y="99" width="1" height="6" fill="#4b4b47"/><rect x="452" y="99" width="1" height="6" fill="#4b4b47"/><rect x="470" y="99" width="1" height="6" fill="#4b4b47"/><rect x="488" y="99" width="1" height="6" fill="#4b4b47"/><rect x="506" y="99" width="1" height="6" fill="#4b4b47"/><rect x="524" y="99" width="1" height="6" fill="#4b4b47"/><rect x="542" y="99" width="1" height="6" fill="#4b4b47"/><rect x="560" y="99" width="1" height="6" fill="#4b4b47"/><rect x="578" y="99" width="1" height="6" fill="#4b4b47"/><rect x="0" y="126" width="596" height="1" fill="#4b4b47"/><rect x="20" y="120" width="1" height="6" fill="#4b4b47"/><rect x="38" y="120" width="1" height="6" fill="#4b4b47"/><rect x="56" y="120" width="1" height="6" fill="#4b4b47"/><rect x="74" y="120" width="1" height="6" fill="#4b4b47"/><rect x="92" y="120" width="1" height="6" fill="#4b4b47"/><rect x="110" y="120" width="1" height="6" fill="#4b4b47"/><rect x="128" y="120" width="1" height="6" fill="#4b4b47"/><rect x="146" y="120" width="1" height="6" fill="#4b4b47"/><rect x="164" y="120" width="1" height="6" fill="#4b4b47"/><rect x="182" y="120" width="1" height="6" fill="#4b4b47"/><rect x="200" y="120" width="1" height="6" fill="#4b4b47"/><rect x="218" y="120" width="1" height="6" fill="#4b4b47"/><rect x="236" y="120" width="1" height="6" fill="#4b4b47"/><rect x="254" y="120" width="1" height="6" fill="#4b4b47"/><rect x="272" y="120" width="1" height="6" fill="#4b4b47"/><rect x="290" y="120" width="1" height="6" fill="#4b4b47"/><rect x="308" y="120" width="1" height="6" fill="#4b4b47"/><rect x="326" y="120" width="1" height="6" fill="#4b4b47"/><rect x="344" y="120" width="1" height="6" fill="#4b4b47"/><rect x="362" y="120" width="1" height="6" fill="#4b4b47"/><rect x="380" y="120" width="1" height="6" fill="#4b4b47"/><rect x="398" y="120" width="1" height="6" fill="#4b4b47"/><rect x="416" y="120" width="1" height="6" fill="#4b4b47"/><rect x="434" y="120" width="1" height="6" fill="#4b4b47"/><rect x="452" y="120" width="1" height="6" fill="#4b4b47"/><rect x="470" y="120" width="1" height="6" fill="#4b4b47"/><rect x="488" y="120" width="1" height="6" fill="#4b4b47"/><rect x="506" y="120" width="1" height="6" fill="#4b4b47"/><rect x="524" y="120" width="1" height="6" fill="#4b4b47"/><rect x="542" y="120" width="1" height="6" fill="#4b4b47"/><rect x="560" y="120" width="1" height="6" fill="#4b4b47"/><rect x="578" y="120" width="1" height="6" fill="#4b4b47"/><rect x="0" y="147" width="596" height="1" fill="#4b4b47"/><rect x="20" y="141" width="1" height="6" fill="#4b4b47"/><rect x="38" y="141" width="1" height="6" fill="#4b4b47"/><rect x="56" y="141" width="1" height="6" fill="#4b4b47"/><rect x="74" y="141" width="1" height="6" fill="#4b4b47"/><rect x="92" y="141" width="1" height="6" fill="#4b4b47"/><rect x="110" y="141" width="1" height="6" fill="#4b4b47"/><rect x="128" y="141" width="1" height="6" fill="#4b4b47"/><rect x="146" y="141" width="1" height="6" fill="#4b4b47"/><rect x="164" y="141" width="1" height="6" fill="#4b4b47"/><rect x="182" y="141" width="1" height="6" fill="#4b4b47"/><rect x="200" y="141" width="1" height="6" fill="#4b4b47"/><rect x="218" y="141" width="1" height="6" fill="#4b4b47"/><rect x="236" y="141" width="1" height="6" fill="#4b4b47"/><rect x="254" y="141" width="1" height="6" fill="#4b4b47"/><rect x="272" y="141" width="1" height="6" fill="#4b4b47"/><rect x="290" y="141" width="1" height="6" fill="#4b4b47"/><rect x="308" y="141" width="1" height="6" fill="#4b4b47"/><rect x="326" y="141" width="1" height="6" fill="#4b4b47"/><rect x="344" y="141" width="1" height="6" fill="#4b4b47"/><rect x="362" y="141" width="1" height="6" fill="#4b4b47"/><rect x="380" y="141" width="1" height="6" fill="#4b4b47"/><rect x="398" y="141" width="1" height="6" fill="#4b4b47"/><rect x="416" y="141" width="1" height="6" fill="#4b4b47"/><rect x="434" y="141" width="1" height="6" fill="#4b4b47"/><rect x="452" y="141" width="1" height="6" fill="#4b4b47"/><rect x="470" y="141" width="1" height="6" fill="#4b4b47"/><rect x="488" y="141" width="1" height="6" fill="#4b4b47"/><rect x="506" y="141" width="1" height="6" fill="#4b4b47"/><rect x="524" y="141" width="1" height="6" fill="#4b4b47"/><rect x="542" y="141" width="1" height="6" fill="#4b4b47"/><rect x="560" y="141" width="1" height="6" fill="#4b4b47"/><rect x="578" y="141" width="1" height="6" fill="#4b4b47"/><rect x="0" y="168" width="596" height="1" fill="#4b4b47"/><rect x="20" y="162" width="1" height="6" fill="#4b4b47"/><rect x="38" y="162" width="1" height="6" fill="#4b4b47"/><rect x="56" y="162" width="1" height="6" fill="#4b4b47"/><rect x="74" y="162" width="1" height="6" fill="#4b4b47"/><rect x="92" y="162" width="1" height="6" fill="#4b4b47"/><rect x="110" y="162" width="1" height="6" fill="#4b4b47"/><rect x="128" y="162" width="1" height="6" fill="#4b4b47"/><rect x="146" y="162" width="1" height="6" fill="#4b4b47"/><rect x="164" y="162" width="1" height="6" fill="#4b4b47"/><rect x="182" y="162" width="1" height="6" fill="#4b4b47"/><rect x="200" y="162" width="1" height="6" fill="#4b4b47"/><rect x="218" y="162" width="1" height="6" fill="#4b4b47"/><rect x="236" y="162" width="1" height="6" fill="#4b4b47"/><rect x="254" y="162" width="1" height="6" fill="#4b4b47"/><rect x="272" y="162" width="1" height="6" fill="#4b4b47"/><rect x="290" y="162" width="1" height="6" fill="#4b4b47"/><rect x="308" y="162" width="1" height="6" fill="#4b4b47"/><rect x="326" y="162" width="1" height="6" fill="#4b4b47"/><rect x="344" y="162" width="1" height="6" fill="#4b4b47"/><rect x="362" y="162" width="1" height="6" fill="#4b4b47"/><rect x="380" y="162" width="1" height="6" fill="#4b4b47"/><rect x="398" y="162" width="1" height="6" fill="#4b4b47"/><rect x="416" y="162" width="1" height="6" fill="#4b4b47"/><rect x="434" y="162" width="1" height="6" fill="#4b4b47"/><rect x="452" y="162" width="1" height="6" fill="#4b4b47"/><rect x="470" y="162" width="1" height="6" fill="#4b4b47"/><rect x="488" y="162" width="1" height="6" fill="#4b4b47"/><rect x="506" y="162" width="1" height="6" fill="#4b4b47"/><rect x="524" y="162" width="1" height="6" fill="#4b4b47"/><rect x="542" y="162" width="1" height="6" fill="#4b4b47"/><rect x="560" y="162" width="1" height="6" fill="#4b4b47"/><rect x="578" y="162" width="1" height="6" fill="#4b4b47"/><rect x="0" y="189" width="596" height="1" fill="#4b4b47"/><rect x="20" y="183" width="1" height="6" fill="#4b4b47"/><rect x="38" y="183" width="1" height="6" fill="#4b4b47"/><rect x="56" y="183" width="1" height="6" fill="#4b4b47"/><rect x="74" y="183" width="1" height="6" fill="#4b4b47"/><rect x="92" y="183" width="1" height="6" fill="#4b4b47"/><rect x="110" y="183" width="1" height="6" fill="#4b4b47"/><rect x="128" y="183" width="1" height="6" fill="#4b4b47"/><rect x="146" y="183" width="1" height="6" fill="#4b4b47"/><rect x="164" y="183" width="1" height="6" fill="#4b4b47"/><rect x="182" y="183" width="1" height="6" fill="#4b4b47"/><rect x="200" y="183" width="1" height="6" fill="#4b4b47"/><rect x="218" y="183" width="1" height="6" fill="#4b4b47"/><rect x="236" y="183" width="1" height="6" fill="#4b4b47"/><rect x="254" y="183" width="1" height="6" fill="#4b4b47"/><rect x="272" y="183" width="1" height="6" fill="#4b4b47"/><rect x="290" y="183" width="1" height="6" fill="#4b4b47"/><rect x="308" y="183" width="1" height="6" fill="#4b4b47"/><rect x="326" y="183" width="1" height="6" fill="#4b4b47"/><rect x="344" y="183" width="1" height="6" fill="#4b4b47"/><rect x="362" y="183" width="1" height="6" fill="#4b4b47"/><rect x="380" y="183" width="1" height="6" fill="#4b4b47"/><rect x="398" y="183" width="1" height="6" fill="#4b4b47"/><rect x="416" y="183" width="1" height="6" fill="#4b4b47"/><rect x="434" y="183" width="1" height="6" fill="#4b4b47"/><rect x="452" y="183" width="1" height="6" fill="#4b4b47"/><rect x="470" y="183" width="1" height="6" fill="#4b4b47"/><rect x="488" y="183" width="1" height="6" fill="#4b4b47"/><rect x="506" y="183" width="1" height="6" fill="#4b4b47"/><rect x="524" y="183" width="1" height="6" fill="#4b4b47"/><rect x="542" y="183" width="1" height="6" fill="#4b4b47"/><rect x="560" y="183" width="1" height="6" fill="#4b4b47"/><rect x="578" y="183" width="1" height="6" fill="#4b4b47"/><rect x="0" y="210" width="596" height="1" fill="#4b4b47"/><rect x="20" y="204" width="1" height="6" fill="#4b4b47"/><rect x="38" y="204" width="1" height="6" fill="#4b4b47"/><rect x="56" y="204" width="1" height="6" fill="#4b4b47"/><rect x="74" y="204" width="1" height="6" fill="#4b4b47"/><rect x="92" y="204" width="1" height="6" fill="#4b4b47"/><rect x="110" y="204" width="1" height="6" fill="#4b4b47"/><rect x="128" y="204" width="1" height="6" fill="#4b4b47"/><rect x="146" y="204" width="1" height="6" fill="#4b4b47"/><rect x="164" y="204" width="1" height="6" fill="#4b4b47"/><rect x="182" y="204" width="1" height="6" fill="#4b4b47"/><rect x="200" y="204" width="1" height="6" fill="#4b4b47"/><rect x="218" y="204" width="1" height="6" fill="#4b4b47"/><rect x="236" y="204" width="1" height="6" fill="#4b4b47"/><rect x="254" y="204" width="1" height="6" fill="#4b4b47"/><rect x="272" y="204" width="1" height="6" fill="#4b4b47"/><rect x="290" y="204" width="1" height="6" fill="#4b4b47"/><rect x="308" y="204" width="1" height="6" fill="#4b4b47"/><rect x="326" y="204" width="1" height="6" fill="#4b4b47"/><rect x="344" y="204" width="1" height="6" fill="#4b4b47"/><rect x="362" y="204" width="1" height="6" fill="#4b4b47"/><rect x="380" y="204" width="1" height="6" fill="#4b4b47"/><rect x="398" y="204" width="1" height="6" fill="#4b4b47"/><rect x="416" y="204" width="1" height="6" fill="#4b4b47"/><rect x="434" y="204" width="1" height="6" fill="#4b4b47"/><rect x="452" y="204" width="1" height="6" fill="#4b4b47"/><rect x="470" y="204" width="1" height="6" fill="#4b4b47"/><rect x="488" y="204" width="1" height="6" fill="#4b4b47"/><rect x="506" y="204" width="1" height="6" fill="#4b4b47"/><rect x="524" y="204" width="1" height="6" fill="#4b4b47"/><rect x="542" y="204" width="1" height="6" fill="#4b4b47"/><rect x="560" y="204" width="1" height="6" fill="#4b4b47"/><rect x="578" y="204" width="1" height="6" fill="#4b4b47"/><rect x="0" y="231" width="596" height="1" fill="#4b4b47"/><rect x="20" y="225" width="1" height="6" fill="#4b4b47"/><rect x="38" y="225" width="1" height="6" fill="#4b4b47"/><rect x="56" y="225" width="1" height="6" fill="#4b4b47"/><rect x="74" y="225" width="1" height="6" fill="#4b4b47"/><rect x="92" y="225" width="1" height="6" fill="#4b4b47"/><rect x="110" y="225" width="1" height="6" fill="#4b4b47"/><rect x="128" y="225" width="1" height="6" fill="#4b4b47"/><rect x="146" y="225" width="1" height="6" fill="#4b4b47"/><rect x="164" y="225" width="1" height="6" fill="#4b4b47"/><rect x="182" y="225" width="1" height="6" fill="#4b4b47"/><rect x="200" y="225" width="1" height="6" fill="#4b4b47"/><rect x="218" y="225" width="1" height="6" fill="#4b4b47"/><rect x="236" y="225" width="1" height="6" fill="#4b4b47"/><rect x="254" y="225" width="1" height="6" fill="#4b4b47"/><rect x="272" y="225" width="1" height="6" fill="#4b4b47"/><rect x="290" y="225" width="1" height="6" fill="#4b4b47"/><rect x="308" y="225" width="1" height="6" fill="#4b4b47"/><rect x="326" y="225" width="1" height="6" fill="#4b4b47"/><rect x="344" y="225" width="1" height="6" fill="#4b4b47"/><rect x="362" y="225" width="1" height="6" fill="#4b4b47"/><rect x="380" y="225" width="1" height="6" fill="#4b4b47"/><rect x="398" y="225" width="1" height="6" fill="#4b4b47"/><rect x="416" y="225" width="1" height="6" fill="#4b4b47"/><rect x="434" y="225" width="1" height="6" fill="#4b4b47"/><rect x="452" y="225" width="1" height="6" fill="#4b4b47"/><rect x="470" y="225" width="1" height="6" fill="#4b4b47"/><rect x="488" y="225" width="1" height="6" fill="#4b4b47"/><rect x="506" y="225" width="1" height="6" fill="#4b4b47"/><rect x="524" y="225" width="1" height="6" fill="#4b4b47"/><rect x="542" y="225" width="1" height="6" fill="#4b4b47"/><rect x="560" y="225" width="1" height="6" fill="#4b4b47"/><rect x="578" y="225" width="1" height="6" fill="#4b4b47"/><rect x="0" y="252" width="596" height="1" fill="#4b4b47"/><rect x="20" y="246" width="1" height="6" fill="#4b4b47"/><rect x="38" y="246" width="1" height="6" fill="#4b4b47"/><rect x="56" y="246" width="1" height="6" fill="#4b4b47"/><rect x="74" y="246" width="1" height="6" fill="#4b4b47"/><rect x="92" y="246" width="1" height="6" fill="#4b4b47"/><rect x="110" y="246" width="1" height="6" fill="#4b4b47"/><rect x="128" y="246" width="1" height="6" fill="#4b4b47"/><rect x="146" y="246" width="1" height="6" fill="#4b4b47"/><rect x="164" y="246" width="1" height="6" fill="#4b4b47"/><rect x="182" y="246" width="1" height="6" fill="#4b4b47"/><rect x="200" y="246" width="1" height="6" fill="#4b4b47"/><rect x="218" y="246" width="1" height="6" fill="#4b4b47"/><rect x="236" y="246" width="1" height="6" fill="#4b4b47"/><rect x="254" y="246" width="1" height="6" fill="#4b4b47"/><rect x="272" y="246" width="1" height="6" fill="#4b4b47"/><rect x="290" y="246" width="1" height="6" fill="#4b4b47"/><rect x="308" y="246" width="1" height="6" fill="#4b4b47"/><rect x="326" y="246" width="1" height="6" fill="#4b4b47"/><rect x="344" y="246" width="1" height="6" fill="#4b4b47"/><rect x="362" y="246" width="1" height="6" fill="#4b4b47"/><rect x="380" y="246" width="1" height="6" fill="#4b4b47"/><rect x="398" y="246" width="1" height="6" fill="#4b4b47"/><rect x="416" y="246" width="1" height="6" fill="#4b4b47"/><rect x="434" y="246" width="1" height="6" fill="#4b4b47"/><rect x="452" y="246" width="1" height="6" fill="#4b4b47"/><rect x="470" y="246" width="1" height="6" fill="#4b4b47"/><rect x="488" y="246" width="1" height="6" fill="#4b4b47"/><rect x="506" y="246" width="1" height="6" fill="#4b4b47"/><rect x="524" y="246" width="1" height="6" fill="#4b4b47"/><rect x="542" y="246" width="1" height="6" fill="#4b4b47"/><rect x="560" y="246" width="1" height="6" fill="#4b4b47"/><rect x="578" y="246" width="1" height="6" fill="#4b4b47"/><rect x="0" y="273" width="596" height="1" fill="#4b4b47"/><rect x="20" y="267" width="1" height="6" fill="#4b4b47"/><rect x="38" y="267" width="1" height="6" fill="#4b4b47"/><rect x="56" y="267" width="1" height="6" fill="#4b4b47"/><rect x="74" y="267" width="1" height="6" fill="#4b4b47"/><rect x="92" y="267" width="1" height="6" fill="#4b4b47"/><rect x="110" y="267" width="1" height="6" fill="#4b4b47"/><rect x="128" y="267" width="1" height="6" fill="#4b4b47"/><rect x="146" y="267" width="1" height="6" fill="#4b4b47"/><rect x="164" y="267" width="1" height="6" fill="#4b4b47"/><rect x="182" y="267" width="1" height="6" fill="#4b4b47"/><rect x="200" y="267" width="1" height="6" fill="#4b4b47"/><rect x="218" y="267" width="1" height="6" fill="#4b4b47"/><rect x="236" y="267" width="1" height="6" fill="#4b4b47"/><rect x="254" y="267" width="1" height="6" fill="#4b4b47"/><rect x="272" y="267" width="1" height="6" fill="#4b4b47"/><rect x="290" y="267" width="1" height="6" fill="#4b4b47"/><rect x="308" y="267" width="1" height="6" fill="#4b4b47"/><rect x="326" y="267" width="1" height="6" fill="#4b4b47"/><rect x="344" y="267" width="1" height="6" fill="#4b4b47"/><rect x="362" y="267" width="1" height="6" fill="#4b4b47"/><rect x="380" y="267" width="1" height="6" fill="#4b4b47"/><rect x="398" y="267" width="1" height="6" fill="#4b4b47"/><rect x="416" y="267" width="1" height="6" fill="#4b4b47"/><rect x="434" y="267" width="1" height="6" fill="#4b4b47"/><rect x="452" y="267" width="1" height="6" fill="#4b4b47"/><rect x="470" y="267" width="1" height="6" fill="#4b4b47"/><rect x="488" y="267" width="1" height="6" fill="#4b4b47"/><rect x="506" y="267" width="1" height="6" fill="#4b4b47"/><rect x="524" y="267" width="1" height="6" fill="#4b4b47"/><rect x="542" y="267" width="1" height="6" fill="#4b4b47"/><rect x="560" y="267" width="1" height="6" fill="#4b4b47"/><rect x="578" y="267" width="1" height="6" fill="#4b4b47"/><rect x="0" y="294" width="596" height="1" fill="#4b4b47"/><rect x="20" y="288" width="1" height="6" fill="#4b4b47"/><rect x="38" y="288" width="1" height="6" fill="#4b4b47"/><rect x="56" y="288" width="1" height="6" fill="#4b4b47"/><rect x="74" y="288" width="1" height="6" fill="#4b4b47"/><rect x="92" y="288" width="1" height="6" fill="#4b4b47"/><rect x="110" y="288" width="1" height="6" fill="#4b4b47"/><rect x="128" y="288" width="1" height="6" fill="#4b4b47"/><rect x="146" y="288" width="1" height="6" fill="#4b4b47"/><rect x="164" y="288" width="1" height="6" fill="#4b4b47"/><rect x="182" y="288" width="1" height="6" fill="#4b4b47"/><rect x="200" y="288" width="1" height="6" fill="#4b4b47"/><rect x="218" y="288" width="1" height="6" fill="#4b4b47"/><rect x="236" y="288" width="1" height="6" fill="#4b4b47"/><rect x="254" y="288" width="1" height="6" fill="#4b4b47"/><rect x="272" y="288" width="1" height="6" fill="#4b4b47"/><rect x="290" y="288" width="1" height="6" fill="#4b4b47"/><rect x="308" y="288" width="1" height="6" fill="#4b4b47"/><rect x="326" y="288" width="1" height="6" fill="#4b4b47"/><rect x="344" y="288" width="1" height="6" fill="#4b4b47"/><rect x="362" y="288" width="1" height="6" fill="#4b4b47"/><rect x="380" y="288" width="1" height="6" fill="#4b4b47"/><rect x="398" y="288" width="1" height="6" fill="#4b4b47"/><rect x="416" y="288" width="1" height="6" fill="#4b4b47"/><rect x="434" y="288" width="1" height="6" fill="#4b4b47"/><rect x="452" y="288" width="1" height="6" fill="#4b4b47"/><rect x="470" y="288" width="1" height="6" fill="#4b4b47"/><rect x="488" y="288" width="1" height="6" fill="#4b4b47"/><rect x="506" y="288" width="1" height="6" fill="#4b4b47"/><rect x="524" y="288" width="1" height="6" fill="#4b4b47"/><rect x="542" y="288" width="1" height="6" fill="#4b4b47"/><rect x="560" y="288" width="1" height="6" fill="#4b4b47"/><rect x="578" y="288" width="1" height="6" fill="#4b4b47"/><rect x="0" y="315" width="596" height="1" fill="#4b4b47"/><rect x="20" y="309" width="1" height="6" fill="#4b4b47"/><rect x="38" y="309" width="1" height="6" fill="#4b4b47"/><rect x="56" y="309" width="1" height="6" fill="#4b4b47"/><rect x="74" y="309" width="1" height="6" fill="#4b4b47"/><rect x="92" y="309" width="1" height="6" fill="#4b4b47"/><rect x="110" y="309" width="1" height="6" fill="#4b4b47"/><rect x="128" y="309" width="1" height="6" fill="#4b4b47"/><rect x="146" y="309" width="1" height="6" fill="#4b4b47"/><rect x="164" y="309" width="1" height="6" fill="#4b4b47"/><rect x="182" y="309" width="1" height="6" fill="#4b4b47"/><rect x="200" y="309" width="1" height="6" fill="#4b4b47"/><rect x="218" y="309" width="1" height="6" fill="#4b4b47"/><rect x="236" y="309" width="1" height="6" fill="#4b4b47"/><rect x="254" y="309" width="1" height="6" fill="#4b4b47"/><rect x="272" y="309" width="1" height="6" fill="#4b4b47"/><rect x="290" y="309" width="1" height="6" fill="#4b4b47"/><rect x="308" y="309" width="1" height="6" fill="#4b4b47"/><rect x="326" y="309" width="1" height="6" fill="#4b4b47"/><rect x="344" y="309" width="1" height="6" fill="#4b4b47"/><rect x="362" y="309" width="1" height="6" fill="#4b4b47"/><rect x="380" y="309" width="1" height="6" fill="#4b4b47"/><rect x="398" y="309" width="1" height="6" fill="#4b4b47"/><rect x="416" y="309" width="1" height="6" fill="#4b4b47"/><rect x="434" y="309" width="1" height="6" fill="#4b4b47"/><rect x="452" y="309" width="1" height="6" fill="#4b4b47"/><rect x="470" y="309" width="1" height="6" fill="#4b4b47"/><rect x="488" y="309" width="1" height="6" fill="#4b4b47"/><rect x="506" y="309" width="1" height="6" fill="#4b4b47"/><rect x="524" y="309" width="1" height="6" fill="#4b4b47"/><rect x="542" y="309" width="1" height="6" fill="#4b4b47"/><rect x="560" y="309" width="1" height="6" fill="#4b4b47"/><rect x="578" y="309" width="1" height="6" fill="#4b4b47"/><rect x="0" y="336" width="596" height="1" fill="#4b4b47"/><rect x="20" y="330" width="1" height="6" fill="#4b4b47"/><rect x="38" y="330" width="1" height="6" fill="#4b4b47"/><rect x="56" y="330" width="1" height="6" fill="#4b4b47"/><rect x="74" y="330" width="1" height="6" fill="#4b4b47"/><rect x="92" y="330" width="1" height="6" fill="#4b4b47"/><rect x="110" y="330" width="1" height="6" fill="#4b4b47"/><rect x="128" y="330" width="1" height="6" fill="#4b4b47"/><rect x="146" y="330" width="1" height="6" fill="#4b4b47"/><rect x="164" y="330" width="1" height="6" fill="#4b4b47"/><rect x="182" y="330" width="1" height="6" fill="#4b4b47"/><rect x="200" y="330" width="1" height="6" fill="#4b4b47"/><rect x="218" y="330" width="1" height="6" fill="#4b4b47"/><rect x="236" y="330" width="1" height="6" fill="#4b4b47"/><rect x="254" y="330" width="1" height="6" fill="#4b4b47"/><rect x="272" y="330" width="1" height="6" fill="#4b4b47"/><rect x="290" y="330" width="1" height="6" fill="#4b4b47"/><rect x="308" y="330" width="1" height="6" fill="#4b4b47"/><rect x="326" y="330" width="1" height="6" fill="#4b4b47"/><rect x="344" y="330" width="1" height="6" fill="#4b4b47"/><rect x="362" y="330" width="1" height="6" fill="#4b4b47"/><rect x="380" y="330" width="1" height="6" fill="#4b4b47"/><rect x="398" y="330" width="1" height="6" fill="#4b4b47"/><rect x="416" y="330" width="1" height="6" fill="#4b4b47"/><rect x="434" y="330" width="1" height="6" fill="#4b4b47"/><rect x="452" y="330" width="1" height="6" fill="#4b4b47"/><rect x="470" y="330" width="1" height="6" fill="#4b4b47"/><rect x="488" y="330" width="1" height="6" fill="#4b4b47"/><rect x="506" y="330" width="1" height="6" fill="#4b4b47"/><rect x="524" y="330" width="1" height="6" fill="#4b4b47"/><rect x="542" y="330" width="1" height="6" fill="#4b4b47"/><rect x="560" y="330" width="1" height="6" fill="#4b4b47"/><rect x="578" y="330" width="1" height="6" fill="#4b4b47"/><rect x="0" y="357" width="596" height="1" fill="#4b4b47"/><rect x="20" y="351" width="1" height="6" fill="#4b4b47"/><rect x="38" y="351" width="1" height="6" fill="#4b4b47"/><rect x="56" y="351" width="1" height="6" fill="#4b4b47"/><rect x="74" y="351" width="1" height="6" fill="#4b4b47"/><rect x="92" y="351" width="1" height="6" fill="#4b4b47"/><rect x="110" y="351" width="1" height="6" fill="#4b4b47"/><rect x="128" y="351" width="1" height="6" fill="#4b4b47"/><rect x="146" y="351" width="1" height="6" fill="#4b4b47"/><rect x="164" y="351" width="1" height="6" fill="#4b4b47"/><rect x="182" y="351" width="1" height="6" fill="#4b4b47"/><rect x="200" y="351" width="1" height="6" fill="#4b4b47"/><rect x="218" y="351" width="1" height="6" fill="#4b4b47"/><rect x="236" y="351" width="1" height="6" fill="#4b4b47"/><rect x="254" y="351" width="1" height="6" fill="#4b4b47"/><rect x="272" y="351" width="1" height="6" fill="#4b4b47"/><rect x="290" y="351" width="1" height="6" fill="#4b4b47"/><rect x="308" y="351" width="1" height="6" fill="#4b4b47"/><rect x="326" y="351" width="1" height="6" fill="#4b4b47"/><rect x="344" y="351" width="1" height="6" fill="#4b4b47"/><rect x="362" y="351" width="1" height="6" fill="#4b4b47"/><rect x="380" y="351" width="1" height="6" fill="#4b4b47"/><rect x="398" y="351" width="1" height="6" fill="#4b4b47"/><rect x="416" y="351" width="1" height="6" fill="#4b4b47"/><rect x="434" y="351" width="1" height="6" fill="#4b4b47"/><rect x="452" y="351" width="1" height="6" fill="#4b4b47"/><rect x="470" y="351" width="1" height="6" fill="#4b4b47"/><rect x="488" y="351" width="1" height="6" fill="#4b4b47"/><rect x="506" y="351" width="1" height="6" fill="#4b4b47"/><rect x="524" y="351" width="1" height="6" fill="#4b4b47"/><rect x="542" y="351" width="1" height="6" fill="#4b4b47"/><rect x="560" y="351" width="1" height="6" fill="#4b4b47"/><rect x="578" y="351" width="1" height="6" fill="#4b4b47"/><rect x="0" y="378" width="596" height="1" fill="#4b4b47"/><rect x="20" y="372" width="1" height="6" fill="#4b4b47"/><rect x="38" y="372" width="1" height="6" fill="#4b4b47"/><rect x="56" y="372" width="1" height="6" fill="#4b4b47"/><rect x="74" y="372" width="1" height="6" fill="#4b4b47"/><rect x="92" y="372" width="1" height="6" fill="#4b4b47"/><rect x="110" y="372" width="1" height="6" fill="#4b4b47"/><rect x="128" y="372" width="1" height="6" fill="#4b4b47"/><rect x="146" y="372" width="1" height="6" fill="#4b4b47"/><rect x="164" y="372" width="1" height="6" fill="#4b4b47"/><rect x="182" y="372" width="1" height="6" fill="#4b4b47"/><rect x="200" y="372" width="1" height="6" fill="#4b4b47"/><rect x="218" y="372" width="1" height="6" fill="#4b4b47"/><rect x="236" y="372" width="1" height="6" fill="#4b4b47"/><rect x="254" y="372" width="1" height="6" fill="#4b4b47"/><rect x="272" y="372" width="1" height="6" fill="#4b4b47"/><rect x="290" y="372" width="1" height="6" fill="#4b4b47"/><rect x="308" y="372" width="1" height="6" fill="#4b4b47"/><rect x="326" y="372" width="1" height="6" fill="#4b4b47"/><rect x="344" y="372" width="1" height="6" fill="#4b4b47"/><rect x="362" y="372" width="1" height="6" fill="#4b4b47"/><rect x="380" y="372" width="1" height="6" fill="#4b4b47"/><rect x="398" y="372" width="1" height="6" fill="#4b4b47"/><rect x="416" y="372" width="1" height="6" fill="#4b4b47"/><rect x="434" y="372" width="1" height="6" fill="#4b4b47"/><rect x="452" y="372" width="1" height="6" fill="#4b4b47"/><rect x="470" y="372" width="1" height="6" fill="#4b4b47"/><rect x="488" y="372" width="1" height="6" fill="#4b4b47"/><rect x="506" y="372" width="1" height="6" fill="#4b4b47"/><rect x="524" y="372" width="1" height="6" fill="#4b4b47"/><rect x="542" y="372" width="1" height="6" fill="#4b4b47"/><rect x="560" y="372" width="1" height="6" fill="#4b4b47"/><rect x="578" y="372" width="1" height="6" fill="#4b4b47"/><rect x="0" y="399" width="596" height="1" fill="#4b4b47"/><rect x="20" y="393" width="1" height="6" fill="#4b4b47"/><rect x="38" y="393" width="1" height="6" fill="#4b4b47"/><rect x="56" y="393" width="1" height="6" fill="#4b4b47"/><rect x="74" y="393" width="1" height="6" fill="#4b4b47"/><rect x="92" y="393" width="1" height="6" fill="#4b4b47"/><rect x="110" y="393" width="1" height="6" fill="#4b4b47"/><rect x="128" y="393" width="1" height="6" fill="#4b4b47"/><rect x="146" y="393" width="1" height="6" fill="#4b4b47"/><rect x="164" y="393" width="1" height="6" fill="#4b4b47"/><rect x="182" y="393" width="1" height="6" fill="#4b4b47"/><rect x="200" y="393" width="1" height="6" fill="#4b4b47"/><rect x="218" y="393" width="1" height="6" fill="#4b4b47"/><rect x="236" y="393" width="1" height="6" fill="#4b4b47"/><rect x="254" y="393" width="1" height="6" fill="#4b4b47"/><rect x="272" y="393" width="1" height="6" fill="#4b4b47"/><rect x="290" y="393" width="1" height="6" fill="#4b4b47"/><rect x="308" y="393" width="1" height="6" fill="#4b4b47"/><rect x="326" y="393" width="1" height="6" fill="#4b4b47"/><rect x="344" y="393" width="1" height="6" fill="#4b4b47"/><rect x="362" y="393" width="1" height="6" fill="#4b4b47"/><rect x="380" y="393" width="1" height="6" fill="#4b4b47"/><rect x="398" y="393" width="1" height="6" fill="#4b4b47"/><rect x="416" y="393" width="1" height="6" fill="#4b4b47"/><rect x="434" y="393" width="1" height="6" fill="#4b4b47"/><rect x="452" y="393" width="1" height="6" fill="#4b4b47"/><rect x="470" y="393" width="1" height="6" fill="#4b4b47"/><rect x="488" y="393" width="1" height="6" fill="#4b4b47"/><rect x="506" y="393" width="1" height="6" fill="#4b4b47"/><rect x="524" y="393" width="1" height="6" fill="#4b4b47"/><rect x="542" y="393" width="1" height="6" fill="#4b4b47"/><rect x="560" y="393" width="1" height="6" fill="#4b4b47"/><rect x="578" y="393" width="1" height="6" fill="#4b4b47"/><rect x="0" y="420" width="596" height="1" fill="#4b4b47"/><rect x="20" y="414" width="1" height="6" fill="#4b4b47"/><rect x="38" y="414" width="1" height="6" fill="#4b4b47"/><rect x="56" y="414" width="1" height="6" fill="#4b4b47"/><rect x="74" y="414" width="1" height="6" fill="#4b4b47"/><rect x="92" y="414" width="1" height="6" fill="#4b4b47"/><rect x="110" y="414" width="1" height="6" fill="#4b4b47"/><rect x="128" y="414" width="1" height="6" fill="#4b4b47"/><rect x="146" y="414" width="1" height="6" fill="#4b4b47"/><rect x="164" y="414" width="1" height="6" fill="#4b4b47"/><rect x="182" y="414" width="1" height="6" fill="#4b4b47"/><rect x="200" y="414" width="1" height="6" fill="#4b4b47"/><rect x="218" y="414" width="1" height="6" fill="#4b4b47"/><rect x="236" y="414" width="1" height="6" fill="#4b4b47"/><rect x="254" y="414" width="1" height="6" fill="#4b4b47"/><rect x="272" y="414" width="1" height="6" fill="#4b4b47"/><rect x="290" y="414" width="1" height="6" fill="#4b4b47"/><rect x="308" y="414" width="1" height="6" fill="#4b4b47"/><rect x="326" y="414" width="1" height="6" fill="#4b4b47"/><rect x="344" y="414" width="1" height="6" fill="#4b4b47"/><rect x="362" y="414" width="1" height="6" fill="#4b4b47"/><rect x="380" y="414" width="1" height="6" fill="#4b4b47"/><rect x="398" y="414" width="1" height="6" fill="#4b4b47"/><rect x="416" y="414" width="1" height="6" fill="#4b4b47"/><rect x="434" y="414" width="1" height="6" fill="#4b4b47"/><rect x="452" y="414" width="1" height="6" fill="#4b4b47"/><rect x="470" y="414" width="1" height="6" fill="#4b4b47"/><rect x="488" y="414" width="1" height="6" fill="#4b4b47"/><rect x="506" y="414" width="1" height="6" fill="#4b4b47"/><rect x="524" y="414" width="1" height="6" fill="#4b4b47"/><rect x="542" y="414" width="1" height="6" fill="#4b4b47"/><rect x="560" y="414" width="1" height="6" fill="#4b4b47"/><rect x="578" y="414" width="1" height="6" fill="#4b4b47"/><rect x="0" y="441" width="596" height="1" fill="#4b4b47"/><rect x="20" y="435" width="1" height="6" fill="#4b4b47"/><rect x="38" y="435" width="1" height="6" fill="#4b4b47"/><rect x="56" y="435" width="1" height="6" fill="#4b4b47"/><rect x="74" y="435" width="1" height="6" fill="#4b4b47"/><rect x="92" y="435" width="1" height="6" fill="#4b4b47"/><rect x="110" y="435" width="1" height="6" fill="#4b4b47"/><rect x="128" y="435" width="1" height="6" fill="#4b4b47"/><rect x="146" y="435" width="1" height="6" fill="#4b4b47"/><rect x="164" y="435" width="1" height="6" fill="#4b4b47"/><rect x="182" y="435" width="1" height="6" fill="#4b4b47"/><rect x="200" y="435" width="1" height="6" fill="#4b4b47"/><rect x="218" y="435" width="1" height="6" fill="#4b4b47"/><rect x="236" y="435" width="1" height="6" fill="#4b4b47"/><rect x="254" y="435" width="1" height="6" fill="#4b4b47"/><rect x="272" y="435" width="1" height="6" fill="#4b4b47"/><rect x="290" y="435" width="1" height="6" fill="#4b4b47"/><rect x="308" y="435" width="1" height="6" fill="#4b4b47"/><rect x="326" y="435" width="1" height="6" fill="#4b4b47"/><rect x="344" y="435" width="1" height="6" fill="#4b4b47"/><rect x="362" y="435" width="1" height="6" fill="#4b4b47"/><rect x="380" y="435" width="1" height="6" fill="#4b4b47"/><rect x="398" y="435" width="1" height="6" fill="#4b4b47"/><rect x="416" y="435" width="1" height="6" fill="#4b4b47"/><rect x="434" y="435" width="1" height="6" fill="#4b4b47"/><rect x="452" y="435" width="1" height="6" fill="#4b4b47"/><rect x="470" y="435" width="1" height="6" fill="#4b4b47"/><rect x="488" y="435" width="1" height="6" fill="#4b4b47"/><rect x="506" y="435" width="1" height="6" fill="#4b4b47"/><rect x="524" y="435" width="1" height="6" fill="#4b4b47"/><rect x="542" y="435" width="1" height="6" fill="#4b4b47"/><rect x="560" y="435" width="1" height="6" fill="#4b4b47"/><rect x="578" y="435" width="1" height="6" fill="#4b4b47"/><rect x="0" y="462" width="596" height="1" fill="#4b4b47"/><rect x="20" y="456" width="1" height="6" fill="#4b4b47"/><rect x="38" y="456" width="1" height="6" fill="#4b4b47"/><rect x="56" y="456" width="1" height="6" fill="#4b4b47"/><rect x="74" y="456" width="1" height="6" fill="#4b4b47"/><rect x="92" y="456" width="1" height="6" fill="#4b4b47"/><rect x="110" y="456" width="1" height="6" fill="#4b4b47"/><rect x="128" y="456" width="1" height="6" fill="#4b4b47"/><rect x="146" y="456" width="1" height="6" fill="#4b4b47"/><rect x="164" y="456" width="1" height="6" fill="#4b4b47"/><rect x="182" y="456" width="1" height="6" fill="#4b4b47"/><rect x="200" y="456" width="1" height="6" fill="#4b4b47"/><rect x="218" y="456" width="1" height="6" fill="#4b4b47"/><rect x="236" y="456" width="1" height="6" fill="#4b4b47"/><rect x="254" y="456" width="1" height="6" fill="#4b4b47"/><rect x="272" y="456" width="1" height="6" fill="#4b4b47"/><rect x="290" y="456" width="1" height="6" fill="#4b4b47"/><rect x="308" y="456" width="1" height="6" fill="#4b4b47"/><rect x="326" y="456" width="1" height="6" fill="#4b4b47"/><rect x="344" y="456" width="1" height="6" fill="#4b4b47"/><rect x="362" y="456" width="1" height="6" fill="#4b4b47"/><rect x="380" y="456" width="1" height="6" fill="#4b4b47"/><rect x="398" y="456" width="1" height="6" fill="#4b4b47"/><rect x="416" y="456" width="1" height="6" fill="#4b4b47"/><rect x="434" y="456" width="1" height="6" fill="#4b4b47"/><rect x="452" y="456" width="1" height="6" fill="#4b4b47"/><rect x="470" y="456" width="1" height="6" fill="#4b4b47"/><rect x="488" y="456" width="1" height="6" fill="#4b4b47"/><rect x="506" y="456" width="1" height="6" fill="#4b4b47"/><rect x="524" y="456" width="1" height="6" fill="#4b4b47"/><rect x="542" y="456" width="1" height="6" fill="#4b4b47"/><rect x="560" y="456" width="1" height="6" fill="#4b4b47"/><rect x="578" y="456" width="1" height="6" fill="#4b4b47"/><rect x="0" y="479" width="596" height="1" fill="#4b4b47"/><rect x="20" y="476" width="1" height="3" fill="#4b4b47"/><rect x="38" y="476" width="1" height="3" fill="#4b4b47"/><rect x="56" y="476" width="1" height="3" fill="#4b4b47"/><rect x="74" y="476" width="1" height="3" fill="#4b4b47"/><rect x="92" y="476" width="1" height="3" fill="#4b4b47"/><rect x="110" y="476" width="1" height="3" fill="#4b4b47"/><rect x="128" y="476" width="1" height="3" fill="#4b4b47"/><rect x="146" y="476" width="1" height="3" fill="#4b4b47"/><rect x="164" y="476" width="1" height="3" fill="#4b4b47"/><rect x="182" y="476" width="1" height="3" fill="#4b4b47"/><rect x="200" y="476" width="1" height="3" fill="#4b4b47"/><rect x="218" y="476" width="1" height="3" fill="#4b4b47"/><rect x="236" y="476" width="1" height="3" fill="#4b4b47"/><rect x="254" y="476" width="1" height="3" fill="#4b4b47"/><rect x="272" y="476" width="1" height="3" fill="#4b4b47"/><rect x="290" y="476" width="1" height="3" fill="#4b4b47"/><rect x="308" y="476" width="1" height="3" fill="#4b4b47"/><rect x="326" y="476" width="1" height="3" fill="#4b4b47"/><rect x="344" y="476" width="1" height="3" fill="#4b4b47"/><rect x="362" y="476" width="1" height="3" fill="#4b4b47"/><rect x="380" y="476" width="1" height="3" fill="#4b4b47"/><rect x="398" y="476" width="1" height="3" fill="#4b4b47"/><rect x="416" y="476" width="1" height="3" fill="#4b4b47"/><rect x="434" y="476" width="1" height="3" fill="#4b4b47"/><rect x="452" y="476" width="1" height="3" fill="#4b4b47"/><rect x="470" y="476" width="1" height="3" fill="#4b4b47"/><rect x="488" y="476" width="1" height="3" fill="#4b4b47"/><rect x="506" y="476" width="1" height="3" fill="#4b4b47"/><rect x="524" y="476" width="1" height="3" fill="#4b4b47"/><rect x="542" y="476" width="1" height="3" fill="#4b4b47"/><rect x="560" y="476" width="1" height="3" fill="#4b4b47"/><rect x="578" y="476" width="1" height="3" fill="#4b4b47"/><ellipse cx="20.2" cy="10.3" rx="4.3" ry="3.9" fill="#050505"/><ellipse cx="308.2" cy="10.3" rx="4.3" ry="3.9" fill="#050505"/><ellipse cx="524.2" cy="10.3" rx="4.3" ry="3.9" fill="#050505"/><ellipse cx="92.2" cy="31.3" rx="4.3" ry="3.9" fill="#3a3c48"/><ellipse cx="380.2" cy="31.3" rx="4.3" ry="3.9" fill="#050505"/><ellipse cx="452.2" cy="31.3" rx="4.3" ry="3.9" fill="#050505"/><ellipse cx="380.2" cy="52.3" rx="4.3" ry="3.9" fill="#050505"/><ellipse cx="20.2" cy="73.3" rx="4.3" ry="3.9" fill="#050505"/><ellipse cx="92.2" cy="73.3" rx="4.3" ry="3.9" fill="#050505"/><ellipse cx="128.2" cy="73.3" rx="4.3" ry="3.9" fill="#050505"/><ellipse cx="200.2" cy="73.3" rx="4.3" ry="3.9" fill="#050505"/><ellipse cx="236.2" cy="73.3" rx="4.3" ry="3.9" fill="#050505"/><ellipse cx="308.2" cy="73.3" rx="4.3" ry="3.9" fill="#050505"/><ellipse cx="452.2" cy="73.3" rx="4.3" ry="3.9" fill="#050505"/><ellipse cx="236.2" cy="115.3" rx="4.3" ry="3.9" fill="#050505"/><ellipse cx="20.2" cy="178.3" rx="4.3" ry="3.9" fill="#050505"/><ellipse cx="200.2" cy="283.3" rx="4.3" ry="3.9" fill="#050505"/><ellipse cx="308.2" cy="283.3" rx="4.3" ry="3.9" fill="#050505"/><ellipse cx="452.2" cy="325.3" rx="4.3" ry="3.9" fill="#050505"/></svg><svg style="position:absolute;left:183px;top:926px" width="596" height="100"><rect width="596" height="99" fill="#a9a9a3"/><rect x="20" y="10" width="576" height="1" fill="#979791"/><rect x="20" y="20" width="576" height="1" fill="#979791"/><rect x="20" y="30" width="576" height="1" fill="#979791"/><rect x="20" y="40" width="576" height="1" fill="#979791"/><rect x="20" y="50" width="576" height="1" fill="#979791"/><rect x="20" y="60" width="576" height="1" fill="#979791"/><rect x="20" y="70" width="576" height="1" fill="#979791"/><rect x="20" y="80" width="576" height="1" fill="#979791"/><rect x="20" y="90" width="576" height="1" fill="#979791"/><rect x="20" y="3" width="1" height="1" fill="#55554f"/><rect x="20" y="6" width="1" height="1" fill="#55554f"/><rect x="20" y="9" width="1" height="1" fill="#55554f"/><rect x="20" y="12" width="1" height="1" fill="#55554f"/><rect x="20" y="15" width="1" height="1" fill="#55554f"/><rect x="20" y="18" width="1" height="1" fill="#55554f"/><rect x="20" y="21" width="1" height="1" fill="#55554f"/><rect x="20" y="24" width="1" height="1" fill="#55554f"/><rect x="20" y="27" width="1" height="1" fill="#55554f"/><rect x="20" y="30" width="1" height="1" fill="#55554f"/><rect x="20" y="33" width="1" height="1" fill="#55554f"/><rect x="20" y="36" width="1" height="1" fill="#55554f"/><rect x="20" y="39" width="1" height="1" fill="#55554f"/><rect x="20" y="42" width="1" height="1" fill="#55554f"/><rect x="20" y="45" width="1" height="1" fill="#55554f"/><rect x="20" y="48" width="1" height="1" fill="#55554f"/><rect x="20" y="51" width="1" height="1" fill="#55554f"/><rect x="20" y="54" width="1" height="1" fill="#55554f"/><rect x="20" y="57" width="1" height="1" fill="#55554f"/><rect x="20" y="60" width="1" height="1" fill="#55554f"/><rect x="20" y="63" width="1" height="1" fill="#55554f"/><rect x="20" y="66" width="1" height="1" fill="#55554f"/><rect x="20" y="69" width="1" height="1" fill="#55554f"/><rect x="20" y="72" width="1" height="1" fill="#55554f"/><rect x="20" y="75" width="1" height="1" fill="#55554f"/><rect x="20" y="78" width="1" height="1" fill="#55554f"/><rect x="20" y="81" width="1" height="1" fill="#55554f"/><rect x="20" y="84" width="1" height="1" fill="#55554f"/><rect x="20" y="87" width="1" height="1" fill="#55554f"/><rect x="20" y="90" width="1" height="1" fill="#55554f"/><rect x="20" y="93" width="1" height="1" fill="#55554f"/><rect x="20" y="96" width="1" height="1" fill="#55554f"/><rect x="38" y="3" width="1" height="1" fill="#55554f"/><rect x="38" y="6" width="1" height="1" fill="#55554f"/><rect x="38" y="9" width="1" height="1" fill="#55554f"/><rect x="38" y="12" width="1" height="1" fill="#55554f"/><rect x="38" y="15" width="1" height="1" fill="#55554f"/><rect x="38" y="18" width="1" height="1" fill="#55554f"/><rect x="38" y="21" width="1" height="1" fill="#55554f"/><rect x="38" y="24" width="1" height="1" fill="#55554f"/><rect x="38" y="27" width="1" height="1" fill="#55554f"/><rect x="38" y="30" width="1" height="1" fill="#55554f"/><rect x="38" y="33" width="1" height="1" fill="#55554f"/><rect x="38" y="36" width="1" height="1" fill="#55554f"/><rect x="38" y="39" width="1" height="1" fill="#55554f"/><rect x="38" y="42" width="1" height="1" fill="#55554f"/><rect x="38" y="45" width="1" height="1" fill="#55554f"/><rect x="38" y="48" width="1" height="1" fill="#55554f"/><rect x="38" y="51" width="1" height="1" fill="#55554f"/><rect x="38" y="54" width="1" height="1" fill="#55554f"/><rect x="38" y="57" width="1" height="1" fill="#55554f"/><rect x="38" y="60" width="1" height="1" fill="#55554f"/><rect x="38" y="63" width="1" height="1" fill="#55554f"/><rect x="38" y="66" width="1" height="1" fill="#55554f"/><rect x="38" y="69" width="1" height="1" fill="#55554f"/><rect x="38" y="72" width="1" height="1" fill="#55554f"/><rect x="38" y="75" width="1" height="1" fill="#55554f"/><rect x="38" y="78" width="1" height="1" fill="#55554f"/><rect x="38" y="81" width="1" height="1" fill="#55554f"/><rect x="38" y="84" width="1" height="1" fill="#55554f"/><rect x="38" y="87" width="1" height="1" fill="#55554f"/><rect x="38" y="90" width="1" height="1" fill="#55554f"/><rect x="38" y="93" width="1" height="1" fill="#55554f"/><rect x="38" y="96" width="1" height="1" fill="#55554f"/><rect x="56" y="3" width="1" height="1" fill="#55554f"/><rect x="56" y="6" width="1" height="1" fill="#55554f"/><rect x="56" y="9" width="1" height="1" fill="#55554f"/><rect x="56" y="12" width="1" height="1" fill="#55554f"/><rect x="56" y="15" width="1" height="1" fill="#55554f"/><rect x="56" y="18" width="1" height="1" fill="#55554f"/><rect x="56" y="21" width="1" height="1" fill="#55554f"/><rect x="56" y="24" width="1" height="1" fill="#55554f"/><rect x="56" y="27" width="1" height="1" fill="#55554f"/><rect x="56" y="30" width="1" height="1" fill="#55554f"/><rect x="56" y="33" width="1" height="1" fill="#55554f"/><rect x="56" y="36" width="1" height="1" fill="#55554f"/><rect x="56" y="39" width="1" height="1" fill="#55554f"/><rect x="56" y="42" width="1" height="1" fill="#55554f"/><rect x="56" y="45" width="1" height="1" fill="#55554f"/><rect x="56" y="48" width="1" height="1" fill="#55554f"/><rect x="56" y="51" width="1" height="1" fill="#55554f"/><rect x="56" y="54" width="1" height="1" fill="#55554f"/><rect x="56" y="57" width="1" height="1" fill="#55554f"/><rect x="56" y="60" width="1" height="1" fill="#55554f"/><rect x="56" y="63" width="1" height="1" fill="#55554f"/><rect x="56" y="66" width="1" height="1" fill="#55554f"/><rect x="56" y="69" width="1" height="1" fill="#55554f"/><rect x="56" y="72" width="1" height="1" fill="#55554f"/><rect x="56" y="75" width="1" height="1" fill="#55554f"/><rect x="56" y="78" width="1" height="1" fill="#55554f"/><rect x="56" y="81" width="1" height="1" fill="#55554f"/><rect x="56" y="84" width="1" height="1" fill="#55554f"/><rect x="56" y="87" width="1" height="1" fill="#55554f"/><rect x="56" y="90" width="1" height="1" fill="#55554f"/><rect x="56" y="93" width="1" height="1" fill="#55554f"/><rect x="56" y="96" width="1" height="1" fill="#55554f"/><rect x="74" y="3" width="1" height="1" fill="#55554f"/><rect x="74" y="6" width="1" height="1" fill="#55554f"/><rect x="74" y="9" width="1" height="1" fill="#55554f"/><rect x="74" y="12" width="1" height="1" fill="#55554f"/><rect x="74" y="15" width="1" height="1" fill="#55554f"/><rect x="74" y="18" width="1" height="1" fill="#55554f"/><rect x="74" y="21" width="1" height="1" fill="#55554f"/><rect x="74" y="24" width="1" height="1" fill="#55554f"/><rect x="74" y="27" width="1" height="1" fill="#55554f"/><rect x="74" y="30" width="1" height="1" fill="#55554f"/><rect x="74" y="33" width="1" height="1" fill="#55554f"/><rect x="74" y="36" width="1" height="1" fill="#55554f"/><rect x="74" y="39" width="1" height="1" fill="#55554f"/><rect x="74" y="42" width="1" height="1" fill="#55554f"/><rect x="74" y="45" width="1" height="1" fill="#55554f"/><rect x="74" y="48" width="1" height="1" fill="#55554f"/><rect x="74" y="51" width="1" height="1" fill="#55554f"/><rect x="74" y="54" width="1" height="1" fill="#55554f"/><rect x="74" y="57" width="1" height="1" fill="#55554f"/><rect x="74" y="60" width="1" height="1" fill="#55554f"/><rect x="74" y="63" width="1" height="1" fill="#55554f"/><rect x="74" y="66" width="1" height="1" fill="#55554f"/><rect x="74" y="69" width="1" height="1" fill="#55554f"/><rect x="74" y="72" width="1" height="1" fill="#55554f"/><rect x="74" y="75" width="1" height="1" fill="#55554f"/><rect x="74" y="78" width="1" height="1" fill="#55554f"/><rect x="74" y="81" width="1" height="1" fill="#55554f"/><rect x="74" y="84" width="1" height="1" fill="#55554f"/><rect x="74" y="87" width="1" height="1" fill="#55554f"/><rect x="74" y="90" width="1" height="1" fill="#55554f"/><rect x="74" y="93" width="1" height="1" fill="#55554f"/><rect x="74" y="96" width="1" height="1" fill="#55554f"/><rect x="92" y="3" width="1" height="1" fill="#55554f"/><rect x="92" y="6" width="1" height="1" fill="#55554f"/><rect x="92" y="9" width="1" height="1" fill="#55554f"/><rect x="92" y="12" width="1" height="1" fill="#55554f"/><rect x="92" y="15" width="1" height="1" fill="#55554f"/><rect x="92" y="18" width="1" height="1" fill="#55554f"/><rect x="92" y="21" width="1" height="1" fill="#55554f"/><rect x="92" y="24" width="1" height="1" fill="#55554f"/><rect x="92" y="27" width="1" height="1" fill="#55554f"/><rect x="92" y="30" width="1" height="1" fill="#55554f"/><rect x="92" y="33" width="1" height="1" fill="#55554f"/><rect x="92" y="36" width="1" height="1" fill="#55554f"/><rect x="92" y="39" width="1" height="1" fill="#55554f"/><rect x="92" y="42" width="1" height="1" fill="#55554f"/><rect x="92" y="45" width="1" height="1" fill="#55554f"/><rect x="92" y="48" width="1" height="1" fill="#55554f"/><rect x="92" y="51" width="1" height="1" fill="#55554f"/><rect x="92" y="54" width="1" height="1" fill="#55554f"/><rect x="92" y="57" width="1" height="1" fill="#55554f"/><rect x="92" y="60" width="1" height="1" fill="#55554f"/><rect x="92" y="63" width="1" height="1" fill="#55554f"/><rect x="92" y="66" width="1" height="1" fill="#55554f"/><rect x="92" y="69" width="1" height="1" fill="#55554f"/><rect x="92" y="72" width="1" height="1" fill="#55554f"/><rect x="92" y="75" width="1" height="1" fill="#55554f"/><rect x="92" y="78" width="1" height="1" fill="#55554f"/><rect x="92" y="81" width="1" height="1" fill="#55554f"/><rect x="92" y="84" width="1" height="1" fill="#55554f"/><rect x="92" y="87" width="1" height="1" fill="#55554f"/><rect x="92" y="90" width="1" height="1" fill="#55554f"/><rect x="92" y="93" width="1" height="1" fill="#55554f"/><rect x="92" y="96" width="1" height="1" fill="#55554f"/><rect x="110" y="3" width="1" height="1" fill="#55554f"/><rect x="110" y="6" width="1" height="1" fill="#55554f"/><rect x="110" y="9" width="1" height="1" fill="#55554f"/><rect x="110" y="12" width="1" height="1" fill="#55554f"/><rect x="110" y="15" width="1" height="1" fill="#55554f"/><rect x="110" y="18" width="1" height="1" fill="#55554f"/><rect x="110" y="21" width="1" height="1" fill="#55554f"/><rect x="110" y="24" width="1" height="1" fill="#55554f"/><rect x="110" y="27" width="1" height="1" fill="#55554f"/><rect x="110" y="30" width="1" height="1" fill="#55554f"/><rect x="110" y="33" width="1" height="1" fill="#55554f"/><rect x="110" y="36" width="1" height="1" fill="#55554f"/><rect x="110" y="39" width="1" height="1" fill="#55554f"/><rect x="110" y="42" width="1" height="1" fill="#55554f"/><rect x="110" y="45" width="1" height="1" fill="#55554f"/><rect x="110" y="48" width="1" height="1" fill="#55554f"/><rect x="110" y="51" width="1" height="1" fill="#55554f"/><rect x="110" y="54" width="1" height="1" fill="#55554f"/><rect x="110" y="57" width="1" height="1" fill="#55554f"/><rect x="110" y="60" width="1" height="1" fill="#55554f"/><rect x="110" y="63" width="1" height="1" fill="#55554f"/><rect x="110" y="66" width="1" height="1" fill="#55554f"/><rect x="110" y="69" width="1" height="1" fill="#55554f"/><rect x="110" y="72" width="1" height="1" fill="#55554f"/><rect x="110" y="75" width="1" height="1" fill="#55554f"/><rect x="110" y="78" width="1" height="1" fill="#55554f"/><rect x="110" y="81" width="1" height="1" fill="#55554f"/><rect x="110" y="84" width="1" height="1" fill="#55554f"/><rect x="110" y="87" width="1" height="1" fill="#55554f"/><rect x="110" y="90" width="1" height="1" fill="#55554f"/><rect x="110" y="93" width="1" height="1" fill="#55554f"/><rect x="110" y="96" width="1" height="1" fill="#55554f"/><rect x="128" y="3" width="1" height="1" fill="#55554f"/><rect x="128" y="6" width="1" height="1" fill="#55554f"/><rect x="128" y="9" width="1" height="1" fill="#55554f"/><rect x="128" y="12" width="1" height="1" fill="#55554f"/><rect x="128" y="15" width="1" height="1" fill="#55554f"/><rect x="128" y="18" width="1" height="1" fill="#55554f"/><rect x="128" y="21" width="1" height="1" fill="#55554f"/><rect x="128" y="24" width="1" height="1" fill="#55554f"/><rect x="128" y="27" width="1" height="1" fill="#55554f"/><rect x="128" y="30" width="1" height="1" fill="#55554f"/><rect x="128" y="33" width="1" height="1" fill="#55554f"/><rect x="128" y="36" width="1" height="1" fill="#55554f"/><rect x="128" y="39" width="1" height="1" fill="#55554f"/><rect x="128" y="42" width="1" height="1" fill="#55554f"/><rect x="128" y="45" width="1" height="1" fill="#55554f"/><rect x="128" y="48" width="1" height="1" fill="#55554f"/><rect x="128" y="51" width="1" height="1" fill="#55554f"/><rect x="128" y="54" width="1" height="1" fill="#55554f"/><rect x="128" y="57" width="1" height="1" fill="#55554f"/><rect x="128" y="60" width="1" height="1" fill="#55554f"/><rect x="128" y="63" width="1" height="1" fill="#55554f"/><rect x="128" y="66" width="1" height="1" fill="#55554f"/><rect x="128" y="69" width="1" height="1" fill="#55554f"/><rect x="128" y="72" width="1" height="1" fill="#55554f"/><rect x="128" y="75" width="1" height="1" fill="#55554f"/><rect x="128" y="78" width="1" height="1" fill="#55554f"/><rect x="128" y="81" width="1" height="1" fill="#55554f"/><rect x="128" y="84" width="1" height="1" fill="#55554f"/><rect x="128" y="87" width="1" height="1" fill="#55554f"/><rect x="128" y="90" width="1" height="1" fill="#55554f"/><rect x="128" y="93" width="1" height="1" fill="#55554f"/><rect x="128" y="96" width="1" height="1" fill="#55554f"/><rect x="146" y="3" width="1" height="1" fill="#55554f"/><rect x="146" y="6" width="1" height="1" fill="#55554f"/><rect x="146" y="9" width="1" height="1" fill="#55554f"/><rect x="146" y="12" width="1" height="1" fill="#55554f"/><rect x="146" y="15" width="1" height="1" fill="#55554f"/><rect x="146" y="18" width="1" height="1" fill="#55554f"/><rect x="146" y="21" width="1" height="1" fill="#55554f"/><rect x="146" y="24" width="1" height="1" fill="#55554f"/><rect x="146" y="27" width="1" height="1" fill="#55554f"/><rect x="146" y="30" width="1" height="1" fill="#55554f"/><rect x="146" y="33" width="1" height="1" fill="#55554f"/><rect x="146" y="36" width="1" height="1" fill="#55554f"/><rect x="146" y="39" width="1" height="1" fill="#55554f"/><rect x="146" y="42" width="1" height="1" fill="#55554f"/><rect x="146" y="45" width="1" height="1" fill="#55554f"/><rect x="146" y="48" width="1" height="1" fill="#55554f"/><rect x="146" y="51" width="1" height="1" fill="#55554f"/><rect x="146" y="54" width="1" height="1" fill="#55554f"/><rect x="146" y="57" width="1" height="1" fill="#55554f"/><rect x="146" y="60" width="1" height="1" fill="#55554f"/><rect x="146" y="63" width="1" height="1" fill="#55554f"/><rect x="146" y="66" width="1" height="1" fill="#55554f"/><rect x="146" y="69" width="1" height="1" fill="#55554f"/><rect x="146" y="72" width="1" height="1" fill="#55554f"/><rect x="146" y="75" width="1" height="1" fill="#55554f"/><rect x="146" y="78" width="1" height="1" fill="#55554f"/><rect x="146" y="81" width="1" height="1" fill="#55554f"/><rect x="146" y="84" width="1" height="1" fill="#55554f"/><rect x="146" y="87" width="1" height="1" fill="#55554f"/><rect x="146" y="90" width="1" height="1" fill="#55554f"/><rect x="146" y="93" width="1" height="1" fill="#55554f"/><rect x="146" y="96" width="1" height="1" fill="#55554f"/><rect x="164" y="3" width="1" height="1" fill="#55554f"/><rect x="164" y="6" width="1" height="1" fill="#55554f"/><rect x="164" y="9" width="1" height="1" fill="#55554f"/><rect x="164" y="12" width="1" height="1" fill="#55554f"/><rect x="164" y="15" width="1" height="1" fill="#55554f"/><rect x="164" y="18" width="1" height="1" fill="#55554f"/><rect x="164" y="21" width="1" height="1" fill="#55554f"/><rect x="164" y="24" width="1" height="1" fill="#55554f"/><rect x="164" y="27" width="1" height="1" fill="#55554f"/><rect x="164" y="30" width="1" height="1" fill="#55554f"/><rect x="164" y="33" width="1" height="1" fill="#55554f"/><rect x="164" y="36" width="1" height="1" fill="#55554f"/><rect x="164" y="39" width="1" height="1" fill="#55554f"/><rect x="164" y="42" width="1" height="1" fill="#55554f"/><rect x="164" y="45" width="1" height="1" fill="#55554f"/><rect x="164" y="48" width="1" height="1" fill="#55554f"/><rect x="164" y="51" width="1" height="1" fill="#55554f"/><rect x="164" y="54" width="1" height="1" fill="#55554f"/><rect x="164" y="57" width="1" height="1" fill="#55554f"/><rect x="164" y="60" width="1" height="1" fill="#55554f"/><rect x="164" y="63" width="1" height="1" fill="#55554f"/><rect x="164" y="66" width="1" height="1" fill="#55554f"/><rect x="164" y="69" width="1" height="1" fill="#55554f"/><rect x="164" y="72" width="1" height="1" fill="#55554f"/><rect x="164" y="75" width="1" height="1" fill="#55554f"/><rect x="164" y="78" width="1" height="1" fill="#55554f"/><rect x="164" y="81" width="1" height="1" fill="#55554f"/><rect x="164" y="84" width="1" height="1" fill="#55554f"/><rect x="164" y="87" width="1" height="1" fill="#55554f"/><rect x="164" y="90" width="1" height="1" fill="#55554f"/><rect x="164" y="93" width="1" height="1" fill="#55554f"/><rect x="164" y="96" width="1" height="1" fill="#55554f"/><rect x="182" y="3" width="1" height="1" fill="#55554f"/><rect x="182" y="6" width="1" height="1" fill="#55554f"/><rect x="182" y="9" width="1" height="1" fill="#55554f"/><rect x="182" y="12" width="1" height="1" fill="#55554f"/><rect x="182" y="15" width="1" height="1" fill="#55554f"/><rect x="182" y="18" width="1" height="1" fill="#55554f"/><rect x="182" y="21" width="1" height="1" fill="#55554f"/><rect x="182" y="24" width="1" height="1" fill="#55554f"/><rect x="182" y="27" width="1" height="1" fill="#55554f"/><rect x="182" y="30" width="1" height="1" fill="#55554f"/><rect x="182" y="33" width="1" height="1" fill="#55554f"/><rect x="182" y="36" width="1" height="1" fill="#55554f"/><rect x="182" y="39" width="1" height="1" fill="#55554f"/><rect x="182" y="42" width="1" height="1" fill="#55554f"/><rect x="182" y="45" width="1" height="1" fill="#55554f"/><rect x="182" y="48" width="1" height="1" fill="#55554f"/><rect x="182" y="51" width="1" height="1" fill="#55554f"/><rect x="182" y="54" width="1" height="1" fill="#55554f"/><rect x="182" y="57" width="1" height="1" fill="#55554f"/><rect x="182" y="60" width="1" height="1" fill="#55554f"/><rect x="182" y="63" width="1" height="1" fill="#55554f"/><rect x="182" y="66" width="1" height="1" fill="#55554f"/><rect x="182" y="69" width="1" height="1" fill="#55554f"/><rect x="182" y="72" width="1" height="1" fill="#55554f"/><rect x="182" y="75" width="1" height="1" fill="#55554f"/><rect x="182" y="78" width="1" height="1" fill="#55554f"/><rect x="182" y="81" width="1" height="1" fill="#55554f"/><rect x="182" y="84" width="1" height="1" fill="#55554f"/><rect x="182" y="87" width="1" height="1" fill="#55554f"/><rect x="182" y="90" width="1" height="1" fill="#55554f"/><rect x="182" y="93" width="1" height="1" fill="#55554f"/><rect x="182" y="96" width="1" height="1" fill="#55554f"/><rect x="200" y="3" width="1" height="1" fill="#55554f"/><rect x="200" y="6" width="1" height="1" fill="#55554f"/><rect x="200" y="9" width="1" height="1" fill="#55554f"/><rect x="200" y="12" width="1" height="1" fill="#55554f"/><rect x="200" y="15" width="1" height="1" fill="#55554f"/><rect x="200" y="18" width="1" height="1" fill="#55554f"/><rect x="200" y="21" width="1" height="1" fill="#55554f"/><rect x="200" y="24" width="1" height="1" fill="#55554f"/><rect x="200" y="27" width="1" height="1" fill="#55554f"/><rect x="200" y="30" width="1" height="1" fill="#55554f"/><rect x="200" y="33" width="1" height="1" fill="#55554f"/><rect x="200" y="36" width="1" height="1" fill="#55554f"/><rect x="200" y="39" width="1" height="1" fill="#55554f"/><rect x="200" y="42" width="1" height="1" fill="#55554f"/><rect x="200" y="45" width="1" height="1" fill="#55554f"/><rect x="200" y="48" width="1" height="1" fill="#55554f"/><rect x="200" y="51" width="1" height="1" fill="#55554f"/><rect x="200" y="54" width="1" height="1" fill="#55554f"/><rect x="200" y="57" width="1" height="1" fill="#55554f"/><rect x="200" y="60" width="1" height="1" fill="#55554f"/><rect x="200" y="63" width="1" height="1" fill="#55554f"/><rect x="200" y="66" width="1" height="1" fill="#55554f"/><rect x="200" y="69" width="1" height="1" fill="#55554f"/><rect x="200" y="72" width="1" height="1" fill="#55554f"/><rect x="200" y="75" width="1" height="1" fill="#55554f"/><rect x="200" y="78" width="1" height="1" fill="#55554f"/><rect x="200" y="81" width="1" height="1" fill="#55554f"/><rect x="200" y="84" width="1" height="1" fill="#55554f"/><rect x="200" y="87" width="1" height="1" fill="#55554f"/><rect x="200" y="90" width="1" height="1" fill="#55554f"/><rect x="200" y="93" width="1" height="1" fill="#55554f"/><rect x="200" y="96" width="1" height="1" fill="#55554f"/><rect x="218" y="3" width="1" height="1" fill="#55554f"/><rect x="218" y="6" width="1" height="1" fill="#55554f"/><rect x="218" y="9" width="1" height="1" fill="#55554f"/><rect x="218" y="12" width="1" height="1" fill="#55554f"/><rect x="218" y="15" width="1" height="1" fill="#55554f"/><rect x="218" y="18" width="1" height="1" fill="#55554f"/><rect x="218" y="21" width="1" height="1" fill="#55554f"/><rect x="218" y="24" width="1" height="1" fill="#55554f"/><rect x="218" y="27" width="1" height="1" fill="#55554f"/><rect x="218" y="30" width="1" height="1" fill="#55554f"/><rect x="218" y="33" width="1" height="1" fill="#55554f"/><rect x="218" y="36" width="1" height="1" fill="#55554f"/><rect x="218" y="39" width="1" height="1" fill="#55554f"/><rect x="218" y="42" width="1" height="1" fill="#55554f"/><rect x="218" y="45" width="1" height="1" fill="#55554f"/><rect x="218" y="48" width="1" height="1" fill="#55554f"/><rect x="218" y="51" width="1" height="1" fill="#55554f"/><rect x="218" y="54" width="1" height="1" fill="#55554f"/><rect x="218" y="57" width="1" height="1" fill="#55554f"/><rect x="218" y="60" width="1" height="1" fill="#55554f"/><rect x="218" y="63" width="1" height="1" fill="#55554f"/><rect x="218" y="66" width="1" height="1" fill="#55554f"/><rect x="218" y="69" width="1" height="1" fill="#55554f"/><rect x="218" y="72" width="1" height="1" fill="#55554f"/><rect x="218" y="75" width="1" height="1" fill="#55554f"/><rect x="218" y="78" width="1" height="1" fill="#55554f"/><rect x="218" y="81" width="1" height="1" fill="#55554f"/><rect x="218" y="84" width="1" height="1" fill="#55554f"/><rect x="218" y="87" width="1" height="1" fill="#55554f"/><rect x="218" y="90" width="1" height="1" fill="#55554f"/><rect x="218" y="93" width="1" height="1" fill="#55554f"/><rect x="218" y="96" width="1" height="1" fill="#55554f"/><rect x="236" y="3" width="1" height="1" fill="#55554f"/><rect x="236" y="6" width="1" height="1" fill="#55554f"/><rect x="236" y="9" width="1" height="1" fill="#55554f"/><rect x="236" y="12" width="1" height="1" fill="#55554f"/><rect x="236" y="15" width="1" height="1" fill="#55554f"/><rect x="236" y="18" width="1" height="1" fill="#55554f"/><rect x="236" y="21" width="1" height="1" fill="#55554f"/><rect x="236" y="24" width="1" height="1" fill="#55554f"/><rect x="236" y="27" width="1" height="1" fill="#55554f"/><rect x="236" y="30" width="1" height="1" fill="#55554f"/><rect x="236" y="33" width="1" height="1" fill="#55554f"/><rect x="236" y="36" width="1" height="1" fill="#55554f"/><rect x="236" y="39" width="1" height="1" fill="#55554f"/><rect x="236" y="42" width="1" height="1" fill="#55554f"/><rect x="236" y="45" width="1" height="1" fill="#55554f"/><rect x="236" y="48" width="1" height="1" fill="#55554f"/><rect x="236" y="51" width="1" height="1" fill="#55554f"/><rect x="236" y="54" width="1" height="1" fill="#55554f"/><rect x="236" y="57" width="1" height="1" fill="#55554f"/><rect x="236" y="60" width="1" height="1" fill="#55554f"/><rect x="236" y="63" width="1" height="1" fill="#55554f"/><rect x="236" y="66" width="1" height="1" fill="#55554f"/><rect x="236" y="69" width="1" height="1" fill="#55554f"/><rect x="236" y="72" width="1" height="1" fill="#55554f"/><rect x="236" y="75" width="1" height="1" fill="#55554f"/><rect x="236" y="78" width="1" height="1" fill="#55554f"/><rect x="236" y="81" width="1" height="1" fill="#55554f"/><rect x="236" y="84" width="1" height="1" fill="#55554f"/><rect x="236" y="87" width="1" height="1" fill="#55554f"/><rect x="236" y="90" width="1" height="1" fill="#55554f"/><rect x="236" y="93" width="1" height="1" fill="#55554f"/><rect x="236" y="96" width="1" height="1" fill="#55554f"/><rect x="254" y="3" width="1" height="1" fill="#55554f"/><rect x="254" y="6" width="1" height="1" fill="#55554f"/><rect x="254" y="9" width="1" height="1" fill="#55554f"/><rect x="254" y="12" width="1" height="1" fill="#55554f"/><rect x="254" y="15" width="1" height="1" fill="#55554f"/><rect x="254" y="18" width="1" height="1" fill="#55554f"/><rect x="254" y="21" width="1" height="1" fill="#55554f"/><rect x="254" y="24" width="1" height="1" fill="#55554f"/><rect x="254" y="27" width="1" height="1" fill="#55554f"/><rect x="254" y="30" width="1" height="1" fill="#55554f"/><rect x="254" y="33" width="1" height="1" fill="#55554f"/><rect x="254" y="36" width="1" height="1" fill="#55554f"/><rect x="254" y="39" width="1" height="1" fill="#55554f"/><rect x="254" y="42" width="1" height="1" fill="#55554f"/><rect x="254" y="45" width="1" height="1" fill="#55554f"/><rect x="254" y="48" width="1" height="1" fill="#55554f"/><rect x="254" y="51" width="1" height="1" fill="#55554f"/><rect x="254" y="54" width="1" height="1" fill="#55554f"/><rect x="254" y="57" width="1" height="1" fill="#55554f"/><rect x="254" y="60" width="1" height="1" fill="#55554f"/><rect x="254" y="63" width="1" height="1" fill="#55554f"/><rect x="254" y="66" width="1" height="1" fill="#55554f"/><rect x="254" y="69" width="1" height="1" fill="#55554f"/><rect x="254" y="72" width="1" height="1" fill="#55554f"/><rect x="254" y="75" width="1" height="1" fill="#55554f"/><rect x="254" y="78" width="1" height="1" fill="#55554f"/><rect x="254" y="81" width="1" height="1" fill="#55554f"/><rect x="254" y="84" width="1" height="1" fill="#55554f"/><rect x="254" y="87" width="1" height="1" fill="#55554f"/><rect x="254" y="90" width="1" height="1" fill="#55554f"/><rect x="254" y="93" width="1" height="1" fill="#55554f"/><rect x="254" y="96" width="1" height="1" fill="#55554f"/><rect x="272" y="3" width="1" height="1" fill="#55554f"/><rect x="272" y="6" width="1" height="1" fill="#55554f"/><rect x="272" y="9" width="1" height="1" fill="#55554f"/><rect x="272" y="12" width="1" height="1" fill="#55554f"/><rect x="272" y="15" width="1" height="1" fill="#55554f"/><rect x="272" y="18" width="1" height="1" fill="#55554f"/><rect x="272" y="21" width="1" height="1" fill="#55554f"/><rect x="272" y="24" width="1" height="1" fill="#55554f"/><rect x="272" y="27" width="1" height="1" fill="#55554f"/><rect x="272" y="30" width="1" height="1" fill="#55554f"/><rect x="272" y="33" width="1" height="1" fill="#55554f"/><rect x="272" y="36" width="1" height="1" fill="#55554f"/><rect x="272" y="39" width="1" height="1" fill="#55554f"/><rect x="272" y="42" width="1" height="1" fill="#55554f"/><rect x="272" y="45" width="1" height="1" fill="#55554f"/><rect x="272" y="48" width="1" height="1" fill="#55554f"/><rect x="272" y="51" width="1" height="1" fill="#55554f"/><rect x="272" y="54" width="1" height="1" fill="#55554f"/><rect x="272" y="57" width="1" height="1" fill="#55554f"/><rect x="272" y="60" width="1" height="1" fill="#55554f"/><rect x="272" y="63" width="1" height="1" fill="#55554f"/><rect x="272" y="66" width="1" height="1" fill="#55554f"/><rect x="272" y="69" width="1" height="1" fill="#55554f"/><rect x="272" y="72" width="1" height="1" fill="#55554f"/><rect x="272" y="75" width="1" height="1" fill="#55554f"/><rect x="272" y="78" width="1" height="1" fill="#55554f"/><rect x="272" y="81" width="1" height="1" fill="#55554f"/><rect x="272" y="84" width="1" height="1" fill="#55554f"/><rect x="272" y="87" width="1" height="1" fill="#55554f"/><rect x="272" y="90" width="1" height="1" fill="#55554f"/><rect x="272" y="93" width="1" height="1" fill="#55554f"/><rect x="272" y="96" width="1" height="1" fill="#55554f"/><rect x="290" y="3" width="1" height="1" fill="#55554f"/><rect x="290" y="6" width="1" height="1" fill="#55554f"/><rect x="290" y="9" width="1" height="1" fill="#55554f"/><rect x="290" y="12" width="1" height="1" fill="#55554f"/><rect x="290" y="15" width="1" height="1" fill="#55554f"/><rect x="290" y="18" width="1" height="1" fill="#55554f"/><rect x="290" y="21" width="1" height="1" fill="#55554f"/><rect x="290" y="24" width="1" height="1" fill="#55554f"/><rect x="290" y="27" width="1" height="1" fill="#55554f"/><rect x="290" y="30" width="1" height="1" fill="#55554f"/><rect x="290" y="33" width="1" height="1" fill="#55554f"/><rect x="290" y="36" width="1" height="1" fill="#55554f"/><rect x="290" y="39" width="1" height="1" fill="#55554f"/><rect x="290" y="42" width="1" height="1" fill="#55554f"/><rect x="290" y="45" width="1" height="1" fill="#55554f"/><rect x="290" y="48" width="1" height="1" fill="#55554f"/><rect x="290" y="51" width="1" height="1" fill="#55554f"/><rect x="290" y="54" width="1" height="1" fill="#55554f"/><rect x="290" y="57" width="1" height="1" fill="#55554f"/><rect x="290" y="60" width="1" height="1" fill="#55554f"/><rect x="290" y="63" width="1" height="1" fill="#55554f"/><rect x="290" y="66" width="1" height="1" fill="#55554f"/><rect x="290" y="69" width="1" height="1" fill="#55554f"/><rect x="290" y="72" width="1" height="1" fill="#55554f"/><rect x="290" y="75" width="1" height="1" fill="#55554f"/><rect x="290" y="78" width="1" height="1" fill="#55554f"/><rect x="290" y="81" width="1" height="1" fill="#55554f"/><rect x="290" y="84" width="1" height="1" fill="#55554f"/><rect x="290" y="87" width="1" height="1" fill="#55554f"/><rect x="290" y="90" width="1" height="1" fill="#55554f"/><rect x="290" y="93" width="1" height="1" fill="#55554f"/><rect x="290" y="96" width="1" height="1" fill="#55554f"/><rect x="308" y="3" width="1" height="1" fill="#55554f"/><rect x="308" y="6" width="1" height="1" fill="#55554f"/><rect x="308" y="9" width="1" height="1" fill="#55554f"/><rect x="308" y="12" width="1" height="1" fill="#55554f"/><rect x="308" y="15" width="1" height="1" fill="#55554f"/><rect x="308" y="18" width="1" height="1" fill="#55554f"/><rect x="308" y="21" width="1" height="1" fill="#55554f"/><rect x="308" y="24" width="1" height="1" fill="#55554f"/><rect x="308" y="27" width="1" height="1" fill="#55554f"/><rect x="308" y="30" width="1" height="1" fill="#55554f"/><rect x="308" y="33" width="1" height="1" fill="#55554f"/><rect x="308" y="36" width="1" height="1" fill="#55554f"/><rect x="308" y="39" width="1" height="1" fill="#55554f"/><rect x="308" y="42" width="1" height="1" fill="#55554f"/><rect x="308" y="45" width="1" height="1" fill="#55554f"/><rect x="308" y="48" width="1" height="1" fill="#55554f"/><rect x="308" y="51" width="1" height="1" fill="#55554f"/><rect x="308" y="54" width="1" height="1" fill="#55554f"/><rect x="308" y="57" width="1" height="1" fill="#55554f"/><rect x="308" y="60" width="1" height="1" fill="#55554f"/><rect x="308" y="63" width="1" height="1" fill="#55554f"/><rect x="308" y="66" width="1" height="1" fill="#55554f"/><rect x="308" y="69" width="1" height="1" fill="#55554f"/><rect x="308" y="72" width="1" height="1" fill="#55554f"/><rect x="308" y="75" width="1" height="1" fill="#55554f"/><rect x="308" y="78" width="1" height="1" fill="#55554f"/><rect x="308" y="81" width="1" height="1" fill="#55554f"/><rect x="308" y="84" width="1" height="1" fill="#55554f"/><rect x="308" y="87" width="1" height="1" fill="#55554f"/><rect x="308" y="90" width="1" height="1" fill="#55554f"/><rect x="308" y="93" width="1" height="1" fill="#55554f"/><rect x="308" y="96" width="1" height="1" fill="#55554f"/><rect x="326" y="3" width="1" height="1" fill="#55554f"/><rect x="326" y="6" width="1" height="1" fill="#55554f"/><rect x="326" y="9" width="1" height="1" fill="#55554f"/><rect x="326" y="12" width="1" height="1" fill="#55554f"/><rect x="326" y="15" width="1" height="1" fill="#55554f"/><rect x="326" y="18" width="1" height="1" fill="#55554f"/><rect x="326" y="21" width="1" height="1" fill="#55554f"/><rect x="326" y="24" width="1" height="1" fill="#55554f"/><rect x="326" y="27" width="1" height="1" fill="#55554f"/><rect x="326" y="30" width="1" height="1" fill="#55554f"/><rect x="326" y="33" width="1" height="1" fill="#55554f"/><rect x="326" y="36" width="1" height="1" fill="#55554f"/><rect x="326" y="39" width="1" height="1" fill="#55554f"/><rect x="326" y="42" width="1" height="1" fill="#55554f"/><rect x="326" y="45" width="1" height="1" fill="#55554f"/><rect x="326" y="48" width="1" height="1" fill="#55554f"/><rect x="326" y="51" width="1" height="1" fill="#55554f"/><rect x="326" y="54" width="1" height="1" fill="#55554f"/><rect x="326" y="57" width="1" height="1" fill="#55554f"/><rect x="326" y="60" width="1" height="1" fill="#55554f"/><rect x="326" y="63" width="1" height="1" fill="#55554f"/><rect x="326" y="66" width="1" height="1" fill="#55554f"/><rect x="326" y="69" width="1" height="1" fill="#55554f"/><rect x="326" y="72" width="1" height="1" fill="#55554f"/><rect x="326" y="75" width="1" height="1" fill="#55554f"/><rect x="326" y="78" width="1" height="1" fill="#55554f"/><rect x="326" y="81" width="1" height="1" fill="#55554f"/><rect x="326" y="84" width="1" height="1" fill="#55554f"/><rect x="326" y="87" width="1" height="1" fill="#55554f"/><rect x="326" y="90" width="1" height="1" fill="#55554f"/><rect x="326" y="93" width="1" height="1" fill="#55554f"/><rect x="326" y="96" width="1" height="1" fill="#55554f"/><rect x="344" y="3" width="1" height="1" fill="#55554f"/><rect x="344" y="6" width="1" height="1" fill="#55554f"/><rect x="344" y="9" width="1" height="1" fill="#55554f"/><rect x="344" y="12" width="1" height="1" fill="#55554f"/><rect x="344" y="15" width="1" height="1" fill="#55554f"/><rect x="344" y="18" width="1" height="1" fill="#55554f"/><rect x="344" y="21" width="1" height="1" fill="#55554f"/><rect x="344" y="24" width="1" height="1" fill="#55554f"/><rect x="344" y="27" width="1" height="1" fill="#55554f"/><rect x="344" y="30" width="1" height="1" fill="#55554f"/><rect x="344" y="33" width="1" height="1" fill="#55554f"/><rect x="344" y="36" width="1" height="1" fill="#55554f"/><rect x="344" y="39" width="1" height="1" fill="#55554f"/><rect x="344" y="42" width="1" height="1" fill="#55554f"/><rect x="344" y="45" width="1" height="1" fill="#55554f"/><rect x="344" y="48" width="1" height="1" fill="#55554f"/><rect x="344" y="51" width="1" height="1" fill="#55554f"/><rect x="344" y="54" width="1" height="1" fill="#55554f"/><rect x="344" y="57" width="1" height="1" fill="#55554f"/><rect x="344" y="60" width="1" height="1" fill="#55554f"/><rect x="344" y="63" width="1" height="1" fill="#55554f"/><rect x="344" y="66" width="1" height="1" fill="#55554f"/><rect x="344" y="69" width="1" height="1" fill="#55554f"/><rect x="344" y="72" width="1" height="1" fill="#55554f"/><rect x="344" y="75" width="1" height="1" fill="#55554f"/><rect x="344" y="78" width="1" height="1" fill="#55554f"/><rect x="344" y="81" width="1" height="1" fill="#55554f"/><rect x="344" y="84" width="1" height="1" fill="#55554f"/><rect x="344" y="87" width="1" height="1" fill="#55554f"/><rect x="344" y="90" width="1" height="1" fill="#55554f"/><rect x="344" y="93" width="1" height="1" fill="#55554f"/><rect x="344" y="96" width="1" height="1" fill="#55554f"/><rect x="362" y="3" width="1" height="1" fill="#55554f"/><rect x="362" y="6" width="1" height="1" fill="#55554f"/><rect x="362" y="9" width="1" height="1" fill="#55554f"/><rect x="362" y="12" width="1" height="1" fill="#55554f"/><rect x="362" y="15" width="1" height="1" fill="#55554f"/><rect x="362" y="18" width="1" height="1" fill="#55554f"/><rect x="362" y="21" width="1" height="1" fill="#55554f"/><rect x="362" y="24" width="1" height="1" fill="#55554f"/><rect x="362" y="27" width="1" height="1" fill="#55554f"/><rect x="362" y="30" width="1" height="1" fill="#55554f"/><rect x="362" y="33" width="1" height="1" fill="#55554f"/><rect x="362" y="36" width="1" height="1" fill="#55554f"/><rect x="362" y="39" width="1" height="1" fill="#55554f"/><rect x="362" y="42" width="1" height="1" fill="#55554f"/><rect x="362" y="45" width="1" height="1" fill="#55554f"/><rect x="362" y="48" width="1" height="1" fill="#55554f"/><rect x="362" y="51" width="1" height="1" fill="#55554f"/><rect x="362" y="54" width="1" height="1" fill="#55554f"/><rect x="362" y="57" width="1" height="1" fill="#55554f"/><rect x="362" y="60" width="1" height="1" fill="#55554f"/><rect x="362" y="63" width="1" height="1" fill="#55554f"/><rect x="362" y="66" width="1" height="1" fill="#55554f"/><rect x="362" y="69" width="1" height="1" fill="#55554f"/><rect x="362" y="72" width="1" height="1" fill="#55554f"/><rect x="362" y="75" width="1" height="1" fill="#55554f"/><rect x="362" y="78" width="1" height="1" fill="#55554f"/><rect x="362" y="81" width="1" height="1" fill="#55554f"/><rect x="362" y="84" width="1" height="1" fill="#55554f"/><rect x="362" y="87" width="1" height="1" fill="#55554f"/><rect x="362" y="90" width="1" height="1" fill="#55554f"/><rect x="362" y="93" width="1" height="1" fill="#55554f"/><rect x="362" y="96" width="1" height="1" fill="#55554f"/><rect x="380" y="3" width="1" height="1" fill="#55554f"/><rect x="380" y="6" width="1" height="1" fill="#55554f"/><rect x="380" y="9" width="1" height="1" fill="#55554f"/><rect x="380" y="12" width="1" height="1" fill="#55554f"/><rect x="380" y="15" width="1" height="1" fill="#55554f"/><rect x="380" y="18" width="1" height="1" fill="#55554f"/><rect x="380" y="21" width="1" height="1" fill="#55554f"/><rect x="380" y="24" width="1" height="1" fill="#55554f"/><rect x="380" y="27" width="1" height="1" fill="#55554f"/><rect x="380" y="30" width="1" height="1" fill="#55554f"/><rect x="380" y="33" width="1" height="1" fill="#55554f"/><rect x="380" y="36" width="1" height="1" fill="#55554f"/><rect x="380" y="39" width="1" height="1" fill="#55554f"/><rect x="380" y="42" width="1" height="1" fill="#55554f"/><rect x="380" y="45" width="1" height="1" fill="#55554f"/><rect x="380" y="48" width="1" height="1" fill="#55554f"/><rect x="380" y="51" width="1" height="1" fill="#55554f"/><rect x="380" y="54" width="1" height="1" fill="#55554f"/><rect x="380" y="57" width="1" height="1" fill="#55554f"/><rect x="380" y="60" width="1" height="1" fill="#55554f"/><rect x="380" y="63" width="1" height="1" fill="#55554f"/><rect x="380" y="66" width="1" height="1" fill="#55554f"/><rect x="380" y="69" width="1" height="1" fill="#55554f"/><rect x="380" y="72" width="1" height="1" fill="#55554f"/><rect x="380" y="75" width="1" height="1" fill="#55554f"/><rect x="380" y="78" width="1" height="1" fill="#55554f"/><rect x="380" y="81" width="1" height="1" fill="#55554f"/><rect x="380" y="84" width="1" height="1" fill="#55554f"/><rect x="380" y="87" width="1" height="1" fill="#55554f"/><rect x="380" y="90" width="1" height="1" fill="#55554f"/><rect x="380" y="93" width="1" height="1" fill="#55554f"/><rect x="380" y="96" width="1" height="1" fill="#55554f"/><rect x="398" y="3" width="1" height="1" fill="#55554f"/><rect x="398" y="6" width="1" height="1" fill="#55554f"/><rect x="398" y="9" width="1" height="1" fill="#55554f"/><rect x="398" y="12" width="1" height="1" fill="#55554f"/><rect x="398" y="15" width="1" height="1" fill="#55554f"/><rect x="398" y="18" width="1" height="1" fill="#55554f"/><rect x="398" y="21" width="1" height="1" fill="#55554f"/><rect x="398" y="24" width="1" height="1" fill="#55554f"/><rect x="398" y="27" width="1" height="1" fill="#55554f"/><rect x="398" y="30" width="1" height="1" fill="#55554f"/><rect x="398" y="33" width="1" height="1" fill="#55554f"/><rect x="398" y="36" width="1" height="1" fill="#55554f"/><rect x="398" y="39" width="1" height="1" fill="#55554f"/><rect x="398" y="42" width="1" height="1" fill="#55554f"/><rect x="398" y="45" width="1" height="1" fill="#55554f"/><rect x="398" y="48" width="1" height="1" fill="#55554f"/><rect x="398" y="51" width="1" height="1" fill="#55554f"/><rect x="398" y="54" width="1" height="1" fill="#55554f"/><rect x="398" y="57" width="1" height="1" fill="#55554f"/><rect x="398" y="60" width="1" height="1" fill="#55554f"/><rect x="398" y="63" width="1" height="1" fill="#55554f"/><rect x="398" y="66" width="1" height="1" fill="#55554f"/><rect x="398" y="69" width="1" height="1" fill="#55554f"/><rect x="398" y="72" width="1" height="1" fill="#55554f"/><rect x="398" y="75" width="1" height="1" fill="#55554f"/><rect x="398" y="78" width="1" height="1" fill="#55554f"/><rect x="398" y="81" width="1" height="1" fill="#55554f"/><rect x="398" y="84" width="1" height="1" fill="#55554f"/><rect x="398" y="87" width="1" height="1" fill="#55554f"/><rect x="398" y="90" width="1" height="1" fill="#55554f"/><rect x="398" y="93" width="1" height="1" fill="#55554f"/><rect x="398" y="96" width="1" height="1" fill="#55554f"/><rect x="416" y="3" width="1" height="1" fill="#55554f"/><rect x="416" y="6" width="1" height="1" fill="#55554f"/><rect x="416" y="9" width="1" height="1" fill="#55554f"/><rect x="416" y="12" width="1" height="1" fill="#55554f"/><rect x="416" y="15" width="1" height="1" fill="#55554f"/><rect x="416" y="18" width="1" height="1" fill="#55554f"/><rect x="416" y="21" width="1" height="1" fill="#55554f"/><rect x="416" y="24" width="1" height="1" fill="#55554f"/><rect x="416" y="27" width="1" height="1" fill="#55554f"/><rect x="416" y="30" width="1" height="1" fill="#55554f"/><rect x="416" y="33" width="1" height="1" fill="#55554f"/><rect x="416" y="36" width="1" height="1" fill="#55554f"/><rect x="416" y="39" width="1" height="1" fill="#55554f"/><rect x="416" y="42" width="1" height="1" fill="#55554f"/><rect x="416" y="45" width="1" height="1" fill="#55554f"/><rect x="416" y="48" width="1" height="1" fill="#55554f"/><rect x="416" y="51" width="1" height="1" fill="#55554f"/><rect x="416" y="54" width="1" height="1" fill="#55554f"/><rect x="416" y="57" width="1" height="1" fill="#55554f"/><rect x="416" y="60" width="1" height="1" fill="#55554f"/><rect x="416" y="63" width="1" height="1" fill="#55554f"/><rect x="416" y="66" width="1" height="1" fill="#55554f"/><rect x="416" y="69" width="1" height="1" fill="#55554f"/><rect x="416" y="72" width="1" height="1" fill="#55554f"/><rect x="416" y="75" width="1" height="1" fill="#55554f"/><rect x="416" y="78" width="1" height="1" fill="#55554f"/><rect x="416" y="81" width="1" height="1" fill="#55554f"/><rect x="416" y="84" width="1" height="1" fill="#55554f"/><rect x="416" y="87" width="1" height="1" fill="#55554f"/><rect x="416" y="90" width="1" height="1" fill="#55554f"/><rect x="416" y="93" width="1" height="1" fill="#55554f"/><rect x="416" y="96" width="1" height="1" fill="#55554f"/><rect x="434" y="3" width="1" height="1" fill="#55554f"/><rect x="434" y="6" width="1" height="1" fill="#55554f"/><rect x="434" y="9" width="1" height="1" fill="#55554f"/><rect x="434" y="12" width="1" height="1" fill="#55554f"/><rect x="434" y="15" width="1" height="1" fill="#55554f"/><rect x="434" y="18" width="1" height="1" fill="#55554f"/><rect x="434" y="21" width="1" height="1" fill="#55554f"/><rect x="434" y="24" width="1" height="1" fill="#55554f"/><rect x="434" y="27" width="1" height="1" fill="#55554f"/><rect x="434" y="30" width="1" height="1" fill="#55554f"/><rect x="434" y="33" width="1" height="1" fill="#55554f"/><rect x="434" y="36" width="1" height="1" fill="#55554f"/><rect x="434" y="39" width="1" height="1" fill="#55554f"/><rect x="434" y="42" width="1" height="1" fill="#55554f"/><rect x="434" y="45" width="1" height="1" fill="#55554f"/><rect x="434" y="48" width="1" height="1" fill="#55554f"/><rect x="434" y="51" width="1" height="1" fill="#55554f"/><rect x="434" y="54" width="1" height="1" fill="#55554f"/><rect x="434" y="57" width="1" height="1" fill="#55554f"/><rect x="434" y="60" width="1" height="1" fill="#55554f"/><rect x="434" y="63" width="1" height="1" fill="#55554f"/><rect x="434" y="66" width="1" height="1" fill="#55554f"/><rect x="434" y="69" width="1" height="1" fill="#55554f"/><rect x="434" y="72" width="1" height="1" fill="#55554f"/><rect x="434" y="75" width="1" height="1" fill="#55554f"/><rect x="434" y="78" width="1" height="1" fill="#55554f"/><rect x="434" y="81" width="1" height="1" fill="#55554f"/><rect x="434" y="84" width="1" height="1" fill="#55554f"/><rect x="434" y="87" width="1" height="1" fill="#55554f"/><rect x="434" y="90" width="1" height="1" fill="#55554f"/><rect x="434" y="93" width="1" height="1" fill="#55554f"/><rect x="434" y="96" width="1" height="1" fill="#55554f"/><rect x="452" y="3" width="1" height="1" fill="#55554f"/><rect x="452" y="6" width="1" height="1" fill="#55554f"/><rect x="452" y="9" width="1" height="1" fill="#55554f"/><rect x="452" y="12" width="1" height="1" fill="#55554f"/><rect x="452" y="15" width="1" height="1" fill="#55554f"/><rect x="452" y="18" width="1" height="1" fill="#55554f"/><rect x="452" y="21" width="1" height="1" fill="#55554f"/><rect x="452" y="24" width="1" height="1" fill="#55554f"/><rect x="452" y="27" width="1" height="1" fill="#55554f"/><rect x="452" y="30" width="1" height="1" fill="#55554f"/><rect x="452" y="33" width="1" height="1" fill="#55554f"/><rect x="452" y="36" width="1" height="1" fill="#55554f"/><rect x="452" y="39" width="1" height="1" fill="#55554f"/><rect x="452" y="42" width="1" height="1" fill="#55554f"/><rect x="452" y="45" width="1" height="1" fill="#55554f"/><rect x="452" y="48" width="1" height="1" fill="#55554f"/><rect x="452" y="51" width="1" height="1" fill="#55554f"/><rect x="452" y="54" width="1" height="1" fill="#55554f"/><rect x="452" y="57" width="1" height="1" fill="#55554f"/><rect x="452" y="60" width="1" height="1" fill="#55554f"/><rect x="452" y="63" width="1" height="1" fill="#55554f"/><rect x="452" y="66" width="1" height="1" fill="#55554f"/><rect x="452" y="69" width="1" height="1" fill="#55554f"/><rect x="452" y="72" width="1" height="1" fill="#55554f"/><rect x="452" y="75" width="1" height="1" fill="#55554f"/><rect x="452" y="78" width="1" height="1" fill="#55554f"/><rect x="452" y="81" width="1" height="1" fill="#55554f"/><rect x="452" y="84" width="1" height="1" fill="#55554f"/><rect x="452" y="87" width="1" height="1" fill="#55554f"/><rect x="452" y="90" width="1" height="1" fill="#55554f"/><rect x="452" y="93" width="1" height="1" fill="#55554f"/><rect x="452" y="96" width="1" height="1" fill="#55554f"/><rect x="470" y="3" width="1" height="1" fill="#55554f"/><rect x="470" y="6" width="1" height="1" fill="#55554f"/><rect x="470" y="9" width="1" height="1" fill="#55554f"/><rect x="470" y="12" width="1" height="1" fill="#55554f"/><rect x="470" y="15" width="1" height="1" fill="#55554f"/><rect x="470" y="18" width="1" height="1" fill="#55554f"/><rect x="470" y="21" width="1" height="1" fill="#55554f"/><rect x="470" y="24" width="1" height="1" fill="#55554f"/><rect x="470" y="27" width="1" height="1" fill="#55554f"/><rect x="470" y="30" width="1" height="1" fill="#55554f"/><rect x="470" y="33" width="1" height="1" fill="#55554f"/><rect x="470" y="36" width="1" height="1" fill="#55554f"/><rect x="470" y="39" width="1" height="1" fill="#55554f"/><rect x="470" y="42" width="1" height="1" fill="#55554f"/><rect x="470" y="45" width="1" height="1" fill="#55554f"/><rect x="470" y="48" width="1" height="1" fill="#55554f"/><rect x="470" y="51" width="1" height="1" fill="#55554f"/><rect x="470" y="54" width="1" height="1" fill="#55554f"/><rect x="470" y="57" width="1" height="1" fill="#55554f"/><rect x="470" y="60" width="1" height="1" fill="#55554f"/><rect x="470" y="63" width="1" height="1" fill="#55554f"/><rect x="470" y="66" width="1" height="1" fill="#55554f"/><rect x="470" y="69" width="1" height="1" fill="#55554f"/><rect x="470" y="72" width="1" height="1" fill="#55554f"/><rect x="470" y="75" width="1" height="1" fill="#55554f"/><rect x="470" y="78" width="1" height="1" fill="#55554f"/><rect x="470" y="81" width="1" height="1" fill="#55554f"/><rect x="470" y="84" width="1" height="1" fill="#55554f"/><rect x="470" y="87" width="1" height="1" fill="#55554f"/><rect x="470" y="90" width="1" height="1" fill="#55554f"/><rect x="470" y="93" width="1" height="1" fill="#55554f"/><rect x="470" y="96" width="1" height="1" fill="#55554f"/><rect x="488" y="3" width="1" height="1" fill="#55554f"/><rect x="488" y="6" width="1" height="1" fill="#55554f"/><rect x="488" y="9" width="1" height="1" fill="#55554f"/><rect x="488" y="12" width="1" height="1" fill="#55554f"/><rect x="488" y="15" width="1" height="1" fill="#55554f"/><rect x="488" y="18" width="1" height="1" fill="#55554f"/><rect x="488" y="21" width="1" height="1" fill="#55554f"/><rect x="488" y="24" width="1" height="1" fill="#55554f"/><rect x="488" y="27" width="1" height="1" fill="#55554f"/><rect x="488" y="30" width="1" height="1" fill="#55554f"/><rect x="488" y="33" width="1" height="1" fill="#55554f"/><rect x="488" y="36" width="1" height="1" fill="#55554f"/><rect x="488" y="39" width="1" height="1" fill="#55554f"/><rect x="488" y="42" width="1" height="1" fill="#55554f"/><rect x="488" y="45" width="1" height="1" fill="#55554f"/><rect x="488" y="48" width="1" height="1" fill="#55554f"/><rect x="488" y="51" width="1" height="1" fill="#55554f"/><rect x="488" y="54" width="1" height="1" fill="#55554f"/><rect x="488" y="57" width="1" height="1" fill="#55554f"/><rect x="488" y="60" width="1" height="1" fill="#55554f"/><rect x="488" y="63" width="1" height="1" fill="#55554f"/><rect x="488" y="66" width="1" height="1" fill="#55554f"/><rect x="488" y="69" width="1" height="1" fill="#55554f"/><rect x="488" y="72" width="1" height="1" fill="#55554f"/><rect x="488" y="75" width="1" height="1" fill="#55554f"/><rect x="488" y="78" width="1" height="1" fill="#55554f"/><rect x="488" y="81" width="1" height="1" fill="#55554f"/><rect x="488" y="84" width="1" height="1" fill="#55554f"/><rect x="488" y="87" width="1" height="1" fill="#55554f"/><rect x="488" y="90" width="1" height="1" fill="#55554f"/><rect x="488" y="93" width="1" height="1" fill="#55554f"/><rect x="488" y="96" width="1" height="1" fill="#55554f"/><rect x="506" y="3" width="1" height="1" fill="#55554f"/><rect x="506" y="6" width="1" height="1" fill="#55554f"/><rect x="506" y="9" width="1" height="1" fill="#55554f"/><rect x="506" y="12" width="1" height="1" fill="#55554f"/><rect x="506" y="15" width="1" height="1" fill="#55554f"/><rect x="506" y="18" width="1" height="1" fill="#55554f"/><rect x="506" y="21" width="1" height="1" fill="#55554f"/><rect x="506" y="24" width="1" height="1" fill="#55554f"/><rect x="506" y="27" width="1" height="1" fill="#55554f"/><rect x="506" y="30" width="1" height="1" fill="#55554f"/><rect x="506" y="33" width="1" height="1" fill="#55554f"/><rect x="506" y="36" width="1" height="1" fill="#55554f"/><rect x="506" y="39" width="1" height="1" fill="#55554f"/><rect x="506" y="42" width="1" height="1" fill="#55554f"/><rect x="506" y="45" width="1" height="1" fill="#55554f"/><rect x="506" y="48" width="1" height="1" fill="#55554f"/><rect x="506" y="51" width="1" height="1" fill="#55554f"/><rect x="506" y="54" width="1" height="1" fill="#55554f"/><rect x="506" y="57" width="1" height="1" fill="#55554f"/><rect x="506" y="60" width="1" height="1" fill="#55554f"/><rect x="506" y="63" width="1" height="1" fill="#55554f"/><rect x="506" y="66" width="1" height="1" fill="#55554f"/><rect x="506" y="69" width="1" height="1" fill="#55554f"/><rect x="506" y="72" width="1" height="1" fill="#55554f"/><rect x="506" y="75" width="1" height="1" fill="#55554f"/><rect x="506" y="78" width="1" height="1" fill="#55554f"/><rect x="506" y="81" width="1" height="1" fill="#55554f"/><rect x="506" y="84" width="1" height="1" fill="#55554f"/><rect x="506" y="87" width="1" height="1" fill="#55554f"/><rect x="506" y="90" width="1" height="1" fill="#55554f"/><rect x="506" y="93" width="1" height="1" fill="#55554f"/><rect x="506" y="96" width="1" height="1" fill="#55554f"/><rect x="524" y="3" width="1" height="1" fill="#55554f"/><rect x="524" y="6" width="1" height="1" fill="#55554f"/><rect x="524" y="9" width="1" height="1" fill="#55554f"/><rect x="524" y="12" width="1" height="1" fill="#55554f"/><rect x="524" y="15" width="1" height="1" fill="#55554f"/><rect x="524" y="18" width="1" height="1" fill="#55554f"/><rect x="524" y="21" width="1" height="1" fill="#55554f"/><rect x="524" y="24" width="1" height="1" fill="#55554f"/><rect x="524" y="27" width="1" height="1" fill="#55554f"/><rect x="524" y="30" width="1" height="1" fill="#55554f"/><rect x="524" y="33" width="1" height="1" fill="#55554f"/><rect x="524" y="36" width="1" height="1" fill="#55554f"/><rect x="524" y="39" width="1" height="1" fill="#55554f"/><rect x="524" y="42" width="1" height="1" fill="#55554f"/><rect x="524" y="45" width="1" height="1" fill="#55554f"/><rect x="524" y="48" width="1" height="1" fill="#55554f"/><rect x="524" y="51" width="1" height="1" fill="#55554f"/><rect x="524" y="54" width="1" height="1" fill="#55554f"/><rect x="524" y="57" width="1" height="1" fill="#55554f"/><rect x="524" y="60" width="1" height="1" fill="#55554f"/><rect x="524" y="63" width="1" height="1" fill="#55554f"/><rect x="524" y="66" width="1" height="1" fill="#55554f"/><rect x="524" y="69" width="1" height="1" fill="#55554f"/><rect x="524" y="72" width="1" height="1" fill="#55554f"/><rect x="524" y="75" width="1" height="1" fill="#55554f"/><rect x="524" y="78" width="1" height="1" fill="#55554f"/><rect x="524" y="81" width="1" height="1" fill="#55554f"/><rect x="524" y="84" width="1" height="1" fill="#55554f"/><rect x="524" y="87" width="1" height="1" fill="#55554f"/><rect x="524" y="90" width="1" height="1" fill="#55554f"/><rect x="524" y="93" width="1" height="1" fill="#55554f"/><rect x="524" y="96" width="1" height="1" fill="#55554f"/><rect x="542" y="3" width="1" height="1" fill="#55554f"/><rect x="542" y="6" width="1" height="1" fill="#55554f"/><rect x="542" y="9" width="1" height="1" fill="#55554f"/><rect x="542" y="12" width="1" height="1" fill="#55554f"/><rect x="542" y="15" width="1" height="1" fill="#55554f"/><rect x="542" y="18" width="1" height="1" fill="#55554f"/><rect x="542" y="21" width="1" height="1" fill="#55554f"/><rect x="542" y="24" width="1" height="1" fill="#55554f"/><rect x="542" y="27" width="1" height="1" fill="#55554f"/><rect x="542" y="30" width="1" height="1" fill="#55554f"/><rect x="542" y="33" width="1" height="1" fill="#55554f"/><rect x="542" y="36" width="1" height="1" fill="#55554f"/><rect x="542" y="39" width="1" height="1" fill="#55554f"/><rect x="542" y="42" width="1" height="1" fill="#55554f"/><rect x="542" y="45" width="1" height="1" fill="#55554f"/><rect x="542" y="48" width="1" height="1" fill="#55554f"/><rect x="542" y="51" width="1" height="1" fill="#55554f"/><rect x="542" y="54" width="1" height="1" fill="#55554f"/><rect x="542" y="57" width="1" height="1" fill="#55554f"/><rect x="542" y="60" width="1" height="1" fill="#55554f"/><rect x="542" y="63" width="1" height="1" fill="#55554f"/><rect x="542" y="66" width="1" height="1" fill="#55554f"/><rect x="542" y="69" width="1" height="1" fill="#55554f"/><rect x="542" y="72" width="1" height="1" fill="#55554f"/><rect x="542" y="75" width="1" height="1" fill="#55554f"/><rect x="542" y="78" width="1" height="1" fill="#55554f"/><rect x="542" y="81" width="1" height="1" fill="#55554f"/><rect x="542" y="84" width="1" height="1" fill="#55554f"/><rect x="542" y="87" width="1" height="1" fill="#55554f"/><rect x="542" y="90" width="1" height="1" fill="#55554f"/><rect x="542" y="93" width="1" height="1" fill="#55554f"/><rect x="542" y="96" width="1" height="1" fill="#55554f"/><rect x="560" y="3" width="1" height="1" fill="#55554f"/><rect x="560" y="6" width="1" height="1" fill="#55554f"/><rect x="560" y="9" width="1" height="1" fill="#55554f"/><rect x="560" y="12" width="1" height="1" fill="#55554f"/><rect x="560" y="15" width="1" height="1" fill="#55554f"/><rect x="560" y="18" width="1" height="1" fill="#55554f"/><rect x="560" y="21" width="1" height="1" fill="#55554f"/><rect x="560" y="24" width="1" height="1" fill="#55554f"/><rect x="560" y="27" width="1" height="1" fill="#55554f"/><rect x="560" y="30" width="1" height="1" fill="#55554f"/><rect x="560" y="33" width="1" height="1" fill="#55554f"/><rect x="560" y="36" width="1" height="1" fill="#55554f"/><rect x="560" y="39" width="1" height="1" fill="#55554f"/><rect x="560" y="42" width="1" height="1" fill="#55554f"/><rect x="560" y="45" width="1" height="1" fill="#55554f"/><rect x="560" y="48" width="1" height="1" fill="#55554f"/><rect x="560" y="51" width="1" height="1" fill="#55554f"/><rect x="560" y="54" width="1" height="1" fill="#55554f"/><rect x="560" y="57" width="1" height="1" fill="#55554f"/><rect x="560" y="60" width="1" height="1" fill="#55554f"/><rect x="560" y="63" width="1" height="1" fill="#55554f"/><rect x="560" y="66" width="1" height="1" fill="#55554f"/><rect x="560" y="69" width="1" height="1" fill="#55554f"/><rect x="560" y="72" width="1" height="1" fill="#55554f"/><rect x="560" y="75" width="1" height="1" fill="#55554f"/><rect x="560" y="78" width="1" height="1" fill="#55554f"/><rect x="560" y="81" width="1" height="1" fill="#55554f"/><rect x="560" y="84" width="1" height="1" fill="#55554f"/><rect x="560" y="87" width="1" height="1" fill="#55554f"/><rect x="560" y="90" width="1" height="1" fill="#55554f"/><rect x="560" y="93" width="1" height="1" fill="#55554f"/><rect x="560" y="96" width="1" height="1" fill="#55554f"/><rect x="578" y="3" width="1" height="1" fill="#55554f"/><rect x="578" y="6" width="1" height="1" fill="#55554f"/><rect x="578" y="9" width="1" height="1" fill="#55554f"/><rect x="578" y="12" width="1" height="1" fill="#55554f"/><rect x="578" y="15" width="1" height="1" fill="#55554f"/><rect x="578" y="18" width="1" height="1" fill="#55554f"/><rect x="578" y="21" width="1" height="1" fill="#55554f"/><rect x="578" y="24" width="1" height="1" fill="#55554f"/><rect x="578" y="27" width="1" height="1" fill="#55554f"/><rect x="578" y="30" width="1" height="1" fill="#55554f"/><rect x="578" y="33" width="1" height="1" fill="#55554f"/><rect x="578" y="36" width="1" height="1" fill="#55554f"/><rect x="578" y="39" width="1" height="1" fill="#55554f"/><rect x="578" y="42" width="1" height="1" fill="#55554f"/><rect x="578" y="45" width="1" height="1" fill="#55554f"/><rect x="578" y="48" width="1" height="1" fill="#55554f"/><rect x="578" y="51" width="1" height="1" fill="#55554f"/><rect x="578" y="54" width="1" height="1" fill="#55554f"/><rect x="578" y="57" width="1" height="1" fill="#55554f"/><rect x="578" y="60" width="1" height="1" fill="#55554f"/><rect x="578" y="63" width="1" height="1" fill="#55554f"/><rect x="578" y="66" width="1" height="1" fill="#55554f"/><rect x="578" y="69" width="1" height="1" fill="#55554f"/><rect x="578" y="72" width="1" height="1" fill="#55554f"/><rect x="578" y="75" width="1" height="1" fill="#55554f"/><rect x="578" y="78" width="1" height="1" fill="#55554f"/><rect x="578" y="81" width="1" height="1" fill="#55554f"/><rect x="578" y="84" width="1" height="1" fill="#55554f"/><rect x="578" y="87" width="1" height="1" fill="#55554f"/><rect x="578" y="90" width="1" height="1" fill="#55554f"/><rect x="578" y="93" width="1" height="1" fill="#55554f"/><rect x="578" y="96" width="1" height="1" fill="#55554f"/><rect x="235" y="20" width="3" height="79" fill="#050505"/></svg><div style="left:4px;top:970px;width:160px;height:11px;background:repeating-linear-gradient(90deg,#6aa8ee 0,#6aa8ee 7px,#8fc0f8 7px,#8fc0f8 8px);"></div><div class="t" style="left:4px;top:969px;width:160px;text-align:right;font-family:'Liberation Mono',monospace;font-size:12px;color:#0f2f70;letter-spacing:0.8px">Velocity</div><div style="left:168px;top:969px;width:11px;height:12px;background:linear-gradient(#f0f0f4,#b8bbc6);border:1px solid #111318;border-radius:1px;"></div><svg style="position:absolute;left:0;top:0;overflow:visible" width="1" height="1"><path d="M169.5 973.0h8l-4 4z" fill="#111"/></svg><div style="left:968px;top:448px;width:14px;height:15px;background:linear-gradient(#474b57,#3c404b);border:1px solid #656a76;border-radius:3px;box-shadow:0 0 0 1px #23262d;"></div><svg style="position:absolute;left:0;top:0;overflow:visible" width="1" height="1"><path d="M970.5 457.5h9l-4.5-4.5z" fill="#f4f4f6"/></svg><div style="left:968px;top:464px;width:14px;height:377px;background:linear-gradient(90deg,#636878,#565b6b);border:1px solid #2a2d36;border-radius:2px;"></div><svg style="position:absolute;left:970px;top:642px" width="12" height="20"><rect x="0" y="0" width="2" height="2" fill="#2b2e37"/><rect x="1" y="1" width="1" height="1" fill="#8a8f9c"/><rect x="0" y="4" width="2" height="2" fill="#2b2e37"/><rect x="1" y="5" width="1" height="1" fill="#8a8f9c"/><rect x="0" y="8" width="2" height="2" fill="#2b2e37"/><rect x="1" y="9" width="1" height="1" fill="#8a8f9c"/><rect x="0" y="12" width="2" height="2" fill="#2b2e37"/><rect x="1" y="13" width="1" height="1" fill="#8a8f9c"/><rect x="0" y="16" width="2" height="2" fill="#2b2e37"/><rect x="1" y="17" width="1" height="1" fill="#8a8f9c"/><rect x="4" y="0" width="2" height="2" fill="#2b2e37"/><rect x="5" y="1" width="1" height="1" fill="#8a8f9c"/><rect x="4" y="4" width="2" height="2" fill="#2b2e37"/><rect x="5" y="5" width="1" height="1" fill="#8a8f9c"/><rect x="4" y="8" width="2" height="2" fill="#2b2e37"/><rect x="5" y="9" width="1" height="1" fill="#8a8f9c"/><rect x="4" y="12" width="2" height="2" fill="#2b2e37"/><rect x="5" y="13" width="1" height="1" fill="#8a8f9c"/><rect x="4" y="16" width="2" height="2" fill="#2b2e37"/><rect x="5" y="17" width="1" height="1" fill="#8a8f9c"/><rect x="8" y="0" width="2" height="2" fill="#2b2e37"/><rect x="9" y="1" width="1" height="1" fill="#8a8f9c"/><rect x="8" y="4" width="2" height="2" fill="#2b2e37"/><rect x="9" y="5" width="1" height="1" fill="#8a8f9c"/><rect x="8" y="8" width="2" height="2" fill="#2b2e37"/><rect x="9" y="9" width="1" height="1" fill="#8a8f9c"/><rect x="8" y="12" width="2" height="2" fill="#2b2e37"/><rect x="9" y="13" width="1" height="1" fill="#8a8f9c"/><rect x="8" y="16" width="2" height="2" fill="#2b2e37"/><rect x="9" y="17" width="1" height="1" fill="#8a8f9c"/></svg><div style="left:968px;top:841px;width:14px;height:54px;background-color:#3d414c;background-image:repeating-conic-gradient(#4d5260 0 25%, #3a3e48 0 50%);background-size:2px 2px;"></div><div style="left:968px;top:895px;width:14px;height:15px;background:linear-gradient(#474b57,#3c404b);border:1px solid #656a76;border-radius:3px;box-shadow:0 0 0 1px #23262d;"></div><svg style="position:absolute;left:0;top:0;overflow:visible" width="1" height="1"><path d="M970.5 904.5h9l-4.5-4.5z" fill="#f4f4f6"/></svg><div style="left:968px;top:910px;width:14px;height:15px;background:linear-gradient(#474b57,#3c404b);border:1px solid #656a76;border-radius:3px;box-shadow:0 0 0 1px #23262d;"></div><svg style="position:absolute;left:0;top:0;overflow:visible" width="1" height="1"><path d="M970.5 915.5h9l-4.5 4.5z" fill="#f4f4f6"/></svg><div style="left:183px;top:1026px;width:717px;height:15px;background:#3b3f4a;"></div><div style="left:184px;top:1027px;width:14px;height:14px;background:linear-gradient(#474b57,#3c404b);border:1px solid #656a76;border-radius:3px;box-shadow:0 0 0 1px #23262d;"></div><svg style="position:absolute;left:0;top:0;overflow:visible" width="1" height="1"><path d="M193.0 1030.0v8l-5-4z" fill="#f4f4f6"/></svg><div style="left:198px;top:1027px;width:699px;height:14px;background:#3c404b;border:1px solid #262932;border-radius:2px;box-shadow:inset 1px 1px 0 #4f5360;"></div><svg style="position:absolute;left:538px;top:1030px" width="20" height="8"><rect x="0" y="0" width="2" height="2" fill="#2b2e37"/><rect x="1" y="1" width="1" height="1" fill="#8a8f9c"/><rect x="0" y="4" width="2" height="2" fill="#2b2e37"/><rect x="1" y="5" width="1" height="1" fill="#8a8f9c"/><rect x="4" y="0" width="2" height="2" fill="#2b2e37"/><rect x="5" y="1" width="1" height="1" fill="#8a8f9c"/><rect x="4" y="4" width="2" height="2" fill="#2b2e37"/><rect x="5" y="5" width="1" height="1" fill="#8a8f9c"/><rect x="8" y="0" width="2" height="2" fill="#2b2e37"/><rect x="9" y="1" width="1" height="1" fill="#8a8f9c"/><rect x="8" y="4" width="2" height="2" fill="#2b2e37"/><rect x="9" y="5" width="1" height="1" fill="#8a8f9c"/><rect x="12" y="0" width="2" height="2" fill="#2b2e37"/><rect x="13" y="1" width="1" height="1" fill="#8a8f9c"/><rect x="12" y="4" width="2" height="2" fill="#2b2e37"/><rect x="13" y="5" width="1" height="1" fill="#8a8f9c"/><rect x="16" y="0" width="2" height="2" fill="#2b2e37"/><rect x="17" y="1" width="1" height="1" fill="#8a8f9c"/><rect x="16" y="4" width="2" height="2" fill="#2b2e37"/><rect x="17" y="5" width="1" height="1" fill="#8a8f9c"/></svg><div style="left:899px;top:1027px;width:14px;height:14px;background:linear-gradient(#474b57,#3c404b);border:1px solid #656a76;border-radius:3px;box-shadow:0 0 0 1px #23262d;"></div><svg style="position:absolute;left:0;top:0;overflow:visible" width="1" height="1"><path d="M908.0 1030.0v8l-5-4z" fill="#f4f4f6"/></svg><div style="left:914px;top:1027px;width:14px;height:14px;background:linear-gradient(#474b57,#3c404b);border:1px solid #656a76;border-radius:3px;box-shadow:0 0 0 1px #23262d;"></div><svg style="position:absolute;left:0;top:0;overflow:visible" width="1" height="1"><path d="M919.0 1030.0v8l5-4z" fill="#f4f4f6"/></svg><div style="left:930px;top:1028px;width:17px;height:12px;background:linear-gradient(#eeeef2,#c9cbd3 50%,#aeb1bc);border:1px solid #15171c;border-radius:1px;box-shadow:inset 1px 1px 0 #ffffff88;"><svg style="position:absolute;left:0;top:0" width="17" height="12"><path d="M4 6h9M8.5 2v8" stroke="#111" stroke-width="1.6"/></svg></div><div style="left:949px;top:1028px;width:17px;height:12px;background:linear-gradient(#eeeef2,#c9cbd3 50%,#aeb1bc);border:1px solid #15171c;border-radius:1px;box-shadow:inset 1px 1px 0 #ffffff88;"><svg style="position:absolute;left:0;top:0" width="17" height="12"><path d="M4 6h9" stroke="#111" stroke-width="1.6"/></svg></div><div style="left:0px;top:1041px;width:1280px;height:5px;background:#5c5c5c;"></div><div style="left:983px;top:396px;width:294px;height:650px;background:#3b3f4a;"></div><div style="left:991px;top:398px;width:129px;height:23px;background:linear-gradient(#5c6273,#4f5463 50%,#454a58);border:1px solid #737886;border-radius:3px;"></div><div class="t" style="left:1030px;top:405px;font-size:10px;font-weight:bold;color:#101114">Instrument</div><svg style="position:absolute;left:1000px;top:404px" width="14" height="10"><rect x="0.0" y="6" width="1.3" height="3" fill="#c9cdd8"/><rect x="2.5" y="3" width="1.3" height="6" fill="#c9cdd8"/><rect x="5.0" y="1" width="1.3" height="8" fill="#c9cdd8"/><rect x="7.5" y="3" width="1.3" height="6" fill="#c9cdd8"/><rect x="10.0" y="4" width="1.3" height="5" fill="#c9cdd8"/></svg><div style="left:1124px;top:398px;width:150px;height:23px;background:linear-gradient(#5c6273,#4f5463 50%,#454a58);border:1px solid #737886;border-radius:3px;"></div><div class="t" style="left:1166px;top:405px;font-size:10px;font-weight:bold;color:#101114">Sound library</div><svg style="position:absolute;left:1134px;top:404px" width="12" height="10"><rect x="0" y="1" width="10" height="1.6" fill="#c0c4cf"/><rect x="0" y="4.5" width="10" height="1.6" fill="#c0c4cf"/><rect x="0" y="8" width="10" height="1.6" fill="#c0c4cf"/></svg><div style="left:988px;top:422px;width:289px;height:620px;background:#565b6a;border:1px solid #858995;border-bottom:none;border-radius:3px 3px 0 0;"></div><div style="left:989px;top:424px;width:287px;height:16px;background:#555a69;"></div><div style="left:989px;top:440px;width:287px;height:16px;background:#8a8fa0;"></div><div style="left:989px;top:456px;width:287px;height:16px;background:#555a69;"></div><div style="left:989px;top:472px;width:287px;height:16px;background:#8a8fa0;"></div><div style="left:989px;top:488px;width:287px;height:16px;background:#555a69;"></div><div style="left:989px;top:504px;width:287px;height:16px;background:#8a8fa0;"></div><div style="left:989px;top:520px;width:287px;height:16px;background:#555a69;"></div><div style="left:989px;top:536px;width:287px;height:16px;background:#8a8fa0;"></div><div style="left:989px;top:552px;width:287px;height:16px;background:#555a69;"></div><div style="left:989px;top:568px;width:287px;height:16px;background:#8a8fa0;"></div><div style="left:989px;top:584px;width:287px;height:16px;background:#555a69;"></div><div style="left:989px;top:600px;width:287px;height:16px;background:#8a8fa0;"></div><div style="left:989px;top:616px;width:287px;height:16px;background:#555a69;"></div><div style="left:989px;top:632px;width:287px;height:16px;background:#8a8fa0;"></div><div style="left:989px;top:648px;width:287px;height:16px;background:#555a69;"></div><div style="left:989px;top:664px;width:287px;height:16px;background:#707792;"></div><div style="left:989px;top:680px;width:287px;height:16px;background:#555a69;"></div><svg style="position:absolute;left:999px;top:424px" width="2" height="300"><rect x="0" y="16" width="1" height="1" fill="#23252d"/><rect x="0" y="18" width="1" height="1" fill="#23252d"/><rect x="0" y="20" width="1" height="1" fill="#23252d"/><rect x="0" y="22" width="1" height="1" fill="#23252d"/><rect x="0" y="24" width="1" height="1" fill="#23252d"/><rect x="0" y="26" width="1" height="1" fill="#23252d"/><rect x="0" y="28" width="1" height="1" fill="#23252d"/><rect x="0" y="30" width="1" height="1" fill="#23252d"/><rect x="0" y="64" width="1" height="1" fill="#23252d"/><rect x="0" y="66" width="1" height="1" fill="#23252d"/><rect x="0" y="68" width="1" height="1" fill="#23252d"/><rect x="0" y="70" width="1" height="1" fill="#23252d"/><rect x="0" y="72" width="1" height="1" fill="#23252d"/><rect x="0" y="74" width="1" height="1" fill="#23252d"/><rect x="0" y="76" width="1" height="1" fill="#23252d"/><rect x="0" y="78" width="1" height="1" fill="#23252d"/><rect x="0" y="80" width="1" height="1" fill="#23252d"/><rect x="0" y="82" width="1" height="1" fill="#23252d"/><rect x="0" y="84" width="1" height="1" fill="#23252d"/><rect x="0" y="86" width="1" height="1" fill="#23252d"/><rect x="0" y="88" width="1" height="1" fill="#23252d"/><rect x="0" y="90" width="1" height="1" fill="#23252d"/><rect x="0" y="92" width="1" height="1" fill="#23252d"/><rect x="0" y="94" width="1" height="1" fill="#23252d"/><rect x="0" y="96" width="1" height="1" fill="#23252d"/><rect x="0" y="98" width="1" height="1" fill="#23252d"/><rect x="0" y="100" width="1" height="1" fill="#23252d"/><rect x="0" y="102" width="1" height="1" fill="#23252d"/><rect x="0" y="104" width="1" height="1" fill="#23252d"/><rect x="0" y="106" width="1" height="1" fill="#23252d"/><rect x="0" y="108" width="1" height="1" fill="#23252d"/><rect x="0" y="110" width="1" height="1" fill="#23252d"/><rect x="0" y="112" width="1" height="1" fill="#23252d"/><rect x="0" y="114" width="1" height="1" fill="#23252d"/><rect x="0" y="116" width="1" height="1" fill="#23252d"/><rect x="0" y="118" width="1" height="1" fill="#23252d"/><rect x="0" y="120" width="1" height="1" fill="#23252d"/><rect x="0" y="122" width="1" height="1" fill="#23252d"/><rect x="0" y="124" width="1" height="1" fill="#23252d"/><rect x="0" y="126" width="1" height="1" fill="#23252d"/><rect x="0" y="128" width="1" height="1" fill="#23252d"/><rect x="0" y="130" width="1" height="1" fill="#23252d"/><rect x="0" y="132" width="1" height="1" fill="#23252d"/><rect x="0" y="134" width="1" height="1" fill="#23252d"/><rect x="0" y="136" width="1" height="1" fill="#23252d"/><rect x="0" y="138" width="1" height="1" fill="#23252d"/><rect x="0" y="140" width="1" height="1" fill="#23252d"/><rect x="0" y="142" width="1" height="1" fill="#23252d"/><rect x="0" y="144" width="1" height="1" fill="#23252d"/><rect x="0" y="146" width="1" height="1" fill="#23252d"/><rect x="0" y="148" width="1" height="1" fill="#23252d"/><rect x="0" y="150" width="1" height="1" fill="#23252d"/><rect x="0" y="152" width="1" height="1" fill="#23252d"/><rect x="0" y="154" width="1" height="1" fill="#23252d"/><rect x="0" y="156" width="1" height="1" fill="#23252d"/><rect x="0" y="158" width="1" height="1" fill="#23252d"/><rect x="0" y="160" width="1" height="1" fill="#23252d"/><rect x="0" y="162" width="1" height="1" fill="#23252d"/><rect x="0" y="164" width="1" height="1" fill="#23252d"/><rect x="0" y="166" width="1" height="1" fill="#23252d"/><rect x="0" y="168" width="1" height="1" fill="#23252d"/><rect x="0" y="170" width="1" height="1" fill="#23252d"/><rect x="0" y="172" width="1" height="1" fill="#23252d"/><rect x="0" y="174" width="1" height="1" fill="#23252d"/><rect x="0" y="176" width="1" height="1" fill="#23252d"/><rect x="0" y="178" width="1" height="1" fill="#23252d"/><rect x="0" y="180" width="1" height="1" fill="#23252d"/><rect x="0" y="182" width="1" height="1" fill="#23252d"/><rect x="0" y="184" width="1" height="1" fill="#23252d"/><rect x="0" y="186" width="1" height="1" fill="#23252d"/><rect x="0" y="188" width="1" height="1" fill="#23252d"/><rect x="0" y="190" width="1" height="1" fill="#23252d"/><rect x="0" y="192" width="1" height="1" fill="#23252d"/><rect x="0" y="194" width="1" height="1" fill="#23252d"/><rect x="0" y="196" width="1" height="1" fill="#23252d"/><rect x="0" y="198" width="1" height="1" fill="#23252d"/><rect x="0" y="200" width="1" height="1" fill="#23252d"/><rect x="0" y="202" width="1" height="1" fill="#23252d"/><rect x="0" y="204" width="1" height="1" fill="#23252d"/><rect x="0" y="206" width="1" height="1" fill="#23252d"/><rect x="0" y="208" width="1" height="1" fill="#23252d"/><rect x="0" y="210" width="1" height="1" fill="#23252d"/><rect x="0" y="212" width="1" height="1" fill="#23252d"/><rect x="0" y="214" width="1" height="1" fill="#23252d"/><rect x="0" y="216" width="1" height="1" fill="#23252d"/><rect x="0" y="218" width="1" height="1" fill="#23252d"/><rect x="0" y="220" width="1" height="1" fill="#23252d"/><rect x="0" y="222" width="1" height="1" fill="#23252d"/><rect x="0" y="224" width="1" height="1" fill="#23252d"/><rect x="0" y="226" width="1" height="1" fill="#23252d"/><rect x="0" y="228" width="1" height="1" fill="#23252d"/><rect x="0" y="230" width="1" height="1" fill="#23252d"/><rect x="0" y="232" width="1" height="1" fill="#23252d"/><rect x="0" y="234" width="1" height="1" fill="#23252d"/><rect x="0" y="236" width="1" height="1" fill="#23252d"/><rect x="0" y="238" width="1" height="1" fill="#23252d"/><rect x="0" y="240" width="1" height="1" fill="#23252d"/><rect x="0" y="242" width="1" height="1" fill="#23252d"/><rect x="0" y="244" width="1" height="1" fill="#23252d"/><rect x="0" y="246" width="1" height="1" fill="#23252d"/><rect x="0" y="248" width="1" height="1" fill="#23252d"/><rect x="0" y="250" width="1" height="1" fill="#23252d"/><rect x="0" y="252" width="1" height="1" fill="#23252d"/><rect x="0" y="254" width="1" height="1" fill="#23252d"/><rect x="0" y="256" width="1" height="1" fill="#23252d"/><rect x="0" y="258" width="1" height="1" fill="#23252d"/><rect x="0" y="260" width="1" height="1" fill="#23252d"/><rect x="0" y="262" width="1" height="1" fill="#23252d"/></svg><div class="t" style="left:993px;top:426px;font-size:13px;color:#eef0f5;transform:scaleX(1.17);transform-origin:0 0">System drumkits</div><div style="left:995px;top:443px;width:9px;height:9px;background:#5a5f6e;border:1px solid #22252c;"></div><svg style="position:absolute;left:995px;top:443px" width="9" height="9"><path d="M2 4.5h5M4.5 2v5" stroke="#d8dbe4" stroke-width="1"/></svg><svg style="position:absolute;left:1004px;top:447px" width="8" height="1"><rect x="1" width="1" height="1" fill="#1e2027"/><rect x="3" width="1" height="1" fill="#1e2027"/><rect x="5" width="1" height="1" fill="#1e2027"/></svg><div class="t" style="left:1013px;top:442px;font-size:13px;color:#f2f4f8;transform:scaleX(1.17);transform-origin:0 0">GMkit</div><div style="left:995px;top:459px;width:9px;height:9px;background:#5a5f6e;border:1px solid #22252c;"></div><svg style="position:absolute;left:995px;top:459px" width="9" height="9"><path d="M2 4.5h5M4.5 2v5" stroke="#d8dbe4" stroke-width="1"/></svg><svg style="position:absolute;left:1004px;top:463px" width="8" height="1"><rect x="1" width="1" height="1" fill="#1e2027"/><rect x="3" width="1" height="1" fill="#1e2027"/><rect x="5" width="1" height="1" fill="#1e2027"/></svg><div class="t" style="left:1013px;top:458px;font-size:13px;color:#f2f4f8;transform:scaleX(1.17);transform-origin:0 0">TR808EmulationKit</div><div class="t" style="left:993px;top:474px;font-size:13px;color:#eef0f5;transform:scaleX(1.17);transform-origin:0 0">User drumkits</div><div style="left:995px;top:491px;width:9px;height:9px;background:#5a5f6e;border:1px solid #22252c;"></div><svg style="position:absolute;left:995px;top:491px" width="9" height="9"><path d="M2 4.5h5M4.5 2v5" stroke="#d8dbe4" stroke-width="1"/></svg><svg style="position:absolute;left:1004px;top:495px" width="8" height="1"><rect x="1" width="1" height="1" fill="#1e2027"/><rect x="3" width="1" height="1" fill="#1e2027"/><rect x="5" width="1" height="1" fill="#1e2027"/></svg><div class="t" style="left:1013px;top:490px;font-size:13px;color:#f2f4f8;transform:scaleX(1.17);transform-origin:0 0">Ace-Tone_Rhythm_AceKit</div><div style="left:995px;top:507px;width:9px;height:9px;background:#5a5f6e;border:1px solid #22252c;"></div><svg style="position:absolute;left:995px;top:507px" width="9" height="9"><path d="M2 4.5h5M4.5 2v5" stroke="#d8dbe4" stroke-width="1"/></svg><svg style="position:absolute;left:1004px;top:511px" width="8" height="1"><rect x="1" width="1" height="1" fill="#1e2027"/><rect x="3" width="1" height="1" fill="#1e2027"/><rect x="5" width="1" height="1" fill="#1e2027"/></svg><div class="t" style="left:1013px;top:506px;font-size:13px;color:#f2f4f8;transform:scaleX(1.17);transform-origin:0 0">Altemark_gameboy-lsdjKit</div><div style="left:995px;top:523px;width:9px;height:9px;background:#5a5f6e;border:1px solid #22252c;"></div><svg style="position:absolute;left:995px;top:523px" width="9" height="9"><path d="M2 4.5h5M4.5 2v5" stroke="#d8dbe4" stroke-width="1"/></svg><svg style="position:absolute;left:1004px;top:527px" width="8" height="1"><rect x="1" width="1" height="1" fill="#1e2027"/><rect x="3" width="1" height="1" fill="#1e2027"/><rect x="5" width="1" height="1" fill="#1e2027"/></svg><div class="t" style="left:1013px;top:522px;font-size:13px;color:#f2f4f8;transform:scaleX(1.17);transform-origin:0 0">Blackie666_8bitKit</div><div style="left:995px;top:539px;width:9px;height:9px;background:#5a5f6e;border:1px solid #22252c;"></div><svg style="position:absolute;left:995px;top:539px" width="9" height="9"><path d="M2 4.5h5M4.5 2v5" stroke="#d8dbe4" stroke-width="1"/></svg><svg style="position:absolute;left:1004px;top:543px" width="8" height="1"><rect x="1" width="1" height="1" fill="#1e2027"/><rect x="3" width="1" height="1" fill="#1e2027"/><rect x="5" width="1" height="1" fill="#1e2027"/></svg><div class="t" style="left:1013px;top:538px;font-size:13px;color:#f2f4f8;transform:scaleX(1.17);transform-origin:0 0">Boss_DR550_djKit</div><div style="left:995px;top:555px;width:9px;height:9px;background:#5a5f6e;border:1px solid #22252c;"></div><svg style="position:absolute;left:995px;top:555px" width="9" height="9"><path d="M2 4.5h5M4.5 2v5" stroke="#d8dbe4" stroke-width="1"/></svg><svg style="position:absolute;left:1004px;top:559px" width="8" height="1"><rect x="1" width="1" height="1" fill="#1e2027"/><rect x="3" width="1" height="1" fill="#1e2027"/><rect x="5" width="1" height="1" fill="#1e2027"/></svg><div class="t" style="left:1013px;top:554px;font-size:13px;color:#f2f4f8;transform:scaleX(1.17);transform-origin:0 0">Ianhall_SampleSetKit</div><div style="left:995px;top:571px;width:9px;height:9px;background:#5a5f6e;border:1px solid #22252c;"></div><svg style="position:absolute;left:995px;top:571px" width="9" height="9"><path d="M2 4.5h5M4.5 2v5" stroke="#d8dbe4" stroke-width="1"/></svg><svg style="position:absolute;left:1004px;top:575px" width="8" height="1"><rect x="1" width="1" height="1" fill="#1e2027"/><rect x="3" width="1" height="1" fill="#1e2027"/><rect x="5" width="1" height="1" fill="#1e2027"/></svg><div class="t" style="left:1013px;top:570px;font-size:13px;color:#f2f4f8;transform:scaleX(1.17);transform-origin:0 0">Linn_LM1Kit</div><div style="left:995px;top:587px;width:9px;height:9px;background:#5a5f6e;border:1px solid #22252c;"></div><svg style="position:absolute;left:995px;top:587px" width="9" height="9"><path d="M2 4.5h5M4.5 2v5" stroke="#d8dbe4" stroke-width="1"/></svg><svg style="position:absolute;left:1004px;top:591px" width="8" height="1"><rect x="1" width="1" height="1" fill="#1e2027"/><rect x="3" width="1" height="1" fill="#1e2027"/><rect x="5" width="1" height="1" fill="#1e2027"/></svg><div class="t" style="left:1013px;top:586px;font-size:13px;color:#f2f4f8;transform:scaleX(1.17);transform-origin:0 0">Ltibbits_RockKit</div><div style="left:995px;top:603px;width:9px;height:9px;background:#5a5f6e;border:1px solid #22252c;"></div><svg style="position:absolute;left:995px;top:603px" width="9" height="9"><path d="M2 4.5h5M4.5 2v5" stroke="#d8dbe4" stroke-width="1"/></svg><svg style="position:absolute;left:1004px;top:607px" width="8" height="1"><rect x="1" width="1" height="1" fill="#1e2027"/><rect x="3" width="1" height="1" fill="#1e2027"/><rect x="5" width="1" height="1" fill="#1e2027"/></svg><div class="t" style="left:1013px;top:602px;font-size:13px;color:#f2f4f8;transform:scaleX(1.17);transform-origin:0 0">MatiasReccius_heavyMetalKit</div><div style="left:995px;top:619px;width:9px;height:9px;background:#5a5f6e;border:1px solid #22252c;"></div><svg style="position:absolute;left:995px;top:619px" width="9" height="9"><path d="M2 4.5h5M4.5 2v5" stroke="#d8dbe4" stroke-width="1"/></svg><svg style="position:absolute;left:1004px;top:623px" width="8" height="1"><rect x="1" width="1" height="1" fill="#1e2027"/><rect x="3" width="1" height="1" fill="#1e2027"/><rect x="5" width="1" height="1" fill="#1e2027"/></svg><div class="t" style="left:1013px;top:618px;font-size:13px;color:#f2f4f8;transform:scaleX(1.17);transform-origin:0 0">Roland_MC303Kit</div><div style="left:995px;top:635px;width:9px;height:9px;background:#5a5f6e;border:1px solid #22252c;"></div><svg style="position:absolute;left:995px;top:635px" width="9" height="9"><path d="M2 4.5h5M4.5 2v5" stroke="#d8dbe4" stroke-width="1"/></svg><svg style="position:absolute;left:1004px;top:639px" width="8" height="1"><rect x="1" width="1" height="1" fill="#1e2027"/><rect x="3" width="1" height="1" fill="#1e2027"/><rect x="5" width="1" height="1" fill="#1e2027"/></svg><div class="t" style="left:1013px;top:634px;font-size:13px;color:#f2f4f8;transform:scaleX(1.17);transform-origin:0 0">Suonho_deconstructionKit</div><div style="left:995px;top:651px;width:9px;height:9px;background:#5a5f6e;border:1px solid #22252c;"></div><svg style="position:absolute;left:995px;top:651px" width="9" height="9"><path d="M2 4.5h5M4.5 2v5" stroke="#d8dbe4" stroke-width="1"/></svg><svg style="position:absolute;left:1004px;top:655px" width="8" height="1"><rect x="1" width="1" height="1" fill="#1e2027"/><rect x="3" width="1" height="1" fill="#1e2027"/><rect x="5" width="1" height="1" fill="#1e2027"/></svg><div class="t" style="left:1013px;top:650px;font-size:13px;color:#f2f4f8;transform:scaleX(1.17);transform-origin:0 0">thanvannispen_industrisplodeKit</div><div style="left:995px;top:667px;width:9px;height:9px;background:#5a5f6e;border:1px solid #22252c;"></div><svg style="position:absolute;left:995px;top:667px" width="9" height="9"><path d="M2 4.5h5M4.5 2v5" stroke="#d8dbe4" stroke-width="1"/></svg><svg style="position:absolute;left:1004px;top:671px" width="8" height="1"><rect x="1" width="1" height="1" fill="#1e2027"/><rect x="3" width="1" height="1" fill="#1e2027"/><rect x="5" width="1" height="1" fill="#1e2027"/></svg><div class="t" style="left:1013px;top:666px;font-size:13px;color:#f2f4f8;transform:scaleX(1.17);transform-origin:0 0">TicTacShutUp_studio_17-29Kit</div><div style="left:995px;top:683px;width:9px;height:9px;background:#5a5f6e;border:1px solid #22252c;"></div><svg style="position:absolute;left:995px;top:683px" width="9" height="9"><path d="M2 4.5h5M4.5 2v5" stroke="#d8dbe4" stroke-width="1"/></svg><svg style="position:absolute;left:1004px;top:687px" width="8" height="1"><rect x="1" width="1" height="1" fill="#1e2027"/><rect x="3" width="1" height="1" fill="#1e2027"/><rect x="5" width="1" height="1" fill="#1e2027"/></svg><div class="t" style="left:1013px;top:682px;font-size:13px;color:#f2f4f8;transform:scaleX(1.17);transform-origin:0 0">Yoursck+Vitriolix_TexturizerKit</div></body></html>
